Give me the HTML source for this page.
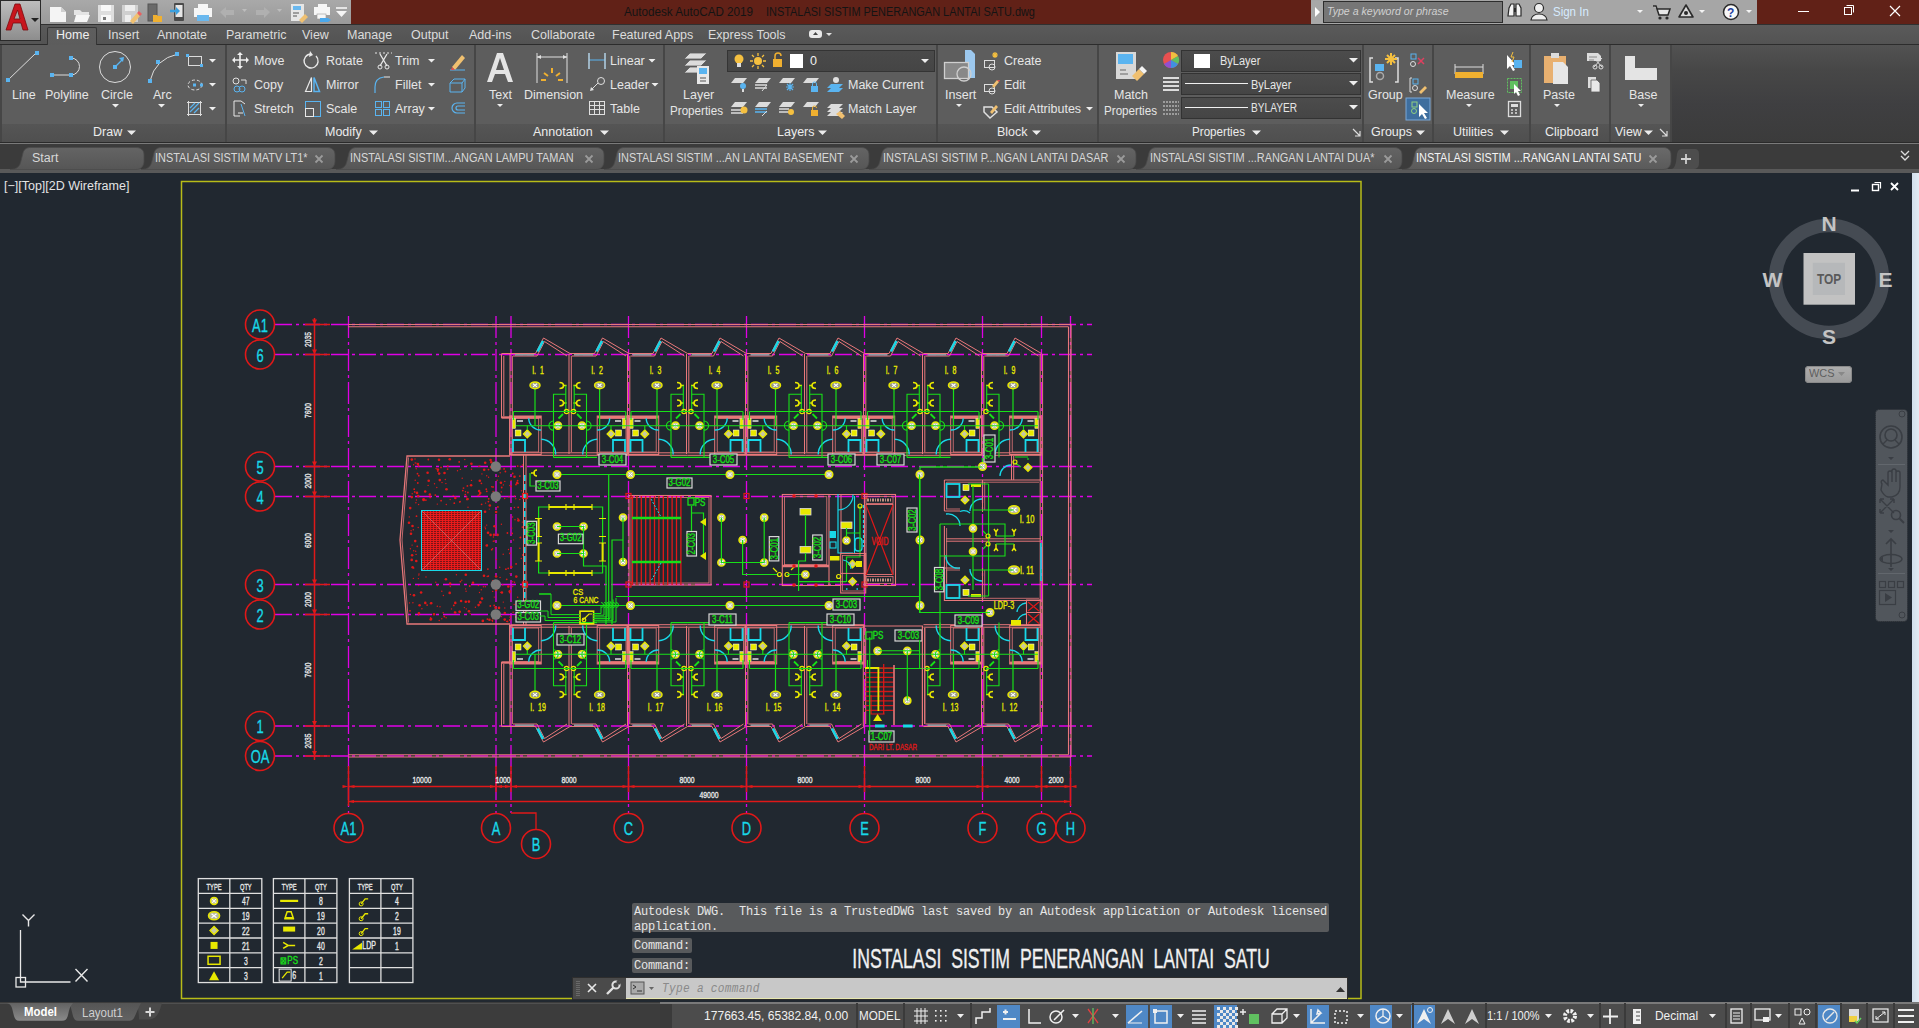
<!DOCTYPE html>
<html><head><meta charset="utf-8"><title>AutoCAD</title><style>
*{margin:0;padding:0;box-sizing:content-box}
html,body{width:1919px;height:1028px;overflow:hidden;background:#212830;font-family:"Liberation Sans",sans-serif}
.t{position:absolute;white-space:nowrap;line-height:1.15;font-family:"Liberation Sans",sans-serif}
svg{position:absolute;overflow:visible}
</style></head>
<body>
<div style="position:absolute;left:0px;top:173px;width:1919px;height:829px;background:#212830"></div><div style="position:absolute;left:1912px;top:173px;width:7px;height:829px;background:linear-gradient(90deg,#d2dfec,#e2ebf4)"></div><div class="t" style="left:4px;top:179px;font-size:12.5px;color:#e4e4e4;">[−][Top][2D Wireframe]</div><svg style="position:absolute;left:1848px;top:180px;" width="60" height="14" viewBox="0 0 60 14"><path d="M3 10.5 h8" stroke="#fff" stroke-width="2"/><rect x="24.5" y="4.5" width="6" height="6" fill="none" stroke="#fff" stroke-width="1.4"/><path d="M26.5 2.5 h6 v6" fill="none" stroke="#fff" stroke-width="1.2"/><path d="M43 3 l7 7 M50 3 l-7 7" stroke="#fff" stroke-width="1.8"/></svg><svg style="position:absolute;left:1769px;top:219px;overflow:visible" width="130" height="130" viewBox="0 0 130 130"><circle cx="60" cy="60" r="53.5" fill="none" stroke="#454b53" stroke-width="13.5"/><rect x="34.5" y="34" width="51.5" height="51.7" fill="#c2c2c2"/><rect x="43.8" y="43.8" width="32.2" height="32.2" fill="#b6b8ba"/><text transform="translate(60 65) scale(0.85 1)" text-anchor="middle" font-family="Liberation Sans" font-weight="bold" font-size="14" fill="#5a5a5a">TOP</text><text x="60" y="12" text-anchor="middle" font-family="Liberation Sans" font-weight="bold" font-size="21" fill="#c4c4c4">N</text><text x="60" y="125" text-anchor="middle" font-family="Liberation Sans" font-weight="bold" font-size="21" fill="#c4c4c4">S</text><text x="3.5" y="67.5" text-anchor="middle" font-family="Liberation Sans" font-weight="bold" font-size="21" fill="#c4c4c4">W</text><text x="116.5" y="67.5" text-anchor="middle" font-family="Liberation Sans" font-weight="bold" font-size="21" fill="#c4c4c4">E</text></svg><div style="position:absolute;left:1805px;top:366px;width:47px;height:17px;background:linear-gradient(#adadad,#9a9a9a);border-radius:4px;box-shadow:inset 0 0 0 1px #8a8a8a"></div><div class="t" style="left:1809px;top:367px;font-size:11.5px;color:#5e5e5e;;transform:scaleX(0.95);transform-origin:0 0">WCS</div><svg style="position:absolute;left:1838px;top:372px;" width="8" height="6" viewBox="0 0 8 6"><path d="M0 0 h7 l-3.5 4z" fill="#888"/></svg><svg style="position:absolute;left:1875px;top:409px;" width="34" height="214" viewBox="0 0 34 214"><rect x="0.5" y="0.5" width="32" height="212" rx="4" fill="#51565c" stroke="#2a2e34" stroke-dasharray="1 1"/><circle cx="27" cy="5" r="3" fill="none" stroke="#3a3e44"/><circle cx="27" cy="206" r="3" fill="none" stroke="#3a3e44"/><circle cx="16" cy="28" r="11" fill="none" stroke="#3a3e44" stroke-width="1.6"/><circle cx="16" cy="26" r="6" fill="none" stroke="#3a3e44" stroke-width="1.6"/><path d="M8 35 l4-4 M24 35 l-4-4" stroke="#3a3e44" stroke-width="1.4"/><path d="M13 48 h6 l-3 3z M13 121 h6 l-3 3z M13 159 h6 l-3 3z" fill="#3a3e44"/><path d="M3 55.5 h27 M3 164.5 h27" stroke="#62676d"/><path d="M7 75 q-2-3 1-4 l5 5 v-12 q0-2 2-2 q2 0 2 2 v9 v-11 q0-2 2-2 q2 0 2 2 v11 v-9 q0-2 2-2 q2 0 2 2 v14 q0 8 -8 10 h-4 q-4 -1 -7 -7z" fill="none" stroke="#3a3e44" stroke-width="1.4"/><path d="M5 90 l14 14 M19 90 l-14 14 M5 90 v4 M5 90 h4 M19 90 h-4 M19 90 v4 M5 104 v-4 M5 104 h4" stroke="#3a3e44" stroke-width="1.4" fill="none"/><circle cx="21" cy="106" r="4.5" fill="none" stroke="#3a3e44" stroke-width="1.6"/><path d="M24 109 l5 5" stroke="#3a3e44" stroke-width="2"/><path d="M16 130 v28 M11 135 l5-5 5 5" stroke="#3a3e44" stroke-width="1.6" fill="none"/><ellipse cx="16" cy="150" rx="11" ry="4.5" fill="none" stroke="#3a3e44" stroke-width="1.4"/><path d="M5 150 l3 -3 v6z" fill="#3a3e44"/><rect x="4.5" y="172.5" width="6" height="6" fill="none" stroke="#3a3e44" stroke-width="1.2"/><rect x="13.5" y="172.5" width="6" height="6" fill="none" stroke="#3a3e44" stroke-width="1.2"/><rect x="22.5" y="172.5" width="6" height="6" fill="none" stroke="#3a3e44" stroke-width="1.2"/><rect x="4.5" y="181.5" width="16" height="14" fill="none" stroke="#3a3e44" stroke-width="1.2"/><path d="M10 184 v9 l7 -4.5z" fill="#3a3e44"/></svg>
<svg style="left:0;top:0" width="1919" height="1028" viewBox="0 0 1919 1028"><line x1="275" y1="324.5" x2="1092" y2="324.5" stroke="#e000e6" stroke-width="1.3" stroke-dasharray="17 4 3 4"/><line x1="275" y1="354.5" x2="1092" y2="354.5" stroke="#e000e6" stroke-width="1.3" stroke-dasharray="17 4 3 4"/><line x1="275" y1="466.5" x2="1092" y2="466.5" stroke="#e000e6" stroke-width="1.3" stroke-dasharray="17 4 3 4"/><line x1="275" y1="496.5" x2="1092" y2="496.5" stroke="#e000e6" stroke-width="1.3" stroke-dasharray="17 4 3 4"/><line x1="275" y1="584.5" x2="1092" y2="584.5" stroke="#e000e6" stroke-width="1.3" stroke-dasharray="17 4 3 4"/><line x1="275" y1="614.5" x2="516" y2="614.5" stroke="#e000e6" stroke-width="1.3" stroke-dasharray="17 4 3 4"/><line x1="275" y1="726" x2="1092" y2="726" stroke="#e000e6" stroke-width="1.3" stroke-dasharray="17 4 3 4"/><line x1="275" y1="756" x2="1092" y2="756" stroke="#e000e6" stroke-width="1.3" stroke-dasharray="17 4 3 4"/><line x1="348.5" y1="316" x2="348.5" y2="813" stroke="#e000e6" stroke-width="1.3" stroke-dasharray="22 4 3 4"/><line x1="496" y1="316" x2="496" y2="813" stroke="#e000e6" stroke-width="1.3" stroke-dasharray="22 4 3 4"/><line x1="511" y1="316" x2="511" y2="813" stroke="#e000e6" stroke-width="1.3" stroke-dasharray="22 4 3 4"/><line x1="628.5" y1="316" x2="628.5" y2="813" stroke="#e000e6" stroke-width="1.3" stroke-dasharray="22 4 3 4"/><line x1="746.5" y1="316" x2="746.5" y2="813" stroke="#e000e6" stroke-width="1.3" stroke-dasharray="22 4 3 4"/><line x1="864.5" y1="316" x2="864.5" y2="813" stroke="#e000e6" stroke-width="1.3" stroke-dasharray="22 4 3 4"/><line x1="982.5" y1="316" x2="982.5" y2="813" stroke="#e000e6" stroke-width="1.3" stroke-dasharray="22 4 3 4"/><line x1="1041.5" y1="316" x2="1041.5" y2="813" stroke="#e000e6" stroke-width="1.3" stroke-dasharray="22 4 3 4"/><line x1="1070.5" y1="316" x2="1070.5" y2="813" stroke="#e000e6" stroke-width="1.3" stroke-dasharray="22 4 3 4"/><circle cx="260" cy="324.5" r="14.5" fill="#212830" stroke="#e01818" stroke-width="1.6"/><text transform="translate(260 331.5) scale(0.68 1)" text-anchor="middle" font-family="Liberation Sans" font-size="19" fill="#18d8e8" stroke="#18d8e8" stroke-width="0.35" >A1</text><circle cx="260" cy="354.5" r="14.5" fill="#212830" stroke="#e01818" stroke-width="1.6"/><text transform="translate(260 361.5) scale(0.68 1)" text-anchor="middle" font-family="Liberation Sans" font-size="19" fill="#18d8e8" stroke="#18d8e8" stroke-width="0.35" >6</text><circle cx="260" cy="466.5" r="14.5" fill="#212830" stroke="#e01818" stroke-width="1.6"/><text transform="translate(260 473.5) scale(0.68 1)" text-anchor="middle" font-family="Liberation Sans" font-size="19" fill="#18d8e8" stroke="#18d8e8" stroke-width="0.35" >5</text><circle cx="260" cy="496.5" r="14.5" fill="#212830" stroke="#e01818" stroke-width="1.6"/><text transform="translate(260 503.5) scale(0.68 1)" text-anchor="middle" font-family="Liberation Sans" font-size="19" fill="#18d8e8" stroke="#18d8e8" stroke-width="0.35" >4</text><circle cx="260" cy="584.5" r="14.5" fill="#212830" stroke="#e01818" stroke-width="1.6"/><text transform="translate(260 591.5) scale(0.68 1)" text-anchor="middle" font-family="Liberation Sans" font-size="19" fill="#18d8e8" stroke="#18d8e8" stroke-width="0.35" >3</text><circle cx="260" cy="614.5" r="14.5" fill="#212830" stroke="#e01818" stroke-width="1.6"/><text transform="translate(260 621.5) scale(0.68 1)" text-anchor="middle" font-family="Liberation Sans" font-size="19" fill="#18d8e8" stroke="#18d8e8" stroke-width="0.35" >2</text><circle cx="260" cy="726" r="14.5" fill="#212830" stroke="#e01818" stroke-width="1.6"/><text transform="translate(260 733) scale(0.68 1)" text-anchor="middle" font-family="Liberation Sans" font-size="19" fill="#18d8e8" stroke="#18d8e8" stroke-width="0.35" >1</text><circle cx="260" cy="756" r="14.5" fill="#212830" stroke="#e01818" stroke-width="1.6"/><text transform="translate(260 763) scale(0.68 1)" text-anchor="middle" font-family="Liberation Sans" font-size="19" fill="#18d8e8" stroke="#18d8e8" stroke-width="0.35" >OA</text><circle cx="348.5" cy="828" r="14.5" fill="#212830" stroke="#e01818" stroke-width="1.6"/><text transform="translate(348.5 835) scale(0.68 1)" text-anchor="middle" font-family="Liberation Sans" font-size="19" fill="#18d8e8" stroke="#18d8e8" stroke-width="0.35" >A1</text><circle cx="496" cy="828" r="14.5" fill="#212830" stroke="#e01818" stroke-width="1.6"/><text transform="translate(496 835) scale(0.68 1)" text-anchor="middle" font-family="Liberation Sans" font-size="19" fill="#18d8e8" stroke="#18d8e8" stroke-width="0.35" >A</text><path d="M511 813 H536 V829" stroke="#e01818" stroke-width="1.3" fill="none" /><circle cx="536" cy="844" r="14.5" fill="#212830" stroke="#e01818" stroke-width="1.6"/><text transform="translate(536 851) scale(0.68 1)" text-anchor="middle" font-family="Liberation Sans" font-size="19" fill="#18d8e8" stroke="#18d8e8" stroke-width="0.35" >B</text><circle cx="628.5" cy="828" r="14.5" fill="#212830" stroke="#e01818" stroke-width="1.6"/><text transform="translate(628.5 835) scale(0.68 1)" text-anchor="middle" font-family="Liberation Sans" font-size="19" fill="#18d8e8" stroke="#18d8e8" stroke-width="0.35" >C</text><circle cx="746.5" cy="828" r="14.5" fill="#212830" stroke="#e01818" stroke-width="1.6"/><text transform="translate(746.5 835) scale(0.68 1)" text-anchor="middle" font-family="Liberation Sans" font-size="19" fill="#18d8e8" stroke="#18d8e8" stroke-width="0.35" >D</text><circle cx="864.5" cy="828" r="14.5" fill="#212830" stroke="#e01818" stroke-width="1.6"/><text transform="translate(864.5 835) scale(0.68 1)" text-anchor="middle" font-family="Liberation Sans" font-size="19" fill="#18d8e8" stroke="#18d8e8" stroke-width="0.35" >E</text><circle cx="982.5" cy="828" r="14.5" fill="#212830" stroke="#e01818" stroke-width="1.6"/><text transform="translate(982.5 835) scale(0.68 1)" text-anchor="middle" font-family="Liberation Sans" font-size="19" fill="#18d8e8" stroke="#18d8e8" stroke-width="0.35" >F</text><circle cx="1041.5" cy="828" r="14.5" fill="#212830" stroke="#e01818" stroke-width="1.6"/><text transform="translate(1041.5 835) scale(0.68 1)" text-anchor="middle" font-family="Liberation Sans" font-size="19" fill="#18d8e8" stroke="#18d8e8" stroke-width="0.35" >G</text><circle cx="1070.5" cy="828" r="14.5" fill="#212830" stroke="#e01818" stroke-width="1.6"/><text transform="translate(1070.5 835) scale(0.68 1)" text-anchor="middle" font-family="Liberation Sans" font-size="19" fill="#18d8e8" stroke="#18d8e8" stroke-width="0.35" >H</text><line x1="348" y1="324.5" x2="1071" y2="324.5" stroke="#e8787a" stroke-width="1.2" /><line x1="348" y1="326.8" x2="1068.5" y2="326.8" stroke="#e8787a" stroke-width="1.1" /><line x1="348" y1="754.8" x2="1068.5" y2="754.8" stroke="#e8787a" stroke-width="1.1" /><line x1="348" y1="757" x2="1071" y2="757" stroke="#e8787a" stroke-width="1.2" /><line x1="1068.5" y1="326.8" x2="1068.5" y2="754.8" stroke="#e8787a" stroke-width="1.1" /><line x1="1071" y1="324.5" x2="1071" y2="757" stroke="#e8787a" stroke-width="1.2" /><path d="M510 456 H407 L400 540 L407 624 H510" stroke="#e8787a" stroke-width="1.3" fill="none" /><path d="M408.5 457.5 L402 540 L408.5 622.5" stroke="#e8787a" stroke-width="0.8" fill="none" /><path d="M510 456 V453 H513 M510 624 V627 H513" stroke="#e8787a" stroke-width="1" fill="none" /><rect x="421.5" y="510.5" width="60" height="60" fill="#7a1418" stroke="#18d8e8" stroke-width="1"/><path d="M421.5 510.5 h60 M421.5 512.5 h60 M421.5 514.5 h60 M421.5 516.5 h60 M421.5 518.5 h60 M421.5 520.5 h60 M421.5 522.5 h60 M421.5 524.5 h60 M421.5 526.5 h60 M421.5 528.5 h60 M421.5 530.5 h60 M421.5 532.5 h60 M421.5 534.5 h60 M421.5 536.5 h60 M421.5 538.5 h60 M421.5 540.5 h60 M421.5 542.5 h60 M421.5 544.5 h60 M421.5 546.5 h60 M421.5 548.5 h60 M421.5 550.5 h60 M421.5 552.5 h60 M421.5 554.5 h60 M421.5 556.5 h60 M421.5 558.5 h60 M421.5 560.5 h60 M421.5 562.5 h60 M421.5 564.5 h60 M421.5 566.5 h60 M421.5 568.5 h60 M421.5 570.5 h60 M421.5 510.5 v60 M424.5 510.5 v60 M427.5 510.5 v60 M430.5 510.5 v60 M433.5 510.5 v60 M436.5 510.5 v60 M439.5 510.5 v60 M442.5 510.5 v60 M445.5 510.5 v60 M448.5 510.5 v60 M451.5 510.5 v60 M454.5 510.5 v60 M457.5 510.5 v60 M460.5 510.5 v60 M463.5 510.5 v60 M466.5 510.5 v60 M469.5 510.5 v60 M472.5 510.5 v60 M475.5 510.5 v60 M478.5 510.5 v60 M481.5 510.5 v60 " stroke="#f01c1c" stroke-width="0.9" fill="none" /><path d="M421.5 510.5 L481.5 570.5 M481.5 510.5 L421.5 570.5" stroke="#d08080" stroke-width="0.6" fill="none" /><rect x="421.5" y="510.5" width="60" height="60" fill="none" stroke="#18d8e8" stroke-width="1"/><circle cx="445.9" cy="483.6" r="0.7" fill="#e01818"/><circle cx="417.3" cy="546.3" r="0.9" fill="#e01818"/><circle cx="475.4" cy="607.3" r="0.7" fill="#e01818"/><circle cx="413.3" cy="529.7" r="0.7" fill="#e01818"/><circle cx="415.7" cy="551.2" r="0.7" fill="#e01818"/><circle cx="416.1" cy="554.4" r="0.7" fill="#e01818"/><circle cx="520.3" cy="466.6" r="0.7" fill="#e01818"/><circle cx="442.0" cy="482.5" r="0.7" fill="#e01818"/><circle cx="486.7" cy="475.8" r="0.7" fill="#e01818"/><circle cx="416.2" cy="468.7" r="0.7" fill="#e01818"/><circle cx="497.6" cy="534.9" r="1.3" fill="#e01818"/><circle cx="450.2" cy="499.5" r="0.7" fill="#e01818"/><circle cx="488.7" cy="498.8" r="0.9" fill="#e01818"/><circle cx="468.9" cy="601.6" r="1.3" fill="#e01818"/><circle cx="441.8" cy="618.8" r="0.7" fill="#e01818"/><circle cx="467.4" cy="485.9" r="0.9" fill="#e01818"/><circle cx="413.5" cy="567.9" r="0.9" fill="#e01818"/><circle cx="465.6" cy="588.9" r="0.7" fill="#e01818"/><circle cx="504.8" cy="613.0" r="1.3" fill="#e01818"/><circle cx="488.5" cy="469.6" r="0.9" fill="#e01818"/><circle cx="482.8" cy="620.9" r="1.3" fill="#e01818"/><circle cx="485.2" cy="462.7" r="1.3" fill="#e01818"/><circle cx="465.3" cy="494.6" r="0.9" fill="#e01818"/><circle cx="423.7" cy="499.4" r="1.3" fill="#e01818"/><circle cx="513.5" cy="539.9" r="0.7" fill="#e01818"/><circle cx="509.7" cy="592.5" r="0.9" fill="#e01818"/><circle cx="489.5" cy="619.8" r="1.3" fill="#e01818"/><circle cx="518.2" cy="483.6" r="0.7" fill="#e01818"/><circle cx="410.4" cy="594.5" r="0.7" fill="#e01818"/><circle cx="439.0" cy="459.7" r="1.3" fill="#e01818"/><circle cx="445.3" cy="479.5" r="0.7" fill="#e01818"/><circle cx="461.1" cy="601.0" r="1.3" fill="#e01818"/><circle cx="430.7" cy="619.5" r="1.3" fill="#e01818"/><circle cx="415.0" cy="459.0" r="0.7" fill="#e01818"/><circle cx="470.2" cy="613.7" r="0.7" fill="#e01818"/><circle cx="417.0" cy="492.9" r="1.3" fill="#e01818"/><circle cx="425.9" cy="500.1" r="0.9" fill="#e01818"/><circle cx="520.5" cy="537.3" r="0.9" fill="#e01818"/><circle cx="418.8" cy="475.7" r="0.9" fill="#e01818"/><circle cx="493.4" cy="537.0" r="0.7" fill="#e01818"/><circle cx="467.9" cy="492.5" r="0.9" fill="#e01818"/><circle cx="412.1" cy="545.1" r="0.7" fill="#e01818"/><circle cx="488.4" cy="501.6" r="0.9" fill="#e01818"/><circle cx="512.5" cy="517.0" r="0.7" fill="#e01818"/><circle cx="469.7" cy="586.0" r="0.9" fill="#e01818"/><circle cx="498.9" cy="582.6" r="0.7" fill="#e01818"/><circle cx="500.9" cy="592.4" r="0.7" fill="#e01818"/><circle cx="492.3" cy="620.3" r="0.9" fill="#e01818"/><circle cx="462.8" cy="490.6" r="0.9" fill="#e01818"/><circle cx="460.0" cy="611.7" r="0.9" fill="#e01818"/><circle cx="517.9" cy="518.4" r="0.7" fill="#e01818"/><circle cx="521.3" cy="558.5" r="0.7" fill="#e01818"/><circle cx="500.2" cy="472.8" r="0.7" fill="#e01818"/><circle cx="512.7" cy="586.5" r="0.7" fill="#e01818"/><circle cx="463.5" cy="488.1" r="0.9" fill="#e01818"/><circle cx="418.9" cy="613.2" r="1.3" fill="#e01818"/><circle cx="461.8" cy="580.2" r="0.7" fill="#e01818"/><circle cx="491.6" cy="486.7" r="0.7" fill="#e01818"/><circle cx="412.1" cy="555.3" r="1.3" fill="#e01818"/><circle cx="500.9" cy="482.8" r="1.3" fill="#e01818"/><circle cx="471.5" cy="480.4" r="0.7" fill="#e01818"/><circle cx="500.1" cy="577.4" r="0.7" fill="#e01818"/><circle cx="469.0" cy="611.2" r="1.3" fill="#e01818"/><circle cx="521.5" cy="490.8" r="0.7" fill="#e01818"/><circle cx="412.2" cy="493.7" r="0.7" fill="#e01818"/><circle cx="496.1" cy="512.1" r="1.3" fill="#e01818"/><circle cx="504.1" cy="468.9" r="0.9" fill="#e01818"/><circle cx="511.3" cy="567.0" r="1.3" fill="#e01818"/><circle cx="503.3" cy="602.1" r="0.7" fill="#e01818"/><circle cx="411.1" cy="530.7" r="0.7" fill="#e01818"/><circle cx="478.4" cy="585.5" r="0.7" fill="#e01818"/><circle cx="491.7" cy="549.7" r="0.9" fill="#e01818"/><circle cx="486.8" cy="545.5" r="1.3" fill="#e01818"/><circle cx="498.4" cy="476.3" r="0.7" fill="#e01818"/><circle cx="437.3" cy="504.1" r="0.7" fill="#e01818"/><circle cx="495.6" cy="607.7" r="1.3" fill="#e01818"/><circle cx="446.1" cy="617.7" r="0.7" fill="#e01818"/><circle cx="488.0" cy="532.7" r="1.3" fill="#e01818"/><circle cx="466.9" cy="499.4" r="0.9" fill="#e01818"/><circle cx="514.2" cy="604.5" r="0.7" fill="#e01818"/><circle cx="504.8" cy="481.4" r="0.7" fill="#e01818"/><circle cx="485.5" cy="528.8" r="0.7" fill="#e01818"/><circle cx="485.3" cy="586.8" r="0.7" fill="#e01818"/><circle cx="516.1" cy="563.9" r="0.9" fill="#e01818"/><circle cx="425.3" cy="602.9" r="1.3" fill="#e01818"/><circle cx="434.0" cy="614.3" r="1.3" fill="#e01818"/><circle cx="509.9" cy="485.5" r="0.7" fill="#e01818"/><circle cx="491.3" cy="462.2" r="1.3" fill="#e01818"/><circle cx="459.2" cy="461.9" r="0.9" fill="#e01818"/><circle cx="468.0" cy="507.2" r="0.7" fill="#e01818"/><circle cx="421.9" cy="608.7" r="0.7" fill="#e01818"/><circle cx="519.8" cy="476.1" r="0.9" fill="#e01818"/><circle cx="440.0" cy="606.7" r="0.7" fill="#e01818"/><circle cx="439.8" cy="480.1" r="1.3" fill="#e01818"/><circle cx="505.9" cy="569.2" r="0.9" fill="#e01818"/><circle cx="446.3" cy="504.5" r="0.7" fill="#e01818"/><circle cx="457.5" cy="470.8" r="0.7" fill="#e01818"/><circle cx="481.3" cy="589.7" r="0.7" fill="#e01818"/><circle cx="478.3" cy="495.3" r="0.9" fill="#e01818"/><circle cx="507.4" cy="533.0" r="0.9" fill="#e01818"/><circle cx="522.4" cy="527.1" r="0.9" fill="#e01818"/><circle cx="479.9" cy="466.0" r="0.7" fill="#e01818"/><circle cx="515.9" cy="617.0" r="0.9" fill="#e01818"/><circle cx="414.7" cy="491.9" r="0.9" fill="#e01818"/><circle cx="485.6" cy="503.1" r="0.7" fill="#e01818"/><circle cx="522.4" cy="465.0" r="0.7" fill="#e01818"/><circle cx="492.6" cy="548.8" r="0.7" fill="#e01818"/><circle cx="467.6" cy="499.0" r="1.3" fill="#e01818"/><circle cx="421.1" cy="592.5" r="1.3" fill="#e01818"/><circle cx="510.3" cy="617.2" r="0.9" fill="#e01818"/><circle cx="487.4" cy="619.1" r="0.9" fill="#e01818"/><circle cx="431.6" cy="602.8" r="0.7" fill="#e01818"/><circle cx="415.2" cy="480.2" r="0.7" fill="#e01818"/><circle cx="480.3" cy="602.4" r="1.3" fill="#e01818"/><circle cx="427.6" cy="472.8" r="1.3" fill="#e01818"/><circle cx="508.2" cy="568.3" r="0.9" fill="#e01818"/><circle cx="414.2" cy="489.2" r="0.9" fill="#e01818"/><circle cx="459.8" cy="501.9" r="0.9" fill="#e01818"/><circle cx="519.9" cy="548.2" r="0.7" fill="#e01818"/><circle cx="412.9" cy="602.8" r="0.7" fill="#e01818"/><circle cx="449.7" cy="459.2" r="1.3" fill="#e01818"/><circle cx="418.6" cy="504.5" r="0.7" fill="#e01818"/><circle cx="437.3" cy="585.5" r="0.7" fill="#e01818"/><circle cx="439.1" cy="473.6" r="1.3" fill="#e01818"/><circle cx="418.6" cy="615.1" r="0.7" fill="#e01818"/><circle cx="484.0" cy="575.7" r="1.3" fill="#e01818"/><circle cx="496.1" cy="576.5" r="1.3" fill="#e01818"/><circle cx="426.0" cy="577.0" r="0.7" fill="#e01818"/><circle cx="414.0" cy="595.2" r="1.3" fill="#e01818"/><circle cx="492.7" cy="591.4" r="0.7" fill="#e01818"/><circle cx="512.7" cy="581.7" r="0.7" fill="#e01818"/><circle cx="503.2" cy="554.2" r="0.7" fill="#e01818"/><circle cx="418.7" cy="465.8" r="0.9" fill="#e01818"/><circle cx="518.4" cy="520.4" r="1.3" fill="#e01818"/><circle cx="464.8" cy="459.5" r="0.7" fill="#e01818"/><circle cx="494.3" cy="541.0" r="0.7" fill="#e01818"/><circle cx="484.2" cy="469.8" r="1.3" fill="#e01818"/><circle cx="437.8" cy="471.1" r="0.9" fill="#e01818"/><circle cx="435.8" cy="582.3" r="0.7" fill="#e01818"/><circle cx="493.3" cy="618.0" r="1.3" fill="#e01818"/><circle cx="505.4" cy="471.5" r="0.9" fill="#e01818"/><circle cx="496.4" cy="559.6" r="0.7" fill="#e01818"/><circle cx="417.8" cy="483.0" r="0.9" fill="#e01818"/><circle cx="479.8" cy="480.8" r="1.3" fill="#e01818"/><circle cx="415.9" cy="502.8" r="0.7" fill="#e01818"/><circle cx="487.9" cy="569.1" r="0.9" fill="#e01818"/><circle cx="489.8" cy="505.5" r="1.3" fill="#e01818"/><circle cx="462.2" cy="478.3" r="0.7" fill="#e01818"/><circle cx="444.5" cy="473.0" r="1.3" fill="#e01818"/><circle cx="411.0" cy="533.8" r="1.3" fill="#e01818"/><circle cx="522.3" cy="522.1" r="0.7" fill="#e01818"/><circle cx="417.5" cy="473.7" r="0.9" fill="#e01818"/><circle cx="517.6" cy="480.6" r="0.9" fill="#e01818"/><circle cx="510.1" cy="573.6" r="0.7" fill="#e01818"/><circle cx="465.8" cy="601.8" r="1.3" fill="#e01818"/><circle cx="411.8" cy="459.6" r="1.3" fill="#e01818"/><circle cx="486.7" cy="525.1" r="0.7" fill="#e01818"/><circle cx="454.4" cy="612.2" r="0.7" fill="#e01818"/><circle cx="490.3" cy="606.0" r="0.9" fill="#e01818"/><circle cx="437.9" cy="469.6" r="1.3" fill="#e01818"/><circle cx="522.9" cy="555.0" r="0.9" fill="#e01818"/><circle cx="514.5" cy="582.2" r="0.7" fill="#e01818"/><circle cx="441.0" cy="467.4" r="0.9" fill="#e01818"/><circle cx="481.4" cy="483.3" r="0.9" fill="#e01818"/><circle cx="497.1" cy="587.0" r="1.3" fill="#e01818"/><circle cx="509.8" cy="591.3" r="1.3" fill="#e01818"/><circle cx="513.1" cy="612.3" r="0.7" fill="#e01818"/><circle cx="491.0" cy="467.1" r="1.3" fill="#e01818"/><circle cx="460.4" cy="581.7" r="0.9" fill="#e01818"/><circle cx="464.4" cy="607.6" r="0.7" fill="#e01818"/><circle cx="441.1" cy="500.7" r="0.9" fill="#e01818"/><circle cx="455.3" cy="497.9" r="1.3" fill="#e01818"/><circle cx="428.1" cy="485.4" r="0.7" fill="#e01818"/><circle cx="466.1" cy="591.3" r="0.7" fill="#e01818"/><circle cx="495.6" cy="528.7" r="0.7" fill="#e01818"/><circle cx="436.8" cy="487.5" r="0.7" fill="#e01818"/><circle cx="501.3" cy="491.9" r="0.7" fill="#e01818"/><circle cx="494.5" cy="526.3" r="1.3" fill="#e01818"/><circle cx="494.0" cy="493.2" r="0.9" fill="#e01818"/><circle cx="447.6" cy="469.1" r="0.9" fill="#e01818"/><circle cx="487.3" cy="545.3" r="0.7" fill="#e01818"/><circle cx="419.6" cy="605.2" r="1.3" fill="#e01818"/><circle cx="517.7" cy="597.3" r="0.7" fill="#e01818"/><circle cx="496.1" cy="590.1" r="1.3" fill="#e01818"/><circle cx="409.0" cy="522.8" r="1.3" fill="#e01818"/><circle cx="519.8" cy="499.5" r="0.7" fill="#e01818"/><circle cx="434.5" cy="483.8" r="0.7" fill="#e01818"/><circle cx="516.3" cy="576.6" r="1.3" fill="#e01818"/><circle cx="418.7" cy="585.6" r="0.7" fill="#e01818"/><circle cx="498.2" cy="496.9" r="0.7" fill="#e01818"/><circle cx="423.6" cy="500.0" r="1.3" fill="#e01818"/><circle cx="488.6" cy="477.3" r="0.7" fill="#e01818"/><circle cx="443.2" cy="612.8" r="0.7" fill="#e01818"/><circle cx="453.2" cy="495.4" r="0.7" fill="#e01818"/><circle cx="410.2" cy="508.1" r="1.3" fill="#e01818"/><circle cx="504.7" cy="498.5" r="0.7" fill="#e01818"/><circle cx="471.4" cy="463.8" r="1.3" fill="#e01818"/><circle cx="489.3" cy="509.1" r="0.7" fill="#e01818"/><circle cx="431.1" cy="603.2" r="1.3" fill="#e01818"/><circle cx="418.2" cy="496.1" r="1.3" fill="#e01818"/><circle cx="514.5" cy="496.0" r="0.7" fill="#e01818"/><circle cx="488.3" cy="576.1" r="0.9" fill="#e01818"/><circle cx="486.8" cy="491.3" r="0.9" fill="#e01818"/><circle cx="493.3" cy="541.3" r="0.7" fill="#e01818"/><circle cx="465.5" cy="491.7" r="0.7" fill="#e01818"/><circle cx="435.3" cy="495.1" r="0.9" fill="#e01818"/><circle cx="478.6" cy="605.1" r="1.3" fill="#e01818"/><circle cx="517.2" cy="482.9" r="1.3" fill="#e01818"/><circle cx="415.2" cy="462.9" r="0.7" fill="#e01818"/><circle cx="456.4" cy="574.7" r="0.7" fill="#e01818"/><circle cx="453.8" cy="605.4" r="0.9" fill="#e01818"/><circle cx="492.5" cy="621.6" r="0.7" fill="#e01818"/><circle cx="446.5" cy="489.2" r="1.3" fill="#e01818"/><circle cx="412.6" cy="567.3" r="1.3" fill="#e01818"/><circle cx="504.7" cy="619.6" r="1.3" fill="#e01818"/><circle cx="428.3" cy="459.5" r="0.9" fill="#e01818"/><circle cx="418.2" cy="527.5" r="0.7" fill="#e01818"/><circle cx="473.0" cy="582.7" r="1.3" fill="#e01818"/><circle cx="449.7" cy="592.9" r="1.3" fill="#e01818"/><circle cx="419.0" cy="574.0" r="0.7" fill="#e01818"/><circle cx="451.5" cy="608.9" r="0.7" fill="#e01818"/><circle cx="445.9" cy="579.2" r="1.3" fill="#e01818"/><circle cx="412.5" cy="526.0" r="1.3" fill="#e01818"/><circle cx="413.6" cy="464.7" r="0.7" fill="#e01818"/><circle cx="500.6" cy="469.1" r="0.7" fill="#e01818"/><circle cx="494.2" cy="605.5" r="0.9" fill="#e01818"/><circle cx="517.7" cy="466.1" r="0.9" fill="#e01818"/><circle cx="514.4" cy="507.5" r="0.7" fill="#e01818"/><circle cx="411.8" cy="497.1" r="1.3" fill="#e01818"/><circle cx="490.6" cy="534.9" r="1.3" fill="#e01818"/><circle cx="499.0" cy="607.9" r="1.3" fill="#e01818"/><circle cx="410.0" cy="610.8" r="0.9" fill="#e01818"/><circle cx="502.8" cy="585.0" r="0.7" fill="#e01818"/><circle cx="450.3" cy="586.5" r="0.7" fill="#e01818"/><circle cx="471.1" cy="485.2" r="1.3" fill="#e01818"/><circle cx="509.7" cy="620.0" r="0.9" fill="#e01818"/><circle cx="480.2" cy="493.0" r="1.3" fill="#e01818"/><circle cx="465.8" cy="574.7" r="1.3" fill="#e01818"/><circle cx="428.7" cy="480.7" r="1.3" fill="#e01818"/><circle cx="494.3" cy="597.1" r="0.7" fill="#e01818"/><circle cx="497.9" cy="506.9" r="0.9" fill="#e01818"/><circle cx="493.1" cy="491.5" r="0.7" fill="#e01818"/><circle cx="430.2" cy="497.4" r="0.9" fill="#e01818"/><circle cx="509.8" cy="553.3" r="0.9" fill="#e01818"/><circle cx="416.4" cy="500.0" r="0.7" fill="#e01818"/><circle cx="466.8" cy="496.7" r="0.7" fill="#e01818"/><circle cx="483.5" cy="620.5" r="0.7" fill="#e01818"/><circle cx="409.5" cy="602.9" r="0.7" fill="#e01818"/><circle cx="504.8" cy="608.0" r="0.7" fill="#e01818"/><circle cx="509.0" cy="497.0" r="0.7" fill="#e01818"/><circle cx="430.6" cy="617.6" r="0.7" fill="#e01818"/><circle cx="515.0" cy="519.7" r="0.7" fill="#e01818"/><circle cx="460.2" cy="501.4" r="0.7" fill="#e01818"/><circle cx="479.7" cy="494.5" r="0.9" fill="#e01818"/><circle cx="447.8" cy="466.2" r="0.9" fill="#e01818"/><circle cx="413.4" cy="578.4" r="0.7" fill="#e01818"/><circle cx="501.9" cy="592.5" r="1.3" fill="#e01818"/><circle cx="486.3" cy="489.2" r="0.9" fill="#e01818"/><circle cx="417.9" cy="464.1" r="1.3" fill="#e01818"/><circle cx="471.5" cy="469.3" r="0.7" fill="#e01818"/><circle cx="499.7" cy="567.2" r="0.7" fill="#e01818"/><circle cx="481.9" cy="473.9" r="0.7" fill="#e01818"/><circle cx="454.3" cy="503.2" r="0.9" fill="#e01818"/><circle cx="485.1" cy="527.1" r="0.7" fill="#e01818"/><circle cx="507.5" cy="621.4" r="0.9" fill="#e01818"/><circle cx="455.2" cy="612.5" r="1.3" fill="#e01818"/><circle cx="511.8" cy="528.1" r="0.7" fill="#e01818"/><circle cx="455.3" cy="602.9" r="1.3" fill="#e01818"/><circle cx="497.1" cy="480.2" r="0.7" fill="#e01818"/><circle cx="512.7" cy="473.5" r="0.9" fill="#e01818"/><circle cx="493.0" cy="487.0" r="0.9" fill="#e01818"/><circle cx="514.5" cy="476.7" r="1.3" fill="#e01818"/><circle cx="494.9" cy="588.1" r="0.7" fill="#e01818"/><circle cx="443.4" cy="595.5" r="0.7" fill="#e01818"/><circle cx="520.2" cy="537.7" r="0.7" fill="#e01818"/><circle cx="418.8" cy="575.1" r="0.7" fill="#e01818"/><circle cx="482.0" cy="598.6" r="1.3" fill="#e01818"/><circle cx="479.1" cy="491.0" r="1.3" fill="#e01818"/><circle cx="429.9" cy="494.6" r="1.3" fill="#e01818"/><circle cx="516.0" cy="484.5" r="0.9" fill="#e01818"/><circle cx="423.0" cy="499.3" r="0.7" fill="#e01818"/><circle cx="413.7" cy="550.7" r="0.7" fill="#e01818"/><circle cx="485.1" cy="511.8" r="1.3" fill="#e01818"/><circle cx="411.7" cy="559.9" r="1.3" fill="#e01818"/><circle cx="479.5" cy="592.5" r="0.7" fill="#e01818"/><circle cx="501.4" cy="524.3" r="0.7" fill="#e01818"/><circle cx="467.2" cy="465.6" r="0.7" fill="#e01818"/><circle cx="418.4" cy="578.6" r="0.7" fill="#e01818"/><circle cx="415.2" cy="541.1" r="1.3" fill="#e01818"/><circle cx="483.4" cy="586.8" r="0.7" fill="#e01818"/><circle cx="506.7" cy="621.4" r="0.7" fill="#e01818"/><circle cx="431.1" cy="619.0" r="1.3" fill="#e01818"/><circle cx="441.8" cy="591.2" r="0.7" fill="#e01818"/><circle cx="487.2" cy="576.5" r="0.7" fill="#e01818"/><circle cx="416.5" cy="516.2" r="0.9" fill="#e01818"/><circle cx="427.1" cy="605.1" r="0.9" fill="#e01818"/><circle cx="512.2" cy="533.4" r="0.9" fill="#e01818"/><circle cx="466.3" cy="608.9" r="0.7" fill="#e01818"/><circle cx="481.6" cy="504.3" r="0.9" fill="#e01818"/><circle cx="511.1" cy="486.5" r="0.9" fill="#e01818"/><circle cx="508.5" cy="549.5" r="0.7" fill="#e01818"/><circle cx="506.7" cy="579.3" r="0.9" fill="#e01818"/><circle cx="439.2" cy="620.5" r="0.7" fill="#e01818"/><circle cx="450.1" cy="583.6" r="1.3" fill="#e01818"/><circle cx="518.2" cy="507.3" r="0.9" fill="#e01818"/><circle cx="444.3" cy="616.5" r="0.9" fill="#e01818"/><circle cx="492.6" cy="580.8" r="0.7" fill="#e01818"/><circle cx="511.1" cy="480.5" r="0.7" fill="#e01818"/><circle cx="478.8" cy="466.4" r="0.7" fill="#e01818"/><circle cx="409.3" cy="516.9" r="0.7" fill="#e01818"/><circle cx="503.4" cy="484.9" r="0.7" fill="#e01818"/><circle cx="515.8" cy="498.7" r="0.7" fill="#e01818"/><circle cx="460.4" cy="469.4" r="0.7" fill="#e01818"/><circle cx="508.3" cy="586.5" r="1.3" fill="#e01818"/><circle cx="501.5" cy="616.6" r="0.7" fill="#e01818"/><circle cx="459.6" cy="611.8" r="1.3" fill="#e01818"/><circle cx="437.3" cy="606.3" r="0.7" fill="#e01818"/><circle cx="416.0" cy="463.1" r="0.7" fill="#e01818"/><circle cx="436.1" cy="468.5" r="0.7" fill="#e01818"/><circle cx="410.4" cy="548.8" r="0.7" fill="#e01818"/><circle cx="425.2" cy="491.5" r="1.3" fill="#e01818"/><circle cx="501.7" cy="487.5" r="0.9" fill="#e01818"/><circle cx="416.3" cy="561.0" r="1.3" fill="#e01818"/><circle cx="490.6" cy="460.0" r="1.3" fill="#e01818"/><circle cx="494.0" cy="534.8" r="1.3" fill="#e01818"/><circle cx="495.8" cy="466.5" r="5.2" fill="#7a7a7a"/><circle cx="495.8" cy="496.5" r="5.2" fill="#7a7a7a"/><circle cx="495.8" cy="584.5" r="5.2" fill="#7a7a7a"/><circle cx="495.8" cy="614.5" r="5.2" fill="#7a7a7a"/><line x1="523.5" y1="454" x2="523.5" y2="626" stroke="#e8787a" stroke-width="1" /><line x1="526" y1="454" x2="526" y2="626" stroke="#e8787a" stroke-width="1" /><line x1="524.8" y1="475" x2="524.8" y2="610" stroke="#18d8e8" stroke-width="1.6" stroke-dasharray="6 3"/><path d="M511 353.5 L535.5 353.5 L543.5 338 L570 353.5" stroke="#e8787a" stroke-width="1" fill="none" /><path d="M513 356 L537 356 L544.5 341.5 L567 356" stroke="#e8787a" stroke-width="1" fill="none" /><line x1="537.5" y1="351.5" x2="543" y2="341" stroke="#18d8e8" stroke-width="2.6" /><line x1="515" y1="354.8" x2="534" y2="354.8" stroke="#8f9aa4" stroke-width="1.6" /><line x1="510" y1="354" x2="510" y2="454" stroke="#e8787a" stroke-width="1" /><line x1="512.3" y1="356" x2="512.3" y2="452" stroke="#e8787a" stroke-width="1" /><rect x="509.5" y="416" width="31.700000000000045" height="38.5" fill="none" stroke="#e8787a" stroke-width="1"/><rect x="512.0" y="418.5" width="26.700000000000045" height="33.5" fill="none" stroke="#e8787a" stroke-width="0.8"/><line x1="509.5" y1="417.2" x2="541.2" y2="417.2" stroke="#e8787a" stroke-width="2.4" /><line x1="511" y1="452.8" x2="570" y2="452.8" stroke="#e8787a" stroke-width="1" /><line x1="511" y1="455.3" x2="570" y2="455.3" stroke="#e8787a" stroke-width="1" /><path d="M513.0 452 V440 H525.0 V452" stroke="#18d8e8" stroke-width="1.8" fill="none" /><path d="M528.7 418.3 A12 12 0 0 0 541.2 430" stroke="#18d8e8" stroke-width="1.4" fill="none" /><path d="M541.2 439.3 A15 15 0 0 1 555.7 454.5" stroke="#18d8e8" stroke-width="1.4" fill="none" /><rect x="512.4" y="418.3" width="3.2" height="10.2" fill="#e8e800" stroke="#ddd" stroke-width="0.5"/><path d="M517.0 421 h6" stroke="#f0f0f0" stroke-width="1.4" fill="none" /><rect x="515.2" y="430" width="5.8" height="6" fill="#e8e800" stroke="#fff" stroke-width="0.5"/><path d="M527.3 430.09999999999997 L531.0999999999999 433.9 L527.3 437.7 L523.5 433.9z" fill="#c8c8a0" stroke="#e8e800" stroke-width="1.4"/><line x1="527.3" y1="425.7" x2="527.3" y2="430" stroke="#18e018" stroke-width="1.1" /><text transform="translate(538 374) scale(0.7 1)" text-anchor="middle" font-family="Liberation Sans" font-size="10" fill="#e8e800" stroke="#e8e800" stroke-width="0.35" >I.&#160;&#160;1</text><line x1="535" y1="389" x2="535" y2="425.7" stroke="#18e018" stroke-width="1.2" /><ellipse cx="535" cy="385.3" rx="5" ry="3.4" fill="#9a9a88" stroke="#e8e800" stroke-width="1.5"/><path d="M533 383.7 l4 3.2 M537 383.7 l-4 3.2" stroke="#fff" stroke-width="1.1"/><path d="M570 353.5 L594.5 353.5 L602.5 338 L629 353.5" stroke="#e8787a" stroke-width="1" fill="none" /><path d="M572 356 L596 356 L603.5 341.5 L626 356" stroke="#e8787a" stroke-width="1" fill="none" /><line x1="596.5" y1="351.5" x2="602" y2="341" stroke="#18d8e8" stroke-width="2.6" /><line x1="574" y1="354.8" x2="593" y2="354.8" stroke="#8f9aa4" stroke-width="1.6" /><line x1="569" y1="354" x2="569" y2="454" stroke="#e8787a" stroke-width="1" /><line x1="571.3" y1="356" x2="571.3" y2="452" stroke="#e8787a" stroke-width="1" /><rect x="597.2" y="416" width="31.299999999999955" height="38.5" fill="none" stroke="#e8787a" stroke-width="1"/><rect x="599.7" y="418.5" width="26.299999999999955" height="33.5" fill="none" stroke="#e8787a" stroke-width="0.8"/><line x1="597.2" y1="417.2" x2="628.5" y2="417.2" stroke="#e8787a" stroke-width="2.4" /><line x1="570" y1="452.8" x2="629" y2="452.8" stroke="#e8787a" stroke-width="1" /><line x1="570" y1="455.3" x2="629" y2="455.3" stroke="#e8787a" stroke-width="1" /><path d="M613.0 452 V440 H625.0 V452" stroke="#18d8e8" stroke-width="1.8" fill="none" /><path d="M609.7 418.3 A12 12 0 0 1 597.2 430" stroke="#18d8e8" stroke-width="1.4" fill="none" /><path d="M597.2 439.3 A15 15 0 0 0 582.7 454.5" stroke="#18d8e8" stroke-width="1.4" fill="none" /><rect x="622.4" y="418.3" width="3.2" height="10.2" fill="#e8e800" stroke="#ddd" stroke-width="0.5"/><path d="M621.0 421 h-6" stroke="#f0f0f0" stroke-width="1.4" fill="none" /><rect x="615.7" y="430" width="5.8" height="6" fill="#e8e800" stroke="#fff" stroke-width="0.5"/><path d="M611.0 430.09999999999997 L614.8 433.9 L611.0 437.7 L607.2 433.9z" fill="#c8c8a0" stroke="#e8e800" stroke-width="1.4"/><line x1="611.0" y1="425.7" x2="611.0" y2="430" stroke="#18e018" stroke-width="1.1" /><text transform="translate(597 374) scale(0.7 1)" text-anchor="middle" font-family="Liberation Sans" font-size="10" fill="#e8e800" stroke="#e8e800" stroke-width="0.35" >I.&#160;&#160;2</text><line x1="599.6" y1="389" x2="599.6" y2="425.7" stroke="#18e018" stroke-width="1.2" /><ellipse cx="599.6" cy="385.3" rx="5" ry="3.4" fill="#9a9a88" stroke="#e8e800" stroke-width="1.5"/><path d="M597.6 383.7 l4 3.2 M601.6 383.7 l-4 3.2" stroke="#fff" stroke-width="1.1"/><path d="M628.5 353.5 L653.0 353.5 L661.0 338 L687.5 353.5" stroke="#e8787a" stroke-width="1" fill="none" /><path d="M630.5 356 L654.5 356 L662.0 341.5 L684.5 356" stroke="#e8787a" stroke-width="1" fill="none" /><line x1="655.0" y1="351.5" x2="660.5" y2="341" stroke="#18d8e8" stroke-width="2.6" /><line x1="632.5" y1="354.8" x2="651.5" y2="354.8" stroke="#8f9aa4" stroke-width="1.6" /><line x1="627.5" y1="354" x2="627.5" y2="454" stroke="#e8787a" stroke-width="1" /><line x1="629.8" y1="356" x2="629.8" y2="452" stroke="#e8787a" stroke-width="1" /><rect x="627.0" y="416" width="31.700000000000045" height="38.5" fill="none" stroke="#e8787a" stroke-width="1"/><rect x="629.5" y="418.5" width="26.700000000000045" height="33.5" fill="none" stroke="#e8787a" stroke-width="0.8"/><line x1="627.0" y1="417.2" x2="658.7" y2="417.2" stroke="#e8787a" stroke-width="2.4" /><line x1="628.5" y1="452.8" x2="687.5" y2="452.8" stroke="#e8787a" stroke-width="1" /><line x1="628.5" y1="455.3" x2="687.5" y2="455.3" stroke="#e8787a" stroke-width="1" /><path d="M630.5 452 V440 H642.5 V452" stroke="#18d8e8" stroke-width="1.8" fill="none" /><path d="M646.2 418.3 A12 12 0 0 0 658.7 430" stroke="#18d8e8" stroke-width="1.4" fill="none" /><path d="M658.7 439.3 A15 15 0 0 1 673.2 454.5" stroke="#18d8e8" stroke-width="1.4" fill="none" /><rect x="629.9" y="418.3" width="3.2" height="10.2" fill="#e8e800" stroke="#ddd" stroke-width="0.5"/><path d="M634.5 421 h6" stroke="#f0f0f0" stroke-width="1.4" fill="none" /><rect x="632.7" y="430" width="5.8" height="6" fill="#e8e800" stroke="#fff" stroke-width="0.5"/><path d="M644.8 430.09999999999997 L648.5999999999999 433.9 L644.8 437.7 L641.0 433.9z" fill="#c8c8a0" stroke="#e8e800" stroke-width="1.4"/><line x1="644.8" y1="425.7" x2="644.8" y2="430" stroke="#18e018" stroke-width="1.1" /><text transform="translate(655.5 374) scale(0.7 1)" text-anchor="middle" font-family="Liberation Sans" font-size="10" fill="#e8e800" stroke="#e8e800" stroke-width="0.35" >I.&#160;&#160;3</text><line x1="657.0" y1="389" x2="657.0" y2="425.7" stroke="#18e018" stroke-width="1.2" /><ellipse cx="657.0" cy="385.3" rx="5" ry="3.4" fill="#9a9a88" stroke="#e8e800" stroke-width="1.5"/><path d="M655.0 383.7 l4 3.2 M659.0 383.7 l-4 3.2" stroke="#fff" stroke-width="1.1"/><path d="M687.5 353.5 L712.0 353.5 L720.0 338 L746.5 353.5" stroke="#e8787a" stroke-width="1" fill="none" /><path d="M689.5 356 L713.5 356 L721.0 341.5 L743.5 356" stroke="#e8787a" stroke-width="1" fill="none" /><line x1="714.0" y1="351.5" x2="719.5" y2="341" stroke="#18d8e8" stroke-width="2.6" /><line x1="691.5" y1="354.8" x2="710.5" y2="354.8" stroke="#8f9aa4" stroke-width="1.6" /><line x1="686.5" y1="354" x2="686.5" y2="454" stroke="#e8787a" stroke-width="1" /><line x1="688.8" y1="356" x2="688.8" y2="452" stroke="#e8787a" stroke-width="1" /><rect x="714.7" y="416" width="31.299999999999955" height="38.5" fill="none" stroke="#e8787a" stroke-width="1"/><rect x="717.2" y="418.5" width="26.299999999999955" height="33.5" fill="none" stroke="#e8787a" stroke-width="0.8"/><line x1="714.7" y1="417.2" x2="746.0" y2="417.2" stroke="#e8787a" stroke-width="2.4" /><line x1="687.5" y1="452.8" x2="746.5" y2="452.8" stroke="#e8787a" stroke-width="1" /><line x1="687.5" y1="455.3" x2="746.5" y2="455.3" stroke="#e8787a" stroke-width="1" /><path d="M730.5 452 V440 H742.5 V452" stroke="#18d8e8" stroke-width="1.8" fill="none" /><path d="M727.2 418.3 A12 12 0 0 1 714.7 430" stroke="#18d8e8" stroke-width="1.4" fill="none" /><path d="M714.7 439.3 A15 15 0 0 0 700.2 454.5" stroke="#18d8e8" stroke-width="1.4" fill="none" /><rect x="739.9" y="418.3" width="3.2" height="10.2" fill="#e8e800" stroke="#ddd" stroke-width="0.5"/><path d="M738.5 421 h-6" stroke="#f0f0f0" stroke-width="1.4" fill="none" /><rect x="733.2" y="430" width="5.8" height="6" fill="#e8e800" stroke="#fff" stroke-width="0.5"/><path d="M728.5 430.09999999999997 L732.3 433.9 L728.5 437.7 L724.7 433.9z" fill="#c8c8a0" stroke="#e8e800" stroke-width="1.4"/><line x1="728.5" y1="425.7" x2="728.5" y2="430" stroke="#18e018" stroke-width="1.1" /><text transform="translate(714.5 374) scale(0.7 1)" text-anchor="middle" font-family="Liberation Sans" font-size="10" fill="#e8e800" stroke="#e8e800" stroke-width="0.35" >I.&#160;&#160;4</text><line x1="717.0" y1="389" x2="717.0" y2="425.7" stroke="#18e018" stroke-width="1.2" /><ellipse cx="717.0" cy="385.3" rx="5" ry="3.4" fill="#9a9a88" stroke="#e8e800" stroke-width="1.5"/><path d="M715.0 383.7 l4 3.2 M719.0 383.7 l-4 3.2" stroke="#fff" stroke-width="1.1"/><path d="M746.5 353.5 L771.0 353.5 L779.0 338 L805.5 353.5" stroke="#e8787a" stroke-width="1" fill="none" /><path d="M748.5 356 L772.5 356 L780.0 341.5 L802.5 356" stroke="#e8787a" stroke-width="1" fill="none" /><line x1="773.0" y1="351.5" x2="778.5" y2="341" stroke="#18d8e8" stroke-width="2.6" /><line x1="750.5" y1="354.8" x2="769.5" y2="354.8" stroke="#8f9aa4" stroke-width="1.6" /><line x1="745.5" y1="354" x2="745.5" y2="454" stroke="#e8787a" stroke-width="1" /><line x1="747.8" y1="356" x2="747.8" y2="452" stroke="#e8787a" stroke-width="1" /><rect x="745.0" y="416" width="31.700000000000045" height="38.5" fill="none" stroke="#e8787a" stroke-width="1"/><rect x="747.5" y="418.5" width="26.700000000000045" height="33.5" fill="none" stroke="#e8787a" stroke-width="0.8"/><line x1="745.0" y1="417.2" x2="776.7" y2="417.2" stroke="#e8787a" stroke-width="2.4" /><line x1="746.5" y1="452.8" x2="805.5" y2="452.8" stroke="#e8787a" stroke-width="1" /><line x1="746.5" y1="455.3" x2="805.5" y2="455.3" stroke="#e8787a" stroke-width="1" /><path d="M748.5 452 V440 H760.5 V452" stroke="#18d8e8" stroke-width="1.8" fill="none" /><path d="M764.2 418.3 A12 12 0 0 0 776.7 430" stroke="#18d8e8" stroke-width="1.4" fill="none" /><path d="M776.7 439.3 A15 15 0 0 1 791.2 454.5" stroke="#18d8e8" stroke-width="1.4" fill="none" /><rect x="747.9" y="418.3" width="3.2" height="10.2" fill="#e8e800" stroke="#ddd" stroke-width="0.5"/><path d="M752.5 421 h6" stroke="#f0f0f0" stroke-width="1.4" fill="none" /><rect x="750.7" y="430" width="5.8" height="6" fill="#e8e800" stroke="#fff" stroke-width="0.5"/><path d="M762.8 430.09999999999997 L766.5999999999999 433.9 L762.8 437.7 L759.0 433.9z" fill="#c8c8a0" stroke="#e8e800" stroke-width="1.4"/><line x1="762.8" y1="425.7" x2="762.8" y2="430" stroke="#18e018" stroke-width="1.1" /><text transform="translate(773.5 374) scale(0.7 1)" text-anchor="middle" font-family="Liberation Sans" font-size="10" fill="#e8e800" stroke="#e8e800" stroke-width="0.35" >I.&#160;&#160;5</text><line x1="775.5" y1="389" x2="775.5" y2="425.7" stroke="#18e018" stroke-width="1.2" /><ellipse cx="775.5" cy="385.3" rx="5" ry="3.4" fill="#9a9a88" stroke="#e8e800" stroke-width="1.5"/><path d="M773.5 383.7 l4 3.2 M777.5 383.7 l-4 3.2" stroke="#fff" stroke-width="1.1"/><path d="M805.5 353.5 L830.0 353.5 L838.0 338 L864.5 353.5" stroke="#e8787a" stroke-width="1" fill="none" /><path d="M807.5 356 L831.5 356 L839.0 341.5 L861.5 356" stroke="#e8787a" stroke-width="1" fill="none" /><line x1="832.0" y1="351.5" x2="837.5" y2="341" stroke="#18d8e8" stroke-width="2.6" /><line x1="809.5" y1="354.8" x2="828.5" y2="354.8" stroke="#8f9aa4" stroke-width="1.6" /><line x1="804.5" y1="354" x2="804.5" y2="454" stroke="#e8787a" stroke-width="1" /><line x1="806.8" y1="356" x2="806.8" y2="452" stroke="#e8787a" stroke-width="1" /><rect x="832.7" y="416" width="31.299999999999955" height="38.5" fill="none" stroke="#e8787a" stroke-width="1"/><rect x="835.2" y="418.5" width="26.299999999999955" height="33.5" fill="none" stroke="#e8787a" stroke-width="0.8"/><line x1="832.7" y1="417.2" x2="864.0" y2="417.2" stroke="#e8787a" stroke-width="2.4" /><line x1="805.5" y1="452.8" x2="864.5" y2="452.8" stroke="#e8787a" stroke-width="1" /><line x1="805.5" y1="455.3" x2="864.5" y2="455.3" stroke="#e8787a" stroke-width="1" /><path d="M848.5 452 V440 H860.5 V452" stroke="#18d8e8" stroke-width="1.8" fill="none" /><path d="M845.2 418.3 A12 12 0 0 1 832.7 430" stroke="#18d8e8" stroke-width="1.4" fill="none" /><path d="M832.7 439.3 A15 15 0 0 0 818.2 454.5" stroke="#18d8e8" stroke-width="1.4" fill="none" /><rect x="857.9" y="418.3" width="3.2" height="10.2" fill="#e8e800" stroke="#ddd" stroke-width="0.5"/><path d="M856.5 421 h-6" stroke="#f0f0f0" stroke-width="1.4" fill="none" /><rect x="851.2" y="430" width="5.8" height="6" fill="#e8e800" stroke="#fff" stroke-width="0.5"/><path d="M846.5 430.09999999999997 L850.3 433.9 L846.5 437.7 L842.7 433.9z" fill="#c8c8a0" stroke="#e8e800" stroke-width="1.4"/><line x1="846.5" y1="425.7" x2="846.5" y2="430" stroke="#18e018" stroke-width="1.1" /><text transform="translate(832.5 374) scale(0.7 1)" text-anchor="middle" font-family="Liberation Sans" font-size="10" fill="#e8e800" stroke="#e8e800" stroke-width="0.35" >I.&#160;&#160;6</text><line x1="836.0" y1="389" x2="836.0" y2="425.7" stroke="#18e018" stroke-width="1.2" /><ellipse cx="836.0" cy="385.3" rx="5" ry="3.4" fill="#9a9a88" stroke="#e8e800" stroke-width="1.5"/><path d="M834.0 383.7 l4 3.2 M838.0 383.7 l-4 3.2" stroke="#fff" stroke-width="1.1"/><path d="M864.5 353.5 L889.0 353.5 L897.0 338 L923.5 353.5" stroke="#e8787a" stroke-width="1" fill="none" /><path d="M866.5 356 L890.5 356 L898.0 341.5 L920.5 356" stroke="#e8787a" stroke-width="1" fill="none" /><line x1="891.0" y1="351.5" x2="896.5" y2="341" stroke="#18d8e8" stroke-width="2.6" /><line x1="868.5" y1="354.8" x2="887.5" y2="354.8" stroke="#8f9aa4" stroke-width="1.6" /><line x1="863.5" y1="354" x2="863.5" y2="454" stroke="#e8787a" stroke-width="1" /><line x1="865.8" y1="356" x2="865.8" y2="452" stroke="#e8787a" stroke-width="1" /><rect x="863.0" y="416" width="31.700000000000045" height="38.5" fill="none" stroke="#e8787a" stroke-width="1"/><rect x="865.5" y="418.5" width="26.700000000000045" height="33.5" fill="none" stroke="#e8787a" stroke-width="0.8"/><line x1="863.0" y1="417.2" x2="894.7" y2="417.2" stroke="#e8787a" stroke-width="2.4" /><line x1="864.5" y1="452.8" x2="923.5" y2="452.8" stroke="#e8787a" stroke-width="1" /><line x1="864.5" y1="455.3" x2="923.5" y2="455.3" stroke="#e8787a" stroke-width="1" /><path d="M866.5 452 V440 H878.5 V452" stroke="#18d8e8" stroke-width="1.8" fill="none" /><path d="M882.2 418.3 A12 12 0 0 0 894.7 430" stroke="#18d8e8" stroke-width="1.4" fill="none" /><path d="M894.7 439.3 A15 15 0 0 1 909.2 454.5" stroke="#18d8e8" stroke-width="1.4" fill="none" /><rect x="865.9" y="418.3" width="3.2" height="10.2" fill="#e8e800" stroke="#ddd" stroke-width="0.5"/><path d="M870.5 421 h6" stroke="#f0f0f0" stroke-width="1.4" fill="none" /><rect x="868.7" y="430" width="5.8" height="6" fill="#e8e800" stroke="#fff" stroke-width="0.5"/><path d="M880.8 430.09999999999997 L884.5999999999999 433.9 L880.8 437.7 L877.0 433.9z" fill="#c8c8a0" stroke="#e8e800" stroke-width="1.4"/><line x1="880.8" y1="425.7" x2="880.8" y2="430" stroke="#18e018" stroke-width="1.1" /><text transform="translate(891.5 374) scale(0.7 1)" text-anchor="middle" font-family="Liberation Sans" font-size="10" fill="#e8e800" stroke="#e8e800" stroke-width="0.35" >I.&#160;&#160;7</text><line x1="894.0" y1="389" x2="894.0" y2="425.7" stroke="#18e018" stroke-width="1.2" /><ellipse cx="894.0" cy="385.3" rx="5" ry="3.4" fill="#9a9a88" stroke="#e8e800" stroke-width="1.5"/><path d="M892.0 383.7 l4 3.2 M896.0 383.7 l-4 3.2" stroke="#fff" stroke-width="1.1"/><path d="M923.5 353.5 L948.0 353.5 L956.0 338 L982.5 353.5" stroke="#e8787a" stroke-width="1" fill="none" /><path d="M925.5 356 L949.5 356 L957.0 341.5 L979.5 356" stroke="#e8787a" stroke-width="1" fill="none" /><line x1="950.0" y1="351.5" x2="955.5" y2="341" stroke="#18d8e8" stroke-width="2.6" /><line x1="927.5" y1="354.8" x2="946.5" y2="354.8" stroke="#8f9aa4" stroke-width="1.6" /><line x1="922.5" y1="354" x2="922.5" y2="454" stroke="#e8787a" stroke-width="1" /><line x1="924.8" y1="356" x2="924.8" y2="452" stroke="#e8787a" stroke-width="1" /><rect x="950.7" y="416" width="31.299999999999955" height="38.5" fill="none" stroke="#e8787a" stroke-width="1"/><rect x="953.2" y="418.5" width="26.299999999999955" height="33.5" fill="none" stroke="#e8787a" stroke-width="0.8"/><line x1="950.7" y1="417.2" x2="982.0" y2="417.2" stroke="#e8787a" stroke-width="2.4" /><line x1="923.5" y1="452.8" x2="982.5" y2="452.8" stroke="#e8787a" stroke-width="1" /><line x1="923.5" y1="455.3" x2="982.5" y2="455.3" stroke="#e8787a" stroke-width="1" /><path d="M966.5 452 V440 H978.5 V452" stroke="#18d8e8" stroke-width="1.8" fill="none" /><path d="M963.2 418.3 A12 12 0 0 1 950.7 430" stroke="#18d8e8" stroke-width="1.4" fill="none" /><path d="M950.7 439.3 A15 15 0 0 0 936.2 454.5" stroke="#18d8e8" stroke-width="1.4" fill="none" /><rect x="975.9" y="418.3" width="3.2" height="10.2" fill="#e8e800" stroke="#ddd" stroke-width="0.5"/><path d="M974.5 421 h-6" stroke="#f0f0f0" stroke-width="1.4" fill="none" /><rect x="969.2" y="430" width="5.8" height="6" fill="#e8e800" stroke="#fff" stroke-width="0.5"/><path d="M964.5 430.09999999999997 L968.3 433.9 L964.5 437.7 L960.7 433.9z" fill="#c8c8a0" stroke="#e8e800" stroke-width="1.4"/><line x1="964.5" y1="425.7" x2="964.5" y2="430" stroke="#18e018" stroke-width="1.1" /><text transform="translate(950.5 374) scale(0.7 1)" text-anchor="middle" font-family="Liberation Sans" font-size="10" fill="#e8e800" stroke="#e8e800" stroke-width="0.35" >I.&#160;&#160;8</text><line x1="953.5" y1="389" x2="953.5" y2="425.7" stroke="#18e018" stroke-width="1.2" /><ellipse cx="953.5" cy="385.3" rx="5" ry="3.4" fill="#9a9a88" stroke="#e8e800" stroke-width="1.5"/><path d="M951.5 383.7 l4 3.2 M955.5 383.7 l-4 3.2" stroke="#fff" stroke-width="1.1"/><path d="M982.5 353.5 L1007.0 353.5 L1015.0 338 L1041.5 353.5" stroke="#e8787a" stroke-width="1" fill="none" /><path d="M984.5 356 L1008.5 356 L1016.0 341.5 L1038.5 356" stroke="#e8787a" stroke-width="1" fill="none" /><line x1="1009.0" y1="351.5" x2="1014.5" y2="341" stroke="#18d8e8" stroke-width="2.6" /><line x1="986.5" y1="354.8" x2="1005.5" y2="354.8" stroke="#8f9aa4" stroke-width="1.6" /><line x1="981.5" y1="354" x2="981.5" y2="454" stroke="#e8787a" stroke-width="1" /><line x1="983.8" y1="356" x2="983.8" y2="452" stroke="#e8787a" stroke-width="1" /><rect x="1009.7" y="416" width="31.299999999999955" height="38.5" fill="none" stroke="#e8787a" stroke-width="1"/><rect x="1012.2" y="418.5" width="26.299999999999955" height="33.5" fill="none" stroke="#e8787a" stroke-width="0.8"/><line x1="1009.7" y1="417.2" x2="1041.0" y2="417.2" stroke="#e8787a" stroke-width="2.4" /><line x1="982.5" y1="452.8" x2="1041.5" y2="452.8" stroke="#e8787a" stroke-width="1" /><line x1="982.5" y1="455.3" x2="1041.5" y2="455.3" stroke="#e8787a" stroke-width="1" /><path d="M1025.5 452 V440 H1037.5 V452" stroke="#18d8e8" stroke-width="1.8" fill="none" /><path d="M1022.2 418.3 A12 12 0 0 1 1009.7 430" stroke="#18d8e8" stroke-width="1.4" fill="none" /><path d="M1009.7 439.3 A15 15 0 0 0 995.2 454.5" stroke="#18d8e8" stroke-width="1.4" fill="none" /><rect x="1034.9" y="418.3" width="3.2" height="10.2" fill="#e8e800" stroke="#ddd" stroke-width="0.5"/><path d="M1033.5 421 h-6" stroke="#f0f0f0" stroke-width="1.4" fill="none" /><rect x="1028.2" y="430" width="5.8" height="6" fill="#e8e800" stroke="#fff" stroke-width="0.5"/><path d="M1023.5 430.09999999999997 L1027.3 433.9 L1023.5 437.7 L1019.7 433.9z" fill="#c8c8a0" stroke="#e8e800" stroke-width="1.4"/><line x1="1023.5" y1="425.7" x2="1023.5" y2="430" stroke="#18e018" stroke-width="1.1" /><text transform="translate(1009.5 374) scale(0.7 1)" text-anchor="middle" font-family="Liberation Sans" font-size="10" fill="#e8e800" stroke="#e8e800" stroke-width="0.35" >I.&#160;&#160;9</text><line x1="1013.0" y1="389" x2="1013.0" y2="425.7" stroke="#18e018" stroke-width="1.2" /><ellipse cx="1013.0" cy="385.3" rx="5" ry="3.4" fill="#9a9a88" stroke="#e8e800" stroke-width="1.5"/><path d="M1011.0 383.7 l4 3.2 M1015.0 383.7 l-4 3.2" stroke="#fff" stroke-width="1.1"/><path d="M511 726.5 L535.5 726.5 L543.5 742 L570 726.5" stroke="#e8787a" stroke-width="1" fill="none" /><path d="M513 724 L537 724 L544.5 738.5 L567 724" stroke="#e8787a" stroke-width="1" fill="none" /><line x1="537.5" y1="728.5" x2="543" y2="739" stroke="#18d8e8" stroke-width="2.6" /><line x1="515" y1="725.2" x2="534" y2="725.2" stroke="#8f9aa4" stroke-width="1.6" /><line x1="510" y1="726" x2="510" y2="626" stroke="#e8787a" stroke-width="1" /><line x1="512.3" y1="724" x2="512.3" y2="628" stroke="#e8787a" stroke-width="1" /><rect x="509.5" y="625.5" width="31.700000000000045" height="38.5" fill="none" stroke="#e8787a" stroke-width="1"/><rect x="512.0" y="628" width="26.700000000000045" height="33.5" fill="none" stroke="#e8787a" stroke-width="0.8"/><line x1="509.5" y1="662.8" x2="541.2" y2="662.8" stroke="#e8787a" stroke-width="2.4" /><line x1="511" y1="627.2" x2="570" y2="627.2" stroke="#e8787a" stroke-width="1" /><line x1="511" y1="624.7" x2="570" y2="624.7" stroke="#e8787a" stroke-width="1" /><path d="M513.0 628 V640 H525.0 V628" stroke="#18d8e8" stroke-width="1.8" fill="none" /><path d="M528.7 661.7 A12 12 0 0 1 541.2 650" stroke="#18d8e8" stroke-width="1.4" fill="none" /><path d="M541.2 640.7 A15 15 0 0 0 555.7 625.5" stroke="#18d8e8" stroke-width="1.4" fill="none" /><rect x="512.4" y="651.5" width="3.2" height="10.2" fill="#e8e800" stroke="#ddd" stroke-width="0.5"/><path d="M517.0 659 h6" stroke="#f0f0f0" stroke-width="1.4" fill="none" /><rect x="515.2" y="644" width="5.8" height="6" fill="#e8e800" stroke="#fff" stroke-width="0.5"/><path d="M527.3 642.3000000000001 L531.0999999999999 646.1 L527.3 649.9 L523.5 646.1z" fill="#c8c8a0" stroke="#e8e800" stroke-width="1.4"/><line x1="527.3" y1="654.3" x2="527.3" y2="650" stroke="#18e018" stroke-width="1.1" /><text transform="translate(538 711) scale(0.7 1)" text-anchor="middle" font-family="Liberation Sans" font-size="10" fill="#e8e800" stroke="#e8e800" stroke-width="0.35" >I.&#160;&#160;19</text><line x1="535" y1="691" x2="535" y2="654.3" stroke="#18e018" stroke-width="1.2" /><ellipse cx="535" cy="694.7" rx="5" ry="3.4" fill="#9a9a88" stroke="#e8e800" stroke-width="1.5"/><path d="M533 693.1 l4 3.2 M537 693.1 l-4 3.2" stroke="#fff" stroke-width="1.1"/><path d="M570 726.5 L594.5 726.5 L602.5 742 L629 726.5" stroke="#e8787a" stroke-width="1" fill="none" /><path d="M572 724 L596 724 L603.5 738.5 L626 724" stroke="#e8787a" stroke-width="1" fill="none" /><line x1="596.5" y1="728.5" x2="602" y2="739" stroke="#18d8e8" stroke-width="2.6" /><line x1="574" y1="725.2" x2="593" y2="725.2" stroke="#8f9aa4" stroke-width="1.6" /><line x1="569" y1="726" x2="569" y2="626" stroke="#e8787a" stroke-width="1" /><line x1="571.3" y1="724" x2="571.3" y2="628" stroke="#e8787a" stroke-width="1" /><rect x="597.2" y="625.5" width="31.299999999999955" height="38.5" fill="none" stroke="#e8787a" stroke-width="1"/><rect x="599.7" y="628" width="26.299999999999955" height="33.5" fill="none" stroke="#e8787a" stroke-width="0.8"/><line x1="597.2" y1="662.8" x2="628.5" y2="662.8" stroke="#e8787a" stroke-width="2.4" /><line x1="570" y1="627.2" x2="629" y2="627.2" stroke="#e8787a" stroke-width="1" /><line x1="570" y1="624.7" x2="629" y2="624.7" stroke="#e8787a" stroke-width="1" /><path d="M613.0 628 V640 H625.0 V628" stroke="#18d8e8" stroke-width="1.8" fill="none" /><path d="M609.7 661.7 A12 12 0 0 0 597.2 650" stroke="#18d8e8" stroke-width="1.4" fill="none" /><path d="M597.2 640.7 A15 15 0 0 1 582.7 625.5" stroke="#18d8e8" stroke-width="1.4" fill="none" /><rect x="622.4" y="651.5" width="3.2" height="10.2" fill="#e8e800" stroke="#ddd" stroke-width="0.5"/><path d="M621.0 659 h-6" stroke="#f0f0f0" stroke-width="1.4" fill="none" /><rect x="615.7" y="644" width="5.8" height="6" fill="#e8e800" stroke="#fff" stroke-width="0.5"/><path d="M611.0 642.3000000000001 L614.8 646.1 L611.0 649.9 L607.2 646.1z" fill="#c8c8a0" stroke="#e8e800" stroke-width="1.4"/><line x1="611.0" y1="654.3" x2="611.0" y2="650" stroke="#18e018" stroke-width="1.1" /><text transform="translate(597 711) scale(0.7 1)" text-anchor="middle" font-family="Liberation Sans" font-size="10" fill="#e8e800" stroke="#e8e800" stroke-width="0.35" >I.&#160;&#160;18</text><line x1="599.6" y1="691" x2="599.6" y2="654.3" stroke="#18e018" stroke-width="1.2" /><ellipse cx="599.6" cy="694.7" rx="5" ry="3.4" fill="#9a9a88" stroke="#e8e800" stroke-width="1.5"/><path d="M597.6 693.1 l4 3.2 M601.6 693.1 l-4 3.2" stroke="#fff" stroke-width="1.1"/><path d="M628.5 726.5 L653.0 726.5 L661.0 742 L687.5 726.5" stroke="#e8787a" stroke-width="1" fill="none" /><path d="M630.5 724 L654.5 724 L662.0 738.5 L684.5 724" stroke="#e8787a" stroke-width="1" fill="none" /><line x1="655.0" y1="728.5" x2="660.5" y2="739" stroke="#18d8e8" stroke-width="2.6" /><line x1="632.5" y1="725.2" x2="651.5" y2="725.2" stroke="#8f9aa4" stroke-width="1.6" /><line x1="627.5" y1="726" x2="627.5" y2="626" stroke="#e8787a" stroke-width="1" /><line x1="629.8" y1="724" x2="629.8" y2="628" stroke="#e8787a" stroke-width="1" /><rect x="627.0" y="625.5" width="31.700000000000045" height="38.5" fill="none" stroke="#e8787a" stroke-width="1"/><rect x="629.5" y="628" width="26.700000000000045" height="33.5" fill="none" stroke="#e8787a" stroke-width="0.8"/><line x1="627.0" y1="662.8" x2="658.7" y2="662.8" stroke="#e8787a" stroke-width="2.4" /><line x1="628.5" y1="627.2" x2="687.5" y2="627.2" stroke="#e8787a" stroke-width="1" /><line x1="628.5" y1="624.7" x2="687.5" y2="624.7" stroke="#e8787a" stroke-width="1" /><path d="M630.5 628 V640 H642.5 V628" stroke="#18d8e8" stroke-width="1.8" fill="none" /><path d="M646.2 661.7 A12 12 0 0 1 658.7 650" stroke="#18d8e8" stroke-width="1.4" fill="none" /><path d="M658.7 640.7 A15 15 0 0 0 673.2 625.5" stroke="#18d8e8" stroke-width="1.4" fill="none" /><rect x="629.9" y="651.5" width="3.2" height="10.2" fill="#e8e800" stroke="#ddd" stroke-width="0.5"/><path d="M634.5 659 h6" stroke="#f0f0f0" stroke-width="1.4" fill="none" /><rect x="632.7" y="644" width="5.8" height="6" fill="#e8e800" stroke="#fff" stroke-width="0.5"/><path d="M644.8 642.3000000000001 L648.5999999999999 646.1 L644.8 649.9 L641.0 646.1z" fill="#c8c8a0" stroke="#e8e800" stroke-width="1.4"/><line x1="644.8" y1="654.3" x2="644.8" y2="650" stroke="#18e018" stroke-width="1.1" /><text transform="translate(655.5 711) scale(0.7 1)" text-anchor="middle" font-family="Liberation Sans" font-size="10" fill="#e8e800" stroke="#e8e800" stroke-width="0.35" >I.&#160;&#160;17</text><line x1="657.0" y1="691" x2="657.0" y2="654.3" stroke="#18e018" stroke-width="1.2" /><ellipse cx="657.0" cy="694.7" rx="5" ry="3.4" fill="#9a9a88" stroke="#e8e800" stroke-width="1.5"/><path d="M655.0 693.1 l4 3.2 M659.0 693.1 l-4 3.2" stroke="#fff" stroke-width="1.1"/><path d="M687.5 726.5 L712.0 726.5 L720.0 742 L746.5 726.5" stroke="#e8787a" stroke-width="1" fill="none" /><path d="M689.5 724 L713.5 724 L721.0 738.5 L743.5 724" stroke="#e8787a" stroke-width="1" fill="none" /><line x1="714.0" y1="728.5" x2="719.5" y2="739" stroke="#18d8e8" stroke-width="2.6" /><line x1="691.5" y1="725.2" x2="710.5" y2="725.2" stroke="#8f9aa4" stroke-width="1.6" /><line x1="686.5" y1="726" x2="686.5" y2="626" stroke="#e8787a" stroke-width="1" /><line x1="688.8" y1="724" x2="688.8" y2="628" stroke="#e8787a" stroke-width="1" /><rect x="714.7" y="625.5" width="31.299999999999955" height="38.5" fill="none" stroke="#e8787a" stroke-width="1"/><rect x="717.2" y="628" width="26.299999999999955" height="33.5" fill="none" stroke="#e8787a" stroke-width="0.8"/><line x1="714.7" y1="662.8" x2="746.0" y2="662.8" stroke="#e8787a" stroke-width="2.4" /><line x1="687.5" y1="627.2" x2="746.5" y2="627.2" stroke="#e8787a" stroke-width="1" /><line x1="687.5" y1="624.7" x2="746.5" y2="624.7" stroke="#e8787a" stroke-width="1" /><path d="M730.5 628 V640 H742.5 V628" stroke="#18d8e8" stroke-width="1.8" fill="none" /><path d="M727.2 661.7 A12 12 0 0 0 714.7 650" stroke="#18d8e8" stroke-width="1.4" fill="none" /><path d="M714.7 640.7 A15 15 0 0 1 700.2 625.5" stroke="#18d8e8" stroke-width="1.4" fill="none" /><rect x="739.9" y="651.5" width="3.2" height="10.2" fill="#e8e800" stroke="#ddd" stroke-width="0.5"/><path d="M738.5 659 h-6" stroke="#f0f0f0" stroke-width="1.4" fill="none" /><rect x="733.2" y="644" width="5.8" height="6" fill="#e8e800" stroke="#fff" stroke-width="0.5"/><path d="M728.5 642.3000000000001 L732.3 646.1 L728.5 649.9 L724.7 646.1z" fill="#c8c8a0" stroke="#e8e800" stroke-width="1.4"/><line x1="728.5" y1="654.3" x2="728.5" y2="650" stroke="#18e018" stroke-width="1.1" /><text transform="translate(714.5 711) scale(0.7 1)" text-anchor="middle" font-family="Liberation Sans" font-size="10" fill="#e8e800" stroke="#e8e800" stroke-width="0.35" >I.&#160;&#160;16</text><line x1="717.0" y1="691" x2="717.0" y2="654.3" stroke="#18e018" stroke-width="1.2" /><ellipse cx="717.0" cy="694.7" rx="5" ry="3.4" fill="#9a9a88" stroke="#e8e800" stroke-width="1.5"/><path d="M715.0 693.1 l4 3.2 M719.0 693.1 l-4 3.2" stroke="#fff" stroke-width="1.1"/><path d="M746.5 726.5 L771.0 726.5 L779.0 742 L805.5 726.5" stroke="#e8787a" stroke-width="1" fill="none" /><path d="M748.5 724 L772.5 724 L780.0 738.5 L802.5 724" stroke="#e8787a" stroke-width="1" fill="none" /><line x1="773.0" y1="728.5" x2="778.5" y2="739" stroke="#18d8e8" stroke-width="2.6" /><line x1="750.5" y1="725.2" x2="769.5" y2="725.2" stroke="#8f9aa4" stroke-width="1.6" /><line x1="745.5" y1="726" x2="745.5" y2="626" stroke="#e8787a" stroke-width="1" /><line x1="747.8" y1="724" x2="747.8" y2="628" stroke="#e8787a" stroke-width="1" /><rect x="745.0" y="625.5" width="31.700000000000045" height="38.5" fill="none" stroke="#e8787a" stroke-width="1"/><rect x="747.5" y="628" width="26.700000000000045" height="33.5" fill="none" stroke="#e8787a" stroke-width="0.8"/><line x1="745.0" y1="662.8" x2="776.7" y2="662.8" stroke="#e8787a" stroke-width="2.4" /><line x1="746.5" y1="627.2" x2="805.5" y2="627.2" stroke="#e8787a" stroke-width="1" /><line x1="746.5" y1="624.7" x2="805.5" y2="624.7" stroke="#e8787a" stroke-width="1" /><path d="M748.5 628 V640 H760.5 V628" stroke="#18d8e8" stroke-width="1.8" fill="none" /><path d="M764.2 661.7 A12 12 0 0 1 776.7 650" stroke="#18d8e8" stroke-width="1.4" fill="none" /><path d="M776.7 640.7 A15 15 0 0 0 791.2 625.5" stroke="#18d8e8" stroke-width="1.4" fill="none" /><rect x="747.9" y="651.5" width="3.2" height="10.2" fill="#e8e800" stroke="#ddd" stroke-width="0.5"/><path d="M752.5 659 h6" stroke="#f0f0f0" stroke-width="1.4" fill="none" /><rect x="750.7" y="644" width="5.8" height="6" fill="#e8e800" stroke="#fff" stroke-width="0.5"/><path d="M762.8 642.3000000000001 L766.5999999999999 646.1 L762.8 649.9 L759.0 646.1z" fill="#c8c8a0" stroke="#e8e800" stroke-width="1.4"/><line x1="762.8" y1="654.3" x2="762.8" y2="650" stroke="#18e018" stroke-width="1.1" /><text transform="translate(773.5 711) scale(0.7 1)" text-anchor="middle" font-family="Liberation Sans" font-size="10" fill="#e8e800" stroke="#e8e800" stroke-width="0.35" >I.&#160;&#160;15</text><line x1="775.5" y1="691" x2="775.5" y2="654.3" stroke="#18e018" stroke-width="1.2" /><ellipse cx="775.5" cy="694.7" rx="5" ry="3.4" fill="#9a9a88" stroke="#e8e800" stroke-width="1.5"/><path d="M773.5 693.1 l4 3.2 M777.5 693.1 l-4 3.2" stroke="#fff" stroke-width="1.1"/><path d="M805.5 726.5 L830.0 726.5 L838.0 742 L864.5 726.5" stroke="#e8787a" stroke-width="1" fill="none" /><path d="M807.5 724 L831.5 724 L839.0 738.5 L861.5 724" stroke="#e8787a" stroke-width="1" fill="none" /><line x1="832.0" y1="728.5" x2="837.5" y2="739" stroke="#18d8e8" stroke-width="2.6" /><line x1="809.5" y1="725.2" x2="828.5" y2="725.2" stroke="#8f9aa4" stroke-width="1.6" /><line x1="804.5" y1="726" x2="804.5" y2="626" stroke="#e8787a" stroke-width="1" /><line x1="806.8" y1="724" x2="806.8" y2="628" stroke="#e8787a" stroke-width="1" /><rect x="832.7" y="625.5" width="31.299999999999955" height="38.5" fill="none" stroke="#e8787a" stroke-width="1"/><rect x="835.2" y="628" width="26.299999999999955" height="33.5" fill="none" stroke="#e8787a" stroke-width="0.8"/><line x1="832.7" y1="662.8" x2="864.0" y2="662.8" stroke="#e8787a" stroke-width="2.4" /><line x1="805.5" y1="627.2" x2="864.5" y2="627.2" stroke="#e8787a" stroke-width="1" /><line x1="805.5" y1="624.7" x2="864.5" y2="624.7" stroke="#e8787a" stroke-width="1" /><path d="M848.5 628 V640 H860.5 V628" stroke="#18d8e8" stroke-width="1.8" fill="none" /><path d="M845.2 661.7 A12 12 0 0 0 832.7 650" stroke="#18d8e8" stroke-width="1.4" fill="none" /><path d="M832.7 640.7 A15 15 0 0 1 818.2 625.5" stroke="#18d8e8" stroke-width="1.4" fill="none" /><rect x="857.9" y="651.5" width="3.2" height="10.2" fill="#e8e800" stroke="#ddd" stroke-width="0.5"/><path d="M856.5 659 h-6" stroke="#f0f0f0" stroke-width="1.4" fill="none" /><rect x="851.2" y="644" width="5.8" height="6" fill="#e8e800" stroke="#fff" stroke-width="0.5"/><path d="M846.5 642.3000000000001 L850.3 646.1 L846.5 649.9 L842.7 646.1z" fill="#c8c8a0" stroke="#e8e800" stroke-width="1.4"/><line x1="846.5" y1="654.3" x2="846.5" y2="650" stroke="#18e018" stroke-width="1.1" /><text transform="translate(832.5 711) scale(0.7 1)" text-anchor="middle" font-family="Liberation Sans" font-size="10" fill="#e8e800" stroke="#e8e800" stroke-width="0.35" >I.&#160;&#160;14</text><line x1="836.0" y1="691" x2="836.0" y2="654.3" stroke="#18e018" stroke-width="1.2" /><ellipse cx="836.0" cy="694.7" rx="5" ry="3.4" fill="#9a9a88" stroke="#e8e800" stroke-width="1.5"/><path d="M834.0 693.1 l4 3.2 M838.0 693.1 l-4 3.2" stroke="#fff" stroke-width="1.1"/><path d="M923.5 726.5 L948.0 726.5 L956.0 742 L982.5 726.5" stroke="#e8787a" stroke-width="1" fill="none" /><path d="M925.5 724 L949.5 724 L957.0 738.5 L979.5 724" stroke="#e8787a" stroke-width="1" fill="none" /><line x1="950.0" y1="728.5" x2="955.5" y2="739" stroke="#18d8e8" stroke-width="2.6" /><line x1="927.5" y1="725.2" x2="946.5" y2="725.2" stroke="#8f9aa4" stroke-width="1.6" /><line x1="922.5" y1="726" x2="922.5" y2="626" stroke="#e8787a" stroke-width="1" /><line x1="924.8" y1="724" x2="924.8" y2="628" stroke="#e8787a" stroke-width="1" /><rect x="950.7" y="625.5" width="31.299999999999955" height="38.5" fill="none" stroke="#e8787a" stroke-width="1"/><rect x="953.2" y="628" width="26.299999999999955" height="33.5" fill="none" stroke="#e8787a" stroke-width="0.8"/><line x1="950.7" y1="662.8" x2="982.0" y2="662.8" stroke="#e8787a" stroke-width="2.4" /><line x1="923.5" y1="627.2" x2="982.5" y2="627.2" stroke="#e8787a" stroke-width="1" /><line x1="923.5" y1="624.7" x2="982.5" y2="624.7" stroke="#e8787a" stroke-width="1" /><path d="M966.5 628 V640 H978.5 V628" stroke="#18d8e8" stroke-width="1.8" fill="none" /><path d="M963.2 661.7 A12 12 0 0 0 950.7 650" stroke="#18d8e8" stroke-width="1.4" fill="none" /><path d="M950.7 640.7 A15 15 0 0 1 936.2 625.5" stroke="#18d8e8" stroke-width="1.4" fill="none" /><rect x="975.9" y="651.5" width="3.2" height="10.2" fill="#e8e800" stroke="#ddd" stroke-width="0.5"/><path d="M974.5 659 h-6" stroke="#f0f0f0" stroke-width="1.4" fill="none" /><rect x="969.2" y="644" width="5.8" height="6" fill="#e8e800" stroke="#fff" stroke-width="0.5"/><path d="M964.5 642.3000000000001 L968.3 646.1 L964.5 649.9 L960.7 646.1z" fill="#c8c8a0" stroke="#e8e800" stroke-width="1.4"/><line x1="964.5" y1="654.3" x2="964.5" y2="650" stroke="#18e018" stroke-width="1.1" /><text transform="translate(950.5 711) scale(0.7 1)" text-anchor="middle" font-family="Liberation Sans" font-size="10" fill="#e8e800" stroke="#e8e800" stroke-width="0.35" >I.&#160;&#160;13</text><line x1="953.5" y1="691" x2="953.5" y2="654.3" stroke="#18e018" stroke-width="1.2" /><ellipse cx="953.5" cy="694.7" rx="5" ry="3.4" fill="#9a9a88" stroke="#e8e800" stroke-width="1.5"/><path d="M951.5 693.1 l4 3.2 M955.5 693.1 l-4 3.2" stroke="#fff" stroke-width="1.1"/><path d="M982.5 726.5 L1007.0 726.5 L1015.0 742 L1041.5 726.5" stroke="#e8787a" stroke-width="1" fill="none" /><path d="M984.5 724 L1008.5 724 L1016.0 738.5 L1038.5 724" stroke="#e8787a" stroke-width="1" fill="none" /><line x1="1009.0" y1="728.5" x2="1014.5" y2="739" stroke="#18d8e8" stroke-width="2.6" /><line x1="986.5" y1="725.2" x2="1005.5" y2="725.2" stroke="#8f9aa4" stroke-width="1.6" /><line x1="981.5" y1="726" x2="981.5" y2="626" stroke="#e8787a" stroke-width="1" /><line x1="983.8" y1="724" x2="983.8" y2="628" stroke="#e8787a" stroke-width="1" /><rect x="1009.7" y="625.5" width="31.299999999999955" height="38.5" fill="none" stroke="#e8787a" stroke-width="1"/><rect x="1012.2" y="628" width="26.299999999999955" height="33.5" fill="none" stroke="#e8787a" stroke-width="0.8"/><line x1="1009.7" y1="662.8" x2="1041.0" y2="662.8" stroke="#e8787a" stroke-width="2.4" /><line x1="982.5" y1="627.2" x2="1041.5" y2="627.2" stroke="#e8787a" stroke-width="1" /><line x1="982.5" y1="624.7" x2="1041.5" y2="624.7" stroke="#e8787a" stroke-width="1" /><path d="M1025.5 628 V640 H1037.5 V628" stroke="#18d8e8" stroke-width="1.8" fill="none" /><path d="M1022.2 661.7 A12 12 0 0 0 1009.7 650" stroke="#18d8e8" stroke-width="1.4" fill="none" /><path d="M1009.7 640.7 A15 15 0 0 1 995.2 625.5" stroke="#18d8e8" stroke-width="1.4" fill="none" /><rect x="1034.9" y="651.5" width="3.2" height="10.2" fill="#e8e800" stroke="#ddd" stroke-width="0.5"/><path d="M1033.5 659 h-6" stroke="#f0f0f0" stroke-width="1.4" fill="none" /><rect x="1028.2" y="644" width="5.8" height="6" fill="#e8e800" stroke="#fff" stroke-width="0.5"/><path d="M1023.5 642.3000000000001 L1027.3 646.1 L1023.5 649.9 L1019.7 646.1z" fill="#c8c8a0" stroke="#e8e800" stroke-width="1.4"/><line x1="1023.5" y1="654.3" x2="1023.5" y2="650" stroke="#18e018" stroke-width="1.1" /><text transform="translate(1009.5 711) scale(0.7 1)" text-anchor="middle" font-family="Liberation Sans" font-size="10" fill="#e8e800" stroke="#e8e800" stroke-width="0.35" >I.&#160;&#160;12</text><line x1="1013.0" y1="691" x2="1013.0" y2="654.3" stroke="#18e018" stroke-width="1.2" /><ellipse cx="1013.0" cy="694.7" rx="5" ry="3.4" fill="#9a9a88" stroke="#e8e800" stroke-width="1.5"/><path d="M1011.0 693.1 l4 3.2 M1015.0 693.1 l-4 3.2" stroke="#fff" stroke-width="1.1"/><path d="M559.5 382.5 q4 0 4 3 q0 3 -4 3 M563.5 385.5 h3" stroke="#e8e800" stroke-width="1.7" fill="none" /><path d="M559.5 400 q4 0 4 3 q0 3 -4 3 M563.5 403 h3" stroke="#e8e800" stroke-width="1.7" fill="none" /><line x1="565.8" y1="385.5" x2="565.8" y2="411.5" stroke="#18e018" stroke-width="1.1" /><path d="M565.8 394.3 H553.5 V457.4" stroke="#18e018" stroke-width="1.1" fill="none" /><circle cx="566.5" cy="411.5" r="2.2" fill="none" stroke="#e8e800" stroke-width="1.2"/><path d="M563 414 l-4.5 4.5" stroke="#18e018" stroke-width="1.8" fill="none" /><circle cx="558" cy="425.7" r="3.6" fill="#c8c8b0" stroke="#e8e800" stroke-width="1.5"/><path d="M556 423.7 l4 4 M560 423.7 l-4 4" stroke="#fff" stroke-width="1"/><path d="M553.5 421 a4.6 4.6 0 0 0 0 9.2" stroke="#18e018" stroke-width="1.1" fill="none" /><path d="M580.5 382.5 q-4 0 -4 3 q0 3 4 3 M576.5 385.5 h-3" stroke="#e8e800" stroke-width="1.7" fill="none" /><path d="M580.5 400 q-4 0 -4 3 q0 3 4 3 M576.5 403 h-3" stroke="#e8e800" stroke-width="1.7" fill="none" /><line x1="574.2" y1="385.5" x2="574.2" y2="411.5" stroke="#18e018" stroke-width="1.1" /><path d="M574.2 394.3 H586.5 V457.4" stroke="#18e018" stroke-width="1.1" fill="none" /><circle cx="573.5" cy="411.5" r="2.2" fill="none" stroke="#e8e800" stroke-width="1.2"/><path d="M577 414 l4.5 4.5" stroke="#18e018" stroke-width="1.8" fill="none" /><circle cx="582" cy="425.7" r="3.6" fill="#c8c8b0" stroke="#e8e800" stroke-width="1.5"/><path d="M580 423.7 l4 4 M584 423.7 l-4 4" stroke="#fff" stroke-width="1"/><path d="M586.5 421 a4.6 4.6 0 0 1 0 9.2" stroke="#18e018" stroke-width="1.1" fill="none" /><line x1="553.5" y1="457.4" x2="597" y2="457.4" stroke="#18e018" stroke-width="1.1" /><path d="M559.5 691.5 q4 0 4 3 q0 3 -4 3 M563.5 694.5 h3" stroke="#e8e800" stroke-width="1.7" fill="none" /><path d="M559.5 674 q4 0 4 3 q0 3 -4 3 M563.5 677 h3" stroke="#e8e800" stroke-width="1.7" fill="none" /><line x1="565.8" y1="694.5" x2="565.8" y2="668.5" stroke="#18e018" stroke-width="1.1" /><path d="M565.8 685.7 H553.5 V622.6" stroke="#18e018" stroke-width="1.1" fill="none" /><circle cx="566.5" cy="668.5" r="2.2" fill="none" stroke="#e8e800" stroke-width="1.2"/><path d="M563 666 l-4.5 -4.5" stroke="#18e018" stroke-width="1.8" fill="none" /><circle cx="558" cy="654.3" r="3.6" fill="#c8c8b0" stroke="#e8e800" stroke-width="1.5"/><path d="M556 652.3 l4 4 M560 652.3 l-4 4" stroke="#fff" stroke-width="1"/><path d="M553.5 659 a4.6 4.6 0 0 0 0 -9.2" stroke="#18e018" stroke-width="1.1" fill="none" /><path d="M580.5 691.5 q-4 0 -4 3 q0 3 4 3 M576.5 694.5 h-3" stroke="#e8e800" stroke-width="1.7" fill="none" /><path d="M580.5 674 q-4 0 -4 3 q0 3 4 3 M576.5 677 h-3" stroke="#e8e800" stroke-width="1.7" fill="none" /><line x1="574.2" y1="694.5" x2="574.2" y2="668.5" stroke="#18e018" stroke-width="1.1" /><path d="M574.2 685.7 H586.5 V622.6" stroke="#18e018" stroke-width="1.1" fill="none" /><circle cx="573.5" cy="668.5" r="2.2" fill="none" stroke="#e8e800" stroke-width="1.2"/><path d="M577 666 l4.5 -4.5" stroke="#18e018" stroke-width="1.8" fill="none" /><circle cx="582" cy="654.3" r="3.6" fill="#c8c8b0" stroke="#e8e800" stroke-width="1.5"/><path d="M580 652.3 l4 4 M584 652.3 l-4 4" stroke="#fff" stroke-width="1"/><path d="M586.5 659 a4.6 4.6 0 0 1 0 -9.2" stroke="#18e018" stroke-width="1.1" fill="none" /><line x1="553.5" y1="622.6" x2="597" y2="622.6" stroke="#18e018" stroke-width="1.1" /><path d="M677.0 382.5 q4 0 4 3 q0 3 -4 3 M681.0 385.5 h3" stroke="#e8e800" stroke-width="1.7" fill="none" /><path d="M677.0 400 q4 0 4 3 q0 3 -4 3 M681.0 403 h3" stroke="#e8e800" stroke-width="1.7" fill="none" /><line x1="683.3" y1="385.5" x2="683.3" y2="411.5" stroke="#18e018" stroke-width="1.1" /><path d="M683.3 394.3 H671.0 V457.4" stroke="#18e018" stroke-width="1.1" fill="none" /><circle cx="684.0" cy="411.5" r="2.2" fill="none" stroke="#e8e800" stroke-width="1.2"/><path d="M680.5 414 l-4.5 4.5" stroke="#18e018" stroke-width="1.8" fill="none" /><circle cx="675.5" cy="425.7" r="3.6" fill="#c8c8b0" stroke="#e8e800" stroke-width="1.5"/><path d="M673.5 423.7 l4 4 M677.5 423.7 l-4 4" stroke="#fff" stroke-width="1"/><path d="M671.0 421 a4.6 4.6 0 0 0 0 9.2" stroke="#18e018" stroke-width="1.1" fill="none" /><path d="M698.0 382.5 q-4 0 -4 3 q0 3 4 3 M694.0 385.5 h-3" stroke="#e8e800" stroke-width="1.7" fill="none" /><path d="M698.0 400 q-4 0 -4 3 q0 3 4 3 M694.0 403 h-3" stroke="#e8e800" stroke-width="1.7" fill="none" /><line x1="691.7" y1="385.5" x2="691.7" y2="411.5" stroke="#18e018" stroke-width="1.1" /><path d="M691.7 394.3 H704.0 V457.4" stroke="#18e018" stroke-width="1.1" fill="none" /><circle cx="691.0" cy="411.5" r="2.2" fill="none" stroke="#e8e800" stroke-width="1.2"/><path d="M694.5 414 l4.5 4.5" stroke="#18e018" stroke-width="1.8" fill="none" /><circle cx="699.5" cy="425.7" r="3.6" fill="#c8c8b0" stroke="#e8e800" stroke-width="1.5"/><path d="M697.5 423.7 l4 4 M701.5 423.7 l-4 4" stroke="#fff" stroke-width="1"/><path d="M704.0 421 a4.6 4.6 0 0 1 0 9.2" stroke="#18e018" stroke-width="1.1" fill="none" /><line x1="671.0" y1="457.4" x2="714.5" y2="457.4" stroke="#18e018" stroke-width="1.1" /><path d="M677.0 691.5 q4 0 4 3 q0 3 -4 3 M681.0 694.5 h3" stroke="#e8e800" stroke-width="1.7" fill="none" /><path d="M677.0 674 q4 0 4 3 q0 3 -4 3 M681.0 677 h3" stroke="#e8e800" stroke-width="1.7" fill="none" /><line x1="683.3" y1="694.5" x2="683.3" y2="668.5" stroke="#18e018" stroke-width="1.1" /><path d="M683.3 685.7 H671.0 V622.6" stroke="#18e018" stroke-width="1.1" fill="none" /><circle cx="684.0" cy="668.5" r="2.2" fill="none" stroke="#e8e800" stroke-width="1.2"/><path d="M680.5 666 l-4.5 -4.5" stroke="#18e018" stroke-width="1.8" fill="none" /><circle cx="675.5" cy="654.3" r="3.6" fill="#c8c8b0" stroke="#e8e800" stroke-width="1.5"/><path d="M673.5 652.3 l4 4 M677.5 652.3 l-4 4" stroke="#fff" stroke-width="1"/><path d="M671.0 659 a4.6 4.6 0 0 0 0 -9.2" stroke="#18e018" stroke-width="1.1" fill="none" /><path d="M698.0 691.5 q-4 0 -4 3 q0 3 4 3 M694.0 694.5 h-3" stroke="#e8e800" stroke-width="1.7" fill="none" /><path d="M698.0 674 q-4 0 -4 3 q0 3 4 3 M694.0 677 h-3" stroke="#e8e800" stroke-width="1.7" fill="none" /><line x1="691.7" y1="694.5" x2="691.7" y2="668.5" stroke="#18e018" stroke-width="1.1" /><path d="M691.7 685.7 H704.0 V622.6" stroke="#18e018" stroke-width="1.1" fill="none" /><circle cx="691.0" cy="668.5" r="2.2" fill="none" stroke="#e8e800" stroke-width="1.2"/><path d="M694.5 666 l4.5 -4.5" stroke="#18e018" stroke-width="1.8" fill="none" /><circle cx="699.5" cy="654.3" r="3.6" fill="#c8c8b0" stroke="#e8e800" stroke-width="1.5"/><path d="M697.5 652.3 l4 4 M701.5 652.3 l-4 4" stroke="#fff" stroke-width="1"/><path d="M704.0 659 a4.6 4.6 0 0 1 0 -9.2" stroke="#18e018" stroke-width="1.1" fill="none" /><line x1="671.0" y1="622.6" x2="714.5" y2="622.6" stroke="#18e018" stroke-width="1.1" /><path d="M795.0 382.5 q4 0 4 3 q0 3 -4 3 M799.0 385.5 h3" stroke="#e8e800" stroke-width="1.7" fill="none" /><path d="M795.0 400 q4 0 4 3 q0 3 -4 3 M799.0 403 h3" stroke="#e8e800" stroke-width="1.7" fill="none" /><line x1="801.3" y1="385.5" x2="801.3" y2="411.5" stroke="#18e018" stroke-width="1.1" /><path d="M801.3 394.3 H789.0 V457.4" stroke="#18e018" stroke-width="1.1" fill="none" /><circle cx="802.0" cy="411.5" r="2.2" fill="none" stroke="#e8e800" stroke-width="1.2"/><path d="M798.5 414 l-4.5 4.5" stroke="#18e018" stroke-width="1.8" fill="none" /><circle cx="793.5" cy="425.7" r="3.6" fill="#c8c8b0" stroke="#e8e800" stroke-width="1.5"/><path d="M791.5 423.7 l4 4 M795.5 423.7 l-4 4" stroke="#fff" stroke-width="1"/><path d="M789.0 421 a4.6 4.6 0 0 0 0 9.2" stroke="#18e018" stroke-width="1.1" fill="none" /><path d="M816.0 382.5 q-4 0 -4 3 q0 3 4 3 M812.0 385.5 h-3" stroke="#e8e800" stroke-width="1.7" fill="none" /><path d="M816.0 400 q-4 0 -4 3 q0 3 4 3 M812.0 403 h-3" stroke="#e8e800" stroke-width="1.7" fill="none" /><line x1="809.7" y1="385.5" x2="809.7" y2="411.5" stroke="#18e018" stroke-width="1.1" /><path d="M809.7 394.3 H822.0 V457.4" stroke="#18e018" stroke-width="1.1" fill="none" /><circle cx="809.0" cy="411.5" r="2.2" fill="none" stroke="#e8e800" stroke-width="1.2"/><path d="M812.5 414 l4.5 4.5" stroke="#18e018" stroke-width="1.8" fill="none" /><circle cx="817.5" cy="425.7" r="3.6" fill="#c8c8b0" stroke="#e8e800" stroke-width="1.5"/><path d="M815.5 423.7 l4 4 M819.5 423.7 l-4 4" stroke="#fff" stroke-width="1"/><path d="M822.0 421 a4.6 4.6 0 0 1 0 9.2" stroke="#18e018" stroke-width="1.1" fill="none" /><line x1="789.0" y1="457.4" x2="832.5" y2="457.4" stroke="#18e018" stroke-width="1.1" /><path d="M795.0 691.5 q4 0 4 3 q0 3 -4 3 M799.0 694.5 h3" stroke="#e8e800" stroke-width="1.7" fill="none" /><path d="M795.0 674 q4 0 4 3 q0 3 -4 3 M799.0 677 h3" stroke="#e8e800" stroke-width="1.7" fill="none" /><line x1="801.3" y1="694.5" x2="801.3" y2="668.5" stroke="#18e018" stroke-width="1.1" /><path d="M801.3 685.7 H789.0 V622.6" stroke="#18e018" stroke-width="1.1" fill="none" /><circle cx="802.0" cy="668.5" r="2.2" fill="none" stroke="#e8e800" stroke-width="1.2"/><path d="M798.5 666 l-4.5 -4.5" stroke="#18e018" stroke-width="1.8" fill="none" /><circle cx="793.5" cy="654.3" r="3.6" fill="#c8c8b0" stroke="#e8e800" stroke-width="1.5"/><path d="M791.5 652.3 l4 4 M795.5 652.3 l-4 4" stroke="#fff" stroke-width="1"/><path d="M789.0 659 a4.6 4.6 0 0 0 0 -9.2" stroke="#18e018" stroke-width="1.1" fill="none" /><path d="M816.0 691.5 q-4 0 -4 3 q0 3 4 3 M812.0 694.5 h-3" stroke="#e8e800" stroke-width="1.7" fill="none" /><path d="M816.0 674 q-4 0 -4 3 q0 3 4 3 M812.0 677 h-3" stroke="#e8e800" stroke-width="1.7" fill="none" /><line x1="809.7" y1="694.5" x2="809.7" y2="668.5" stroke="#18e018" stroke-width="1.1" /><path d="M809.7 685.7 H822.0 V622.6" stroke="#18e018" stroke-width="1.1" fill="none" /><circle cx="809.0" cy="668.5" r="2.2" fill="none" stroke="#e8e800" stroke-width="1.2"/><path d="M812.5 666 l4.5 -4.5" stroke="#18e018" stroke-width="1.8" fill="none" /><circle cx="817.5" cy="654.3" r="3.6" fill="#c8c8b0" stroke="#e8e800" stroke-width="1.5"/><path d="M815.5 652.3 l4 4 M819.5 652.3 l-4 4" stroke="#fff" stroke-width="1"/><path d="M822.0 659 a4.6 4.6 0 0 1 0 -9.2" stroke="#18e018" stroke-width="1.1" fill="none" /><line x1="789.0" y1="622.6" x2="832.5" y2="622.6" stroke="#18e018" stroke-width="1.1" /><path d="M913.0 382.5 q4 0 4 3 q0 3 -4 3 M917.0 385.5 h3" stroke="#e8e800" stroke-width="1.7" fill="none" /><path d="M913.0 400 q4 0 4 3 q0 3 -4 3 M917.0 403 h3" stroke="#e8e800" stroke-width="1.7" fill="none" /><line x1="919.3" y1="385.5" x2="919.3" y2="411.5" stroke="#18e018" stroke-width="1.1" /><path d="M919.3 394.3 H907.0 V457.4" stroke="#18e018" stroke-width="1.1" fill="none" /><circle cx="920.0" cy="411.5" r="2.2" fill="none" stroke="#e8e800" stroke-width="1.2"/><path d="M916.5 414 l-4.5 4.5" stroke="#18e018" stroke-width="1.8" fill="none" /><circle cx="911.5" cy="425.7" r="3.6" fill="#c8c8b0" stroke="#e8e800" stroke-width="1.5"/><path d="M909.5 423.7 l4 4 M913.5 423.7 l-4 4" stroke="#fff" stroke-width="1"/><path d="M907.0 421 a4.6 4.6 0 0 0 0 9.2" stroke="#18e018" stroke-width="1.1" fill="none" /><path d="M934.0 382.5 q-4 0 -4 3 q0 3 4 3 M930.0 385.5 h-3" stroke="#e8e800" stroke-width="1.7" fill="none" /><path d="M934.0 400 q-4 0 -4 3 q0 3 4 3 M930.0 403 h-3" stroke="#e8e800" stroke-width="1.7" fill="none" /><line x1="927.7" y1="385.5" x2="927.7" y2="411.5" stroke="#18e018" stroke-width="1.1" /><path d="M927.7 394.3 H940.0 V457.4" stroke="#18e018" stroke-width="1.1" fill="none" /><circle cx="927.0" cy="411.5" r="2.2" fill="none" stroke="#e8e800" stroke-width="1.2"/><path d="M930.5 414 l4.5 4.5" stroke="#18e018" stroke-width="1.8" fill="none" /><circle cx="935.5" cy="425.7" r="3.6" fill="#c8c8b0" stroke="#e8e800" stroke-width="1.5"/><path d="M933.5 423.7 l4 4 M937.5 423.7 l-4 4" stroke="#fff" stroke-width="1"/><path d="M940.0 421 a4.6 4.6 0 0 1 0 9.2" stroke="#18e018" stroke-width="1.1" fill="none" /><line x1="907.0" y1="457.4" x2="950.5" y2="457.4" stroke="#18e018" stroke-width="1.1" /><path d="M934.0 691.5 q-4 0 -4 3 q0 3 4 3 M930.0 694.5 h-3" stroke="#e8e800" stroke-width="1.7" fill="none" /><path d="M934.0 674 q-4 0 -4 3 q0 3 4 3 M930.0 677 h-3" stroke="#e8e800" stroke-width="1.7" fill="none" /><line x1="927.7" y1="694.5" x2="927.7" y2="668.5" stroke="#18e018" stroke-width="1.1" /><path d="M927.7 685.7 H940.0 V622.6" stroke="#18e018" stroke-width="1.1" fill="none" /><circle cx="927.0" cy="668.5" r="2.2" fill="none" stroke="#e8e800" stroke-width="1.2"/><path d="M930.5 666 l4.5 -4.5" stroke="#18e018" stroke-width="1.8" fill="none" /><circle cx="935.5" cy="654.3" r="3.6" fill="#c8c8b0" stroke="#e8e800" stroke-width="1.5"/><path d="M933.5 652.3 l4 4 M937.5 652.3 l-4 4" stroke="#fff" stroke-width="1"/><path d="M940.0 659 a4.6 4.6 0 0 1 0 -9.2" stroke="#18e018" stroke-width="1.1" fill="none" /><path d="M993.0 382.5 q-4 0 -4 3 q0 3 4 3 M989.0 385.5 h-3" stroke="#e8e800" stroke-width="1.7" fill="none" /><path d="M993.0 400 q-4 0 -4 3 q0 3 4 3 M989.0 403 h-3" stroke="#e8e800" stroke-width="1.7" fill="none" /><line x1="986.7" y1="385.5" x2="986.7" y2="411.5" stroke="#18e018" stroke-width="1.1" /><path d="M986.7 394.3 H999.0 V457.4" stroke="#18e018" stroke-width="1.1" fill="none" /><circle cx="986.0" cy="411.5" r="2.2" fill="none" stroke="#e8e800" stroke-width="1.2"/><path d="M989.5 414 l4.5 4.5" stroke="#18e018" stroke-width="1.8" fill="none" /><circle cx="994.5" cy="425.7" r="3.6" fill="#c8c8b0" stroke="#e8e800" stroke-width="1.5"/><path d="M992.5 423.7 l4 4 M996.5 423.7 l-4 4" stroke="#fff" stroke-width="1"/><path d="M999.0 421 a4.6 4.6 0 0 1 0 9.2" stroke="#18e018" stroke-width="1.1" fill="none" /><path d="M993.0 691.5 q-4 0 -4 3 q0 3 4 3 M989.0 694.5 h-3" stroke="#e8e800" stroke-width="1.7" fill="none" /><path d="M993.0 674 q-4 0 -4 3 q0 3 4 3 M989.0 677 h-3" stroke="#e8e800" stroke-width="1.7" fill="none" /><line x1="986.7" y1="694.5" x2="986.7" y2="668.5" stroke="#18e018" stroke-width="1.1" /><path d="M986.7 685.7 H999.0 V622.6" stroke="#18e018" stroke-width="1.1" fill="none" /><circle cx="986.0" cy="668.5" r="2.2" fill="none" stroke="#e8e800" stroke-width="1.2"/><path d="M989.5 666 l4.5 -4.5" stroke="#18e018" stroke-width="1.8" fill="none" /><circle cx="994.5" cy="654.3" r="3.6" fill="#c8c8b0" stroke="#e8e800" stroke-width="1.5"/><path d="M992.5 652.3 l4 4 M996.5 652.3 l-4 4" stroke="#fff" stroke-width="1"/><path d="M999.0 659 a4.6 4.6 0 0 1 0 -9.2" stroke="#18e018" stroke-width="1.1" fill="none" /><line x1="1040.2" y1="354" x2="1040.2" y2="726" stroke="#e8787a" stroke-width="1" /><line x1="1042.6" y1="354" x2="1042.6" y2="726" stroke="#e8787a" stroke-width="1" /><line x1="501.5" y1="354" x2="501.5" y2="418" stroke="#e8787a" stroke-width="1" /><line x1="503.8" y1="356" x2="503.8" y2="416" stroke="#e8787a" stroke-width="1" /><line x1="501.5" y1="353.5" x2="511" y2="353.5" stroke="#e8787a" stroke-width="1" /><line x1="501.5" y1="417.5" x2="511" y2="417.5" stroke="#e8787a" stroke-width="2.4" /><line x1="501.5" y1="662" x2="501.5" y2="726" stroke="#e8787a" stroke-width="1" /><line x1="503.8" y1="664" x2="503.8" y2="724" stroke="#e8787a" stroke-width="1" /><line x1="501.5" y1="726.5" x2="511" y2="726.5" stroke="#e8787a" stroke-width="1" /><line x1="501.5" y1="662.5" x2="511" y2="662.5" stroke="#e8787a" stroke-width="2.4" /><line x1="513.4" y1="411.5" x2="625.8" y2="411.5" stroke="#18e018" stroke-width="1.1" /><line x1="631" y1="411.5" x2="743" y2="411.5" stroke="#18e018" stroke-width="1.1" /><line x1="749.5" y1="411.5" x2="861" y2="411.5" stroke="#18e018" stroke-width="1.1" /><line x1="867.5" y1="411.5" x2="979" y2="411.5" stroke="#18e018" stroke-width="1.1" /><line x1="986" y1="411.5" x2="1038" y2="411.5" stroke="#18e018" stroke-width="1.1" /><line x1="513.4" y1="668.5" x2="625.8" y2="668.5" stroke="#18e018" stroke-width="1.1" /><line x1="631" y1="668.5" x2="743" y2="668.5" stroke="#18e018" stroke-width="1.1" /><line x1="749.5" y1="668.5" x2="861" y2="668.5" stroke="#18e018" stroke-width="1.1" /><line x1="867.5" y1="668.5" x2="979" y2="668.5" stroke="#18e018" stroke-width="1.1" /><line x1="986" y1="668.5" x2="1038" y2="668.5" stroke="#18e018" stroke-width="1.1" /><line x1="516" y1="425.7" x2="1038" y2="425.7" stroke="#18e018" stroke-width="1.1" /><line x1="516" y1="654.3" x2="1038" y2="654.3" stroke="#18e018" stroke-width="1.1" /><line x1="513.4" y1="411.5" x2="513.4" y2="420" stroke="#18e018" stroke-width="1.1" /><line x1="513.4" y1="668.5" x2="513.4" y2="660" stroke="#18e018" stroke-width="1.1" /><line x1="625.8" y1="411.5" x2="625.8" y2="420" stroke="#18e018" stroke-width="1.1" /><line x1="625.8" y1="668.5" x2="625.8" y2="660" stroke="#18e018" stroke-width="1.1" /><line x1="631" y1="411.5" x2="631" y2="420" stroke="#18e018" stroke-width="1.1" /><line x1="631" y1="668.5" x2="631" y2="660" stroke="#18e018" stroke-width="1.1" /><line x1="743" y1="411.5" x2="743" y2="420" stroke="#18e018" stroke-width="1.1" /><line x1="743" y1="668.5" x2="743" y2="660" stroke="#18e018" stroke-width="1.1" /><line x1="749.5" y1="411.5" x2="749.5" y2="420" stroke="#18e018" stroke-width="1.1" /><line x1="749.5" y1="668.5" x2="749.5" y2="660" stroke="#18e018" stroke-width="1.1" /><line x1="861" y1="411.5" x2="861" y2="420" stroke="#18e018" stroke-width="1.1" /><line x1="861" y1="668.5" x2="861" y2="660" stroke="#18e018" stroke-width="1.1" /><line x1="867.5" y1="411.5" x2="867.5" y2="420" stroke="#18e018" stroke-width="1.1" /><line x1="867.5" y1="668.5" x2="867.5" y2="660" stroke="#18e018" stroke-width="1.1" /><line x1="979" y1="411.5" x2="979" y2="420" stroke="#18e018" stroke-width="1.1" /><line x1="979" y1="668.5" x2="979" y2="660" stroke="#18e018" stroke-width="1.1" /><line x1="1038" y1="411.5" x2="1038" y2="420" stroke="#18e018" stroke-width="1.1" /><line x1="1038" y1="668.5" x2="1038" y2="660" stroke="#18e018" stroke-width="1.1" /><line x1="557" y1="474.5" x2="829" y2="474.5" stroke="#18e018" stroke-width="1.2" /><line x1="557" y1="605.5" x2="829" y2="605.5" stroke="#18e018" stroke-width="1.2" /><line x1="616" y1="596.5" x2="920" y2="596.5" stroke="#18e018" stroke-width="1.2" /><line x1="920" y1="467" x2="920" y2="612.5" stroke="#18e018" stroke-width="1.2" /><path d="M920 467 H982.5 V458" stroke="#18e018" stroke-width="1.2" fill="none" /><path d="M920 612.5 H990" stroke="#18e018" stroke-width="1.2" fill="none" /><line x1="608.7" y1="474.5" x2="608.7" y2="620" stroke="#18e018" stroke-width="1.2" /><circle cx="557" cy="474.5" r="3.8" fill="#c8c8b0" stroke="#e8e800" stroke-width="1.5"/><path d="M555 472.5 l4 4 M559 472.5 l-4 4" stroke="#fff" stroke-width="1"/><circle cx="557" cy="605.5" r="3.8" fill="#c8c8b0" stroke="#e8e800" stroke-width="1.5"/><path d="M555 603.5 l4 4 M559 603.5 l-4 4" stroke="#fff" stroke-width="1"/><circle cx="630.5" cy="474.5" r="3.8" fill="#c8c8b0" stroke="#e8e800" stroke-width="1.5"/><path d="M628.5 472.5 l4 4 M632.5 472.5 l-4 4" stroke="#fff" stroke-width="1"/><circle cx="630.5" cy="605.5" r="3.8" fill="#c8c8b0" stroke="#e8e800" stroke-width="1.5"/><path d="M628.5 603.5 l4 4 M632.5 603.5 l-4 4" stroke="#fff" stroke-width="1"/><circle cx="730" cy="474.5" r="3.8" fill="#c8c8b0" stroke="#e8e800" stroke-width="1.5"/><path d="M728 472.5 l4 4 M732 472.5 l-4 4" stroke="#fff" stroke-width="1"/><circle cx="730" cy="605.5" r="3.8" fill="#c8c8b0" stroke="#e8e800" stroke-width="1.5"/><path d="M728 603.5 l4 4 M732 603.5 l-4 4" stroke="#fff" stroke-width="1"/><circle cx="829" cy="474.5" r="3.8" fill="#c8c8b0" stroke="#e8e800" stroke-width="1.5"/><path d="M827 472.5 l4 4 M831 472.5 l-4 4" stroke="#fff" stroke-width="1"/><circle cx="829" cy="605.5" r="3.8" fill="#c8c8b0" stroke="#e8e800" stroke-width="1.5"/><path d="M827 603.5 l4 4 M831 603.5 l-4 4" stroke="#fff" stroke-width="1"/><circle cx="920" cy="474.5" r="3.8" fill="#c8c8b0" stroke="#e8e800" stroke-width="1.5"/><path d="M918 472.5 l4 4 M922 472.5 l-4 4" stroke="#fff" stroke-width="1"/><circle cx="920" cy="540" r="3.8" fill="#c8c8b0" stroke="#e8e800" stroke-width="1.5"/><path d="M918 538 l4 4 M922 538 l-4 4" stroke="#fff" stroke-width="1"/><circle cx="920" cy="605.5" r="3.8" fill="#c8c8b0" stroke="#e8e800" stroke-width="1.5"/><path d="M918 603.5 l4 4 M922 603.5 l-4 4" stroke="#fff" stroke-width="1"/><circle cx="982.5" cy="466.5" r="3.8" fill="#c8c8b0" stroke="#e8e800" stroke-width="1.5"/><path d="M980.5 464.5 l4 4 M984.5 464.5 l-4 4" stroke="#fff" stroke-width="1"/><circle cx="990" cy="612.5" r="3.8" fill="#c8c8b0" stroke="#e8e800" stroke-width="1.5"/><path d="M988 610.5 l4 4 M992 610.5 l-4 4" stroke="#fff" stroke-width="1"/><rect x="599" y="454" width="27" height="11" fill="#262a30" stroke="#d8d8d8" stroke-width="1.2"/><text transform="translate(612.5 462.5) scale(0.75 1)" text-anchor="middle" font-family="Liberation Sans" font-size="10.5" fill="#18e018" stroke="#18e018" stroke-width="0.35" >3-C04</text><rect x="710" y="454" width="27" height="11" fill="#262a30" stroke="#d8d8d8" stroke-width="1.2"/><text transform="translate(723.5 462.5) scale(0.75 1)" text-anchor="middle" font-family="Liberation Sans" font-size="10.5" fill="#18e018" stroke="#18e018" stroke-width="0.35" >3-C05</text><rect x="828" y="454" width="27" height="11" fill="#262a30" stroke="#d8d8d8" stroke-width="1.2"/><text transform="translate(841.5 462.5) scale(0.75 1)" text-anchor="middle" font-family="Liberation Sans" font-size="10.5" fill="#18e018" stroke="#18e018" stroke-width="0.35" >3-C06</text><rect x="877" y="454" width="27" height="11" fill="#262a30" stroke="#d8d8d8" stroke-width="1.2"/><text transform="translate(890.5 462.5) scale(0.75 1)" text-anchor="middle" font-family="Liberation Sans" font-size="10.5" fill="#18e018" stroke="#18e018" stroke-width="0.35" >3-C07</text><rect x="536" y="481" width="24" height="10" fill="#262a30" stroke="#d8d8d8" stroke-width="1.2"/><text transform="translate(548.0 488.5) scale(0.75 1)" text-anchor="middle" font-family="Liberation Sans" font-size="10.5" fill="#18e018" stroke="#18e018" stroke-width="0.35" >3-C03</text><rect x="667" y="478" width="25" height="10" fill="#262a30" stroke="#d8d8d8" stroke-width="1.2"/><text transform="translate(679.5 485.5) scale(0.75 1)" text-anchor="middle" font-family="Liberation Sans" font-size="10.5" fill="#18e018" stroke="#18e018" stroke-width="0.35" >3-G02</text><path d="M531 473 h4 M537 470 q-3 0 -3 3 q0 3 3 3" stroke="#e8e800" stroke-width="1.5" fill="none" /><path d="M530 473 V486 H536" stroke="#18e018" stroke-width="1.2" fill="none" /><rect x="516" y="601" width="24.5" height="9.5" fill="#262a30" stroke="#d8d8d8" stroke-width="1.2"/><text transform="translate(528.25 608.0) scale(0.75 1)" text-anchor="middle" font-family="Liberation Sans" font-size="10.5" fill="#18e018" stroke="#18e018" stroke-width="0.35" >3-G02</text><rect x="516" y="612.5" width="24.5" height="9.5" fill="#262a30" stroke="#d8d8d8" stroke-width="1.2"/><text transform="translate(528.25 619.5) scale(0.75 1)" text-anchor="middle" font-family="Liberation Sans" font-size="10.5" fill="#18e018" stroke="#18e018" stroke-width="0.35" >3-C03</text><rect x="557" y="634" width="27" height="11" fill="#262a30" stroke="#d8d8d8" stroke-width="1.2"/><text transform="translate(570.5 642.5) scale(0.75 1)" text-anchor="middle" font-family="Liberation Sans" font-size="10.5" fill="#18e018" stroke="#18e018" stroke-width="0.35" >3-C12</text><rect x="709" y="614" width="27" height="11" fill="#262a30" stroke="#d8d8d8" stroke-width="1.2"/><text transform="translate(722.5 622.5) scale(0.75 1)" text-anchor="middle" font-family="Liberation Sans" font-size="10.5" fill="#18e018" stroke="#18e018" stroke-width="0.35" >3-C11</text><rect x="827" y="614" width="27" height="11" fill="#262a30" stroke="#d8d8d8" stroke-width="1.2"/><text transform="translate(840.5 622.5) scale(0.75 1)" text-anchor="middle" font-family="Liberation Sans" font-size="10.5" fill="#18e018" stroke="#18e018" stroke-width="0.35" >3-C10</text><rect x="833" y="599" width="27" height="11" fill="#262a30" stroke="#d8d8d8" stroke-width="1.2"/><text transform="translate(846.5 607.5) scale(0.75 1)" text-anchor="middle" font-family="Liberation Sans" font-size="10.5" fill="#18e018" stroke="#18e018" stroke-width="0.35" >3-C03</text><rect x="895" y="630" width="27" height="11" fill="#262a30" stroke="#d8d8d8" stroke-width="1.2"/><text transform="translate(908.5 638.5) scale(0.75 1)" text-anchor="middle" font-family="Liberation Sans" font-size="10.5" fill="#18e018" stroke="#18e018" stroke-width="0.35" >3-C03</text><rect x="955" y="615" width="27" height="11" fill="#262a30" stroke="#d8d8d8" stroke-width="1.2"/><text transform="translate(968.5 623.5) scale(0.75 1)" text-anchor="middle" font-family="Liberation Sans" font-size="10.5" fill="#18e018" stroke="#18e018" stroke-width="0.35" >3-C09</text><rect x="869" y="731" width="25" height="11" fill="#262a30" stroke="#d8d8d8" stroke-width="1.2"/><text transform="translate(881.5 739.5) scale(0.75 1)" text-anchor="middle" font-family="Liberation Sans" font-size="10.5" fill="#18e018" stroke="#18e018" stroke-width="0.35" >1-C07</text><rect x="984" y="435" width="11" height="27" fill="#262a30" stroke="#d8d8d8" stroke-width="1.2"/><text transform="translate(993.0 448.5) rotate(-90) scale(0.75 1)" text-anchor="middle" font-family="Liberation Sans" font-size="10.5" fill="#18e018" stroke="#18e018" stroke-width="0.35" >3-C01</text><path d="M538.6 507 H602.6 V573 H538.6 Z" stroke="#18e018" stroke-width="1.2" fill="none" /><path d="M549 507 H592 M549 573 H592" stroke="#e8e800" stroke-width="2" fill="none" /><path d="M549 504 v6 M566 504 v6 M574 504 v6 M592 504 v6 M549 570 v6 M566 570 v6 M574 570 v6 M592 570 v6" stroke="#e8e800" stroke-width="1.2" fill="none" /><path d="M538.6 518.5 V536.5 M538.6 543 V561 M602.6 543 V561" stroke="#e8e800" stroke-width="2" fill="none" /><path d="M535 518.5 h7 M535 536.5 h7 M535 543 h7 M535 561 h7 M599 518.5 h7 M599 536.5 h7 M599 543 h7 M599 561 h7" stroke="#e8e800" stroke-width="1.2" fill="none" /><circle cx="557" cy="526.5" r="3.6" fill="#c8c8b0" stroke="#e8e800" stroke-width="1.5"/><path d="M555 524.5 l4 4 M559 524.5 l-4 4" stroke="#fff" stroke-width="1"/><circle cx="583.5" cy="526.5" r="3.6" fill="#c8c8b0" stroke="#e8e800" stroke-width="1.5"/><path d="M581.5 524.5 l4 4 M585.5 524.5 l-4 4" stroke="#fff" stroke-width="1"/><circle cx="557" cy="553.5" r="3.6" fill="#c8c8b0" stroke="#e8e800" stroke-width="1.5"/><path d="M555 551.5 l4 4 M559 551.5 l-4 4" stroke="#fff" stroke-width="1"/><circle cx="583.5" cy="553.5" r="3.6" fill="#c8c8b0" stroke="#e8e800" stroke-width="1.5"/><path d="M581.5 551.5 l4 4 M585.5 551.5 l-4 4" stroke="#fff" stroke-width="1"/><path d="M557 526.5 H583.5 V566 H606 V625 M557 553.5 H583.5" stroke="#18e018" stroke-width="1.2" fill="none" /><rect x="558.4" y="534.2" width="24.5" height="9.5" fill="#262a30" stroke="#d8d8d8" stroke-width="1.2"/><text transform="translate(570.65 541.2) scale(0.75 1)" text-anchor="middle" font-family="Liberation Sans" font-size="10.5" fill="#18e018" stroke="#18e018" stroke-width="0.35" >3-G02</text><rect x="527" y="521.3" width="9.6" height="23.8" fill="#262a30" stroke="#d8d8d8" stroke-width="1.2"/><text transform="translate(535.3 533.1999999999999) rotate(-90) scale(0.75 1)" text-anchor="middle" font-family="Liberation Sans" font-size="10.5" fill="#18e018" stroke="#18e018" stroke-width="0.35" >3-C03</text><path d="M612 625 V540 H623" stroke="#18e018" stroke-width="1.2" fill="none" /><rect x="580" y="611.2" width="13.6" height="12.6" fill="none" stroke="#e8e800" stroke-width="1.6"/><path d="M583 620 l6 -6 h3" stroke="#e8e800" stroke-width="1.2" fill="none" /><circle cx="584" cy="620" r="1.8" fill="none" stroke="#e8e800" stroke-width="1.2"/><text transform="translate(578 595) scale(0.78 1)" text-anchor="middle" font-family="Liberation Sans" font-size="9.5" fill="#e8e800" stroke="#e8e800" stroke-width="0.35" >CS</text><text transform="translate(586 603) scale(0.72 1)" text-anchor="middle" font-family="Liberation Sans" font-size="9.5" fill="#e8e800" stroke="#e8e800" stroke-width="0.35" >6 CANC</text><path d="M593 613.5 H601 V605.5" stroke="#18e018" stroke-width="1" fill="none" /><path d="M601 602.5 a2.5 2.5 0 0 1 0 5" stroke="#18e018" stroke-width="1" fill="none" /><path d="M593 615.2 H604 V604.0" stroke="#18e018" stroke-width="1" fill="none" /><path d="M604 602.5 a2.5 2.5 0 0 1 0 5" stroke="#18e018" stroke-width="1" fill="none" /><path d="M593 616.9 H607 V602.5" stroke="#18e018" stroke-width="1" fill="none" /><path d="M607 602.5 a2.5 2.5 0 0 1 0 5" stroke="#18e018" stroke-width="1" fill="none" /><path d="M593 618.6 H610 V601.0" stroke="#18e018" stroke-width="1" fill="none" /><path d="M610 602.5 a2.5 2.5 0 0 1 0 5" stroke="#18e018" stroke-width="1" fill="none" /><path d="M593 620.3 H613 V599.5" stroke="#18e018" stroke-width="1" fill="none" /><path d="M613 602.5 a2.5 2.5 0 0 1 0 5" stroke="#18e018" stroke-width="1" fill="none" /><path d="M593 622.0 H616 V598.0" stroke="#18e018" stroke-width="1" fill="none" /><path d="M616 602.5 a2.5 2.5 0 0 1 0 5" stroke="#18e018" stroke-width="1" fill="none" /><path d="M580 614.6 H551 V594 H539" stroke="#18e018" stroke-width="1" fill="none" /><path d="M580 617.5 H548 V611 H540" stroke="#18e018" stroke-width="1" fill="none" /><path d="M580 620.5 H545 V616 H540" stroke="#18e018" stroke-width="1" fill="none" /><path d="M539 594 H551" stroke="#18e018" stroke-width="1" fill="none" /><rect x="629" y="495.5" width="82" height="89.5" fill="none" stroke="#e8787a" stroke-width="1.1"/><rect x="631" y="497.5" width="78" height="85.5" fill="none" stroke="#e8787a" stroke-width="0.8"/><path d="M632.5 496 V585 M636.9 496 V585 M641.3 496 V585 M645.7 496 V585 M650.1 496 V585 M654.5 496 V585 M658.9 496 V585 M663.3 496 V585 M667.7 496 V585 M672.1 496 V585 M676.5 496 V585 M680.9 496 V585 " stroke="#e01818" stroke-width="1.3" fill="none" /><line x1="632" y1="518" x2="681" y2="518" stroke="#18e018" stroke-width="2.6" /><line x1="632" y1="562" x2="681" y2="562" stroke="#18e018" stroke-width="2.6" /><line x1="651" y1="499" x2="661" y2="517" stroke="#18d8e8" stroke-width="1" stroke-dasharray="2 1.5"/><line x1="661" y1="563" x2="651" y2="581" stroke="#18d8e8" stroke-width="1" stroke-dasharray="2 1.5"/><circle cx="623" cy="517.5" r="3.6" fill="#c8c8b0" stroke="#e8e800" stroke-width="1.5"/><path d="M621 515.5 l4 4 M625 515.5 l-4 4" stroke="#fff" stroke-width="1"/><circle cx="623" cy="562" r="3.6" fill="#c8c8b0" stroke="#e8e800" stroke-width="1.5"/><path d="M621 560 l4 4 M625 560 l-4 4" stroke="#fff" stroke-width="1"/><line x1="623" y1="517.5" x2="623" y2="562" stroke="#18e018" stroke-width="1.2" /><rect x="687" y="531.5" width="9.5" height="24.5" fill="#262a30" stroke="#d8d8d8" stroke-width="1.2"/><text transform="translate(695.25 543.75) rotate(-90) scale(0.75 1)" text-anchor="middle" font-family="Liberation Sans" font-size="10.5" fill="#18e018" stroke="#18e018" stroke-width="0.35" >2-C03</text><path d="M691.5 506 V531 M691.5 513 H703.5 V556" stroke="#18e018" stroke-width="1.2" fill="none" /><rect x="688" y="498" width="6" height="7" fill="none" stroke="#18e018" stroke-width="1.3"/><text transform="translate(700 505.5) scale(0.8 1)" text-anchor="middle" font-family="Liberation Sans" font-size="10" fill="#18e018" stroke="#18e018" stroke-width="0.35" >PS</text><path d="M700 522 l6-4 v8z M700 556 l6-4 v8z" fill="#e8e800"/><circle cx="721.4" cy="517.6" r="3.6" fill="#c8c8b0" stroke="#e8e800" stroke-width="1.5"/><path d="M719.4 515.6 l4 4 M723.4 515.6 l-4 4" stroke="#fff" stroke-width="1"/><circle cx="742.6" cy="540" r="3.6" fill="#c8c8b0" stroke="#e8e800" stroke-width="1.5"/><path d="M740.6 538 l4 4 M744.6 538 l-4 4" stroke="#fff" stroke-width="1"/><circle cx="764.2" cy="517.6" r="3.6" fill="#c8c8b0" stroke="#e8e800" stroke-width="1.5"/><path d="M762.2 515.6 l4 4 M766.2 515.6 l-4 4" stroke="#fff" stroke-width="1"/><circle cx="721.4" cy="562.5" r="3.6" fill="#c8c8b0" stroke="#e8e800" stroke-width="1.5"/><path d="M719.4 560.5 l4 4 M723.4 560.5 l-4 4" stroke="#fff" stroke-width="1"/><circle cx="764.2" cy="562.5" r="3.6" fill="#c8c8b0" stroke="#e8e800" stroke-width="1.5"/><path d="M762.2 560.5 l4 4 M766.2 560.5 l-4 4" stroke="#fff" stroke-width="1"/><path d="M721.4 517.6 V562.5 H764.2 V517.6 M742.6 540 V574.5 H778" stroke="#18e018" stroke-width="1.2" fill="none" /><circle cx="779.5" cy="574.5" r="2" fill="none" stroke="#e8e800" stroke-width="1.2"/><circle cx="787" cy="574.5" r="2" fill="none" stroke="#e8e800" stroke-width="1.2"/><path d="M773 568 l4 4 M791 570 l4 -4" stroke="#e8e800" stroke-width="1.2" fill="none" /><rect x="769.3" y="536.6" width="9.5" height="24.3" fill="#262a30" stroke="#d8d8d8" stroke-width="1.2"/><text transform="translate(777.55 548.75) rotate(-90) scale(0.75 1)" text-anchor="middle" font-family="Liberation Sans" font-size="10.5" fill="#18e018" stroke="#18e018" stroke-width="0.35" >3-C01</text><rect x="782.3" y="494.5" width="46.7" height="91" fill="none" stroke="#e8787a" stroke-width="1.1"/><rect x="784.5" y="496.7" width="42.3" height="68" fill="none" stroke="#e8787a" stroke-width="0.8"/><line x1="782.3" y1="566" x2="829" y2="566" stroke="#e8787a" stroke-width="2.6" /><rect x="800" y="508.5" width="11" height="6.5" fill="#e8e800" stroke="#ddd" stroke-width="0.8"/><rect x="800" y="546.5" width="11" height="6.5" fill="#e8e800" stroke="#ddd" stroke-width="0.8"/><path d="M805.5 515 V546 M805.5 553 V561 H798.6 V591 M787 574.5 H805 M798.6 581.6 H846" stroke="#18e018" stroke-width="1.2" fill="none" /><circle cx="805.4" cy="574.5" r="3.6" fill="#c8c8b0" stroke="#e8e800" stroke-width="1.5"/><path d="M803.4 572.5 l4 4 M807.4 572.5 l-4 4" stroke="#fff" stroke-width="1"/><rect x="812.7" y="535" width="9.4" height="25" fill="#262a30" stroke="#d8d8d8" stroke-width="1.2"/><text transform="translate(820.9000000000001 547.5) rotate(-90) scale(0.75 1)" text-anchor="middle" font-family="Liberation Sans" font-size="10.5" fill="#18e018" stroke="#18e018" stroke-width="0.35" >3-C02</text><circle cx="794" cy="496" r="1.8" fill="#e01818"/><circle cx="816" cy="496" r="1.8" fill="#e01818"/><circle cx="794" cy="566" r="1.8" fill="#e01818"/><circle cx="816" cy="566" r="1.8" fill="#e01818"/><circle cx="794" cy="585" r="1.8" fill="#e01818"/><circle cx="816" cy="585" r="1.8" fill="#e01818"/><path d="M829 494.5 H864 M829 585.5 H841" stroke="#e8787a" stroke-width="1.1" fill="none" /><path d="M841 494.5 V553" stroke="#e8787a" stroke-width="1" fill="none" /><path d="M838 494 V553 H853 M854.5 496 V553" stroke="#18d8e8" stroke-width="1.2" fill="none" /><path d="M838 510 A15 15 0 0 0 853 494.5" stroke="#18d8e8" stroke-width="1.2" fill="none" /><rect x="829.6" y="531" width="6.4" height="7" fill="#18d8e8"/><rect x="830" y="542" width="6" height="6" fill="none" stroke="#18d8e8" stroke-width="1.1"/><rect x="855" y="538" width="7" height="13" rx="3" fill="none" stroke="#18d8e8" stroke-width="1.3"/><rect x="841" y="522" width="11" height="6.5" fill="#e8e800" stroke="#ddd" stroke-width="0.8"/><circle cx="846.5" cy="540.6" r="3.5" fill="#c8c8b0" stroke="#e8e800" stroke-width="1.5"/><path d="M844.5 538.6 l4 4 M848.5 538.6 l-4 4" stroke="#fff" stroke-width="1"/><path d="M846.5 528 V537 M846.5 533 H860 M860 506 V557 H846.5 V582" stroke="#18e018" stroke-width="1.2" fill="none" /><circle cx="860" cy="506" r="2" fill="none" stroke="#e8e800" stroke-width="1.2"/><line x1="864" y1="505" x2="864" y2="547" stroke="#18d8e8" stroke-width="2.2" stroke-dasharray="3 2"/><rect x="840.7" y="553.5" width="25" height="39.5" fill="none" stroke="#e8787a" stroke-width="1.1"/><rect x="842.5" y="555.5" width="21.5" height="35.5" fill="none" stroke="#e8787a" stroke-width="0.7"/><line x1="841" y1="573.4" x2="866" y2="573.4" stroke="#e8787a" stroke-width="1" /><path d="M852.5 577.8000000000001 L856.3 581.6 L852.5 585.4 L848.7 581.6z" fill="#c8c8a0" stroke="#e8e800" stroke-width="1.4"/><path d="M852.5 560.2 L856.3 564 L852.5 567.8 L848.7 564z" fill="#c8c8a0" stroke="#e8e800" stroke-width="1.4"/><rect x="856" y="561" width="6" height="6" fill="#e8e800"/><rect x="830" y="556" width="9.5" height="4.5" fill="#e8e800"/><path d="M843 560 A9 9 0 0 1 851 569" stroke="#18d8e8" stroke-width="1.2" fill="none" /><circle cx="838.6" cy="576.5" r="2" fill="none" stroke="#e8e800" stroke-width="1.2"/><path d="M846 589 h12" stroke="#18d8e8" stroke-width="1.5" fill="none" stroke-dasharray="1.5 9"/><rect x="744.0" y="493.5" width="5" height="5" fill="none" stroke="#e01818" stroke-width="1.2"/><rect x="744.0" y="582.0" width="5" height="5" fill="none" stroke="#e01818" stroke-width="1.2"/><rect x="862.0" y="493.5" width="5" height="5" fill="none" stroke="#e01818" stroke-width="1.2"/><rect x="862.0" y="582.0" width="5" height="5" fill="none" stroke="#e01818" stroke-width="1.2"/><rect x="626.0" y="493.5" width="5" height="5" fill="none" stroke="#e01818" stroke-width="1.2"/><rect x="626.0" y="582.0" width="5" height="5" fill="none" stroke="#e01818" stroke-width="1.2"/><rect x="522.5" y="493.5" width="5" height="5" fill="none" stroke="#e01818" stroke-width="1.2"/><rect x="522.5" y="582.0" width="5" height="5" fill="none" stroke="#e01818" stroke-width="1.2"/><rect x="864.5" y="494.5" width="31" height="91" fill="none" stroke="#e8787a" stroke-width="1.1"/><rect x="866" y="504.5" width="27" height="70" fill="none" stroke="#e8787a" stroke-width="0.9"/><path d="M866 505 L893 575 M893 505 L866 575" stroke="#e01818" stroke-width="1.2" fill="none" /><text transform="translate(880 545) scale(0.7 1)" text-anchor="middle" font-family="Liberation Sans" font-size="10" fill="#e01818" stroke="#e01818" stroke-width="0.35" >VOID</text><rect x="866" y="496.5" width="27" height="7" fill="none" stroke="#e8787a" stroke-width="0.8"/><rect x="866" y="576.5" width="27" height="7" fill="none" stroke="#e8787a" stroke-width="0.8"/><path d="M867 500 h25 M867 580 h25" stroke="#c09080" stroke-width="3" fill="none" stroke-dasharray="2 1 1 1"/><rect x="907" y="508" width="10" height="24" fill="#262a30" stroke="#d8d8d8" stroke-width="1.2"/><text transform="translate(915.5 520.0) rotate(-90) scale(0.75 1)" text-anchor="middle" font-family="Liberation Sans" font-size="10.5" fill="#18e018" stroke="#18e018" stroke-width="0.35" >3-C02</text><path d="M944.4 480 H1041 M944.4 480 V511 M944.4 526 V585 M944.4 568 V600.5 H1041" stroke="#e8787a" stroke-width="1.1" fill="none" /><path d="M946.6 482.2 H1039 M946.6 482.2 V509 M946.6 528 V583 M946.6 570 V598.3 H1039" stroke="#e8787a" stroke-width="0.8" fill="none" /><line x1="946" y1="538.8" x2="1041" y2="538.8" stroke="#e8787a" stroke-width="1" /><line x1="946" y1="541.2" x2="1041" y2="541.2" stroke="#e8787a" stroke-width="1" /><path d="M944.4 511 H960 M944.4 568 H960 M982.5 480 V512 M982.5 568 V600" stroke="#e8787a" stroke-width="1" fill="none" /><path d="M946 509 H960 M946 570 H960 M984.7 482 V510 M984.7 570 V598" stroke="#e8787a" stroke-width="0.8" fill="none" /><rect x="946.5" y="484" width="13" height="13" fill="none" stroke="#18d8e8" stroke-width="1.8"/><rect x="946.5" y="585" width="13" height="13" fill="none" stroke="#18d8e8" stroke-width="1.8"/><path d="M965 496.2 L968.8 500 L965 503.8 L961.2 500z" fill="#c8c8a0" stroke="#e8e800" stroke-width="1.4"/><path d="M965 576.2 L968.8 580 L965 583.8 L961.2 580z" fill="#c8c8a0" stroke="#e8e800" stroke-width="1.4"/><rect x="963" y="484.5" width="6" height="6" fill="#e8e800" stroke="#fff" stroke-width="0.6"/><rect x="963" y="589.5" width="6" height="6" fill="#e8e800" stroke="#fff" stroke-width="0.6"/><rect x="971" y="484" width="10" height="3" fill="#e8e800"/><rect x="971" y="594" width="10" height="3" fill="#e8e800"/><path d="M960 511.5 A10 10 0 0 1 970 513 M946 514 A12 12 0 0 1 960 526 M946 555 A12 12 0 0 0 960 568 M982 499 A12 12 0 0 0 970 511 M982 581 A12 12 0 0 1 970 569" stroke="#18d8e8" stroke-width="1.3" fill="none" /><line x1="1041" y1="543" x2="1041" y2="581" stroke="#18d8e8" stroke-width="1.6" /><ellipse cx="1014" cy="509.8" rx="5.5" ry="4" fill="#b8b8a0" stroke="#e8e800" stroke-width="1.6"/><path d="M1011.5 507.8 l5 4 M1016.5 507.8 l-5 4" stroke="#fff" stroke-width="1.2"/><ellipse cx="1014" cy="570" rx="5.5" ry="4" fill="#b8b8a0" stroke="#e8e800" stroke-width="1.6"/><path d="M1011.5 568 l5 4 M1016.5 568 l-5 4" stroke="#fff" stroke-width="1.2"/><text transform="translate(1027 523) scale(0.72 1)" text-anchor="middle" font-family="Liberation Sans" font-size="10.5" fill="#e8e800" stroke="#e8e800" stroke-width="0.35" >I.&#160;10</text><text transform="translate(1027 574) scale(0.72 1)" text-anchor="middle" font-family="Liberation Sans" font-size="10.5" fill="#e8e800" stroke="#e8e800" stroke-width="0.35" >I.&#160;11</text><path d="M973 510 H1014 M973 570 H1014 M988.6 484 V596 M973 486 V590 M940 524 H1005 V556 H940 V524 M940 556 V630" stroke="#18e018" stroke-width="1.1" fill="none" /><path d="M968 484 H988.6 M968 596 H988.6" stroke="#18e018" stroke-width="1.1" fill="none" /><circle cx="973" cy="528.3" r="3.6" fill="#c8c8b0" stroke="#e8e800" stroke-width="1.5"/><path d="M971 526.3 l4 4 M975 526.3 l-4 4" stroke="#fff" stroke-width="1"/><circle cx="973" cy="551.5" r="3.6" fill="#c8c8b0" stroke="#e8e800" stroke-width="1.5"/><path d="M971 549.5 l4 4 M975 549.5 l-4 4" stroke="#fff" stroke-width="1"/><circle cx="988" cy="536" r="2" fill="none" stroke="#e8e800" stroke-width="1.2"/><circle cx="988" cy="544" r="2" fill="none" stroke="#e8e800" stroke-width="1.2"/><path d="M996 532 l-2 -3 M996 532 l2 -3 M996 532 V536 M1014 532 l-2 -3 M1014 532 l2 -3 M1014 532 V536 M996 548 l-2 3 M996 548 l2 3 M996 548 V544 M1014 548 l-2 3 M1014 548 l2 3 M1014 548 V544" stroke="#e8e800" stroke-width="1.4" fill="none" /><path d="M996 536 H1014 M996 544 H1014 M983 531 l3 3 M983 549 l3 -3" stroke="#18e018" stroke-width="1.1" fill="none" /><rect x="934.5" y="567.5" width="9.3" height="24.3" fill="#262a30" stroke="#d8d8d8" stroke-width="1.2"/><text transform="translate(942.65 579.65) rotate(-90) scale(0.75 1)" text-anchor="middle" font-family="Liberation Sans" font-size="10.5" fill="#18e018" stroke="#18e018" stroke-width="0.35" >3-C08</text><path d="M919.5 474.5 V612.5 H990 M919.5 467 H982.5" stroke="#18e018" stroke-width="1.1" fill="none" /><text transform="translate(1004 609) scale(0.72 1)" text-anchor="middle" font-family="Liberation Sans" font-size="10" fill="#e8e800" stroke="#e8e800" stroke-width="0.35" >LDP-3</text><path d="M1026.5 600 H1041 V625 H1026.5 Z M1026.5 612.5 H1041" stroke="#e8787a" stroke-width="1.1" fill="none" /><path d="M1028 602 L1039 611 M1039 602 L1028 611 M1028 614 L1039 623.5 M1039 614 L1028 623.5" stroke="#e01818" stroke-width="1.2" fill="none" /><path d="M1026 603 A10 10 0 0 0 1017 612 M1026 614 A10 10 0 0 0 1017 623" stroke="#18d8e8" stroke-width="1.3" fill="none" /><rect x="1011" y="620" width="10" height="5.5" fill="#e8e800"/><path d="M1011.5 454 V480 M1013.7 456 V480" stroke="#e8787a" stroke-width="1" fill="none" /><path d="M1000 476 A11 11 0 0 1 1011 465" stroke="#18d8e8" stroke-width="1.3" fill="none" /><path d="M1015 463 l6 4 M1028 458 V460 M1015 457 H1028" stroke="#18e018" stroke-width="1.1" fill="none" /><circle cx="1015" cy="462" r="2" fill="none" stroke="#e8e800" stroke-width="1.2"/><path d="M1028 463.7 L1031.8 467.5 L1028 471.3 L1024.2 467.5z" fill="#c8c8a0" stroke="#e8e800" stroke-width="1.4"/><path d="M863.3 626 V726 M865.7 628 V724 M922.3 626 V726 M924.7 628 V724" stroke="#e8787a" stroke-width="1" fill="none" /><line x1="864" y1="626" x2="923" y2="626" stroke="#e8787a" stroke-width="1" /><path d="M865.5 668.0 h28 M865.5 672.7 h28 M865.5 677.4 h28 M865.5 682.1 h28 M865.5 686.8 h28 M865.5 691.5 h28 M865.5 696.2 h28 M865.5 700.9 h28 M865.5 705.6 h28 M865.5 710.3 h28 " stroke="#d01818" stroke-width="1.3" fill="none" /><path d="M883.7 664 V714 M871 695 V714 H884.6" stroke="#e01818" stroke-width="1.2" fill="none" /><path d="M865 668 H878.4 V711" stroke="#e8e800" stroke-width="1.8" fill="none" /><line x1="894" y1="665" x2="894" y2="725" stroke="#e8787a" stroke-width="1.6" /><path d="M877.6 714 l-4.5 7 h9z" fill="#e8e800"/><line x1="869.7" y1="637" x2="869.7" y2="735" stroke="#18e018" stroke-width="1.1" /><rect x="866" y="632" width="6" height="7" fill="none" stroke="#18e018" stroke-width="1.2"/><text transform="translate(878 639) scale(0.8 1)" text-anchor="middle" font-family="Liberation Sans" font-size="10" fill="#18e018" stroke="#18e018" stroke-width="0.35" >PS</text><circle cx="877.6" cy="650.8" r="3.6" fill="#c8c8b0" stroke="#e8e800" stroke-width="1.5"/><path d="M875.6 648.8 l4 4 M879.6 648.8 l-4 4" stroke="#fff" stroke-width="1"/><circle cx="907.3" cy="650.8" r="3.6" fill="#c8c8b0" stroke="#e8e800" stroke-width="1.5"/><path d="M905.3 648.8 l4 4 M909.3 648.8 l-4 4" stroke="#fff" stroke-width="1"/><circle cx="907.3" cy="700.7" r="3.6" fill="#c8c8b0" stroke="#e8e800" stroke-width="1.5"/><path d="M905.3 698.7 l4 4 M909.3 698.7 l-4 4" stroke="#fff" stroke-width="1"/><path d="M877.6 650.8 H919.6 M907.3 650.8 V700.7 M919.6 640 V668" stroke="#18e018" stroke-width="1.1" fill="none" /><text transform="translate(893 750) scale(0.66 1)" text-anchor="middle" font-family="Liberation Sans" font-size="9.5" fill="#e01818" stroke="#e01818" stroke-width="0.35" >DARI LT. DASAR</text><line x1="875" y1="726" x2="884.6" y2="726" stroke="#18d8e8" stroke-width="3" /><line x1="903" y1="726" x2="912.6" y2="726" stroke="#18d8e8" stroke-width="3" /><line x1="314.5" y1="318" x2="314.5" y2="760" stroke="#e01818" stroke-width="1.5" /><line x1="305" y1="324.5" x2="330" y2="324.5" stroke="#e01818" stroke-width="1.5" /><path d="M312 319.5 l2.5 5 2.5-5z" fill="#e01818"/><line x1="305" y1="354.5" x2="330" y2="354.5" stroke="#e01818" stroke-width="1.5" /><path d="M312 349.5 l2.5 5 2.5-5z" fill="#e01818"/><line x1="305" y1="466.5" x2="330" y2="466.5" stroke="#e01818" stroke-width="1.5" /><path d="M312 461.5 l2.5 5 2.5-5z" fill="#e01818"/><line x1="305" y1="496.5" x2="330" y2="496.5" stroke="#e01818" stroke-width="1.5" /><path d="M312 491.5 l2.5 5 2.5-5z" fill="#e01818"/><line x1="305" y1="584.5" x2="330" y2="584.5" stroke="#e01818" stroke-width="1.5" /><path d="M312 579.5 l2.5 5 2.5-5z" fill="#e01818"/><line x1="305" y1="614.5" x2="330" y2="614.5" stroke="#e01818" stroke-width="1.5" /><path d="M312 609.5 l2.5 5 2.5-5z" fill="#e01818"/><line x1="305" y1="726" x2="330" y2="726" stroke="#e01818" stroke-width="1.5" /><path d="M312 721 l2.5 5 2.5-5z" fill="#e01818"/><line x1="305" y1="756" x2="330" y2="756" stroke="#e01818" stroke-width="1.5" /><path d="M312 751 l2.5 5 2.5-5z" fill="#e01818"/><text transform="translate(311 339.5) rotate(-90) scale(0.7 1)" text-anchor="middle" font-family="Liberation Sans" font-size="9.5" fill="#e8e8e8" stroke="#e8e8e8" stroke-width="0.35" >2035</text><text transform="translate(311 410.5) rotate(-90) scale(0.7 1)" text-anchor="middle" font-family="Liberation Sans" font-size="9.5" fill="#e8e8e8" stroke="#e8e8e8" stroke-width="0.35" >7600</text><text transform="translate(311 481) rotate(-90) scale(0.7 1)" text-anchor="middle" font-family="Liberation Sans" font-size="9.5" fill="#e8e8e8" stroke="#e8e8e8" stroke-width="0.35" >2000</text><text transform="translate(311 540.5) rotate(-90) scale(0.7 1)" text-anchor="middle" font-family="Liberation Sans" font-size="9.5" fill="#e8e8e8" stroke="#e8e8e8" stroke-width="0.35" >6000</text><text transform="translate(311 599.5) rotate(-90) scale(0.7 1)" text-anchor="middle" font-family="Liberation Sans" font-size="9.5" fill="#e8e8e8" stroke="#e8e8e8" stroke-width="0.35" >2000</text><text transform="translate(311 670) rotate(-90) scale(0.7 1)" text-anchor="middle" font-family="Liberation Sans" font-size="9.5" fill="#e8e8e8" stroke="#e8e8e8" stroke-width="0.35" >7600</text><text transform="translate(311 741) rotate(-90) scale(0.7 1)" text-anchor="middle" font-family="Liberation Sans" font-size="9.5" fill="#e8e8e8" stroke="#e8e8e8" stroke-width="0.35" >2035</text><line x1="348" y1="786.5" x2="1070" y2="786.5" stroke="#e01818" stroke-width="1.5" /><line x1="348" y1="801.5" x2="1070" y2="801.5" stroke="#e01818" stroke-width="1.5" /><line x1="348.5" y1="766" x2="348.5" y2="806" stroke="#e01818" stroke-width="1.5" /><path d="M342.5 785 l6 1.5 -6 1.5z M354.5 785 l-6 1.5 6 1.5z" fill="#e01818"/><line x1="496" y1="766" x2="496" y2="792" stroke="#e01818" stroke-width="1.5" /><path d="M490 785 l6 1.5 -6 1.5z M502 785 l-6 1.5 6 1.5z" fill="#e01818"/><line x1="511" y1="766" x2="511" y2="792" stroke="#e01818" stroke-width="1.5" /><path d="M505 785 l6 1.5 -6 1.5z M517 785 l-6 1.5 6 1.5z" fill="#e01818"/><line x1="628.5" y1="766" x2="628.5" y2="792" stroke="#e01818" stroke-width="1.5" /><path d="M622.5 785 l6 1.5 -6 1.5z M634.5 785 l-6 1.5 6 1.5z" fill="#e01818"/><line x1="746.5" y1="766" x2="746.5" y2="792" stroke="#e01818" stroke-width="1.5" /><path d="M740.5 785 l6 1.5 -6 1.5z M752.5 785 l-6 1.5 6 1.5z" fill="#e01818"/><line x1="864.5" y1="766" x2="864.5" y2="792" stroke="#e01818" stroke-width="1.5" /><path d="M858.5 785 l6 1.5 -6 1.5z M870.5 785 l-6 1.5 6 1.5z" fill="#e01818"/><line x1="982.5" y1="766" x2="982.5" y2="792" stroke="#e01818" stroke-width="1.5" /><path d="M976.5 785 l6 1.5 -6 1.5z M988.5 785 l-6 1.5 6 1.5z" fill="#e01818"/><line x1="1041.5" y1="766" x2="1041.5" y2="792" stroke="#e01818" stroke-width="1.5" /><path d="M1035.5 785 l6 1.5 -6 1.5z M1047.5 785 l-6 1.5 6 1.5z" fill="#e01818"/><line x1="1070.5" y1="766" x2="1070.5" y2="806" stroke="#e01818" stroke-width="1.5" /><path d="M1064.5 785 l6 1.5 -6 1.5z M1076.5 785 l-6 1.5 6 1.5z" fill="#e01818"/><path d="M354 800 l-6 1.5 6 1.5z M1064 800 l6 1.5 -6 1.5z" fill="#e01818"/><text transform="translate(422 783) scale(0.72 1)" text-anchor="middle" font-family="Liberation Sans" font-size="9.5" fill="#e8e8e8" stroke="#e8e8e8" stroke-width="0.35" >10000</text><text transform="translate(503 783) scale(0.72 1)" text-anchor="middle" font-family="Liberation Sans" font-size="9.5" fill="#e8e8e8" stroke="#e8e8e8" stroke-width="0.35" >1000</text><text transform="translate(569 783) scale(0.72 1)" text-anchor="middle" font-family="Liberation Sans" font-size="9.5" fill="#e8e8e8" stroke="#e8e8e8" stroke-width="0.35" >8000</text><text transform="translate(687 783) scale(0.72 1)" text-anchor="middle" font-family="Liberation Sans" font-size="9.5" fill="#e8e8e8" stroke="#e8e8e8" stroke-width="0.35" >8000</text><text transform="translate(805 783) scale(0.72 1)" text-anchor="middle" font-family="Liberation Sans" font-size="9.5" fill="#e8e8e8" stroke="#e8e8e8" stroke-width="0.35" >8000</text><text transform="translate(923 783) scale(0.72 1)" text-anchor="middle" font-family="Liberation Sans" font-size="9.5" fill="#e8e8e8" stroke="#e8e8e8" stroke-width="0.35" >8000</text><text transform="translate(1012 783) scale(0.72 1)" text-anchor="middle" font-family="Liberation Sans" font-size="9.5" fill="#e8e8e8" stroke="#e8e8e8" stroke-width="0.35" >4000</text><text transform="translate(1056 783) scale(0.72 1)" text-anchor="middle" font-family="Liberation Sans" font-size="9.5" fill="#e8e8e8" stroke="#e8e8e8" stroke-width="0.35" >2000</text><text transform="translate(709 798) scale(0.72 1)" text-anchor="middle" font-family="Liberation Sans" font-size="9.5" fill="#e8e8e8" stroke="#e8e8e8" stroke-width="0.35" >49000</text><rect x="198.3" y="878.6" width="63.5" height="103.95" fill="none" stroke="#e0e0e0" stroke-width="1.3"/><line x1="229.8" y1="878.6" x2="229.8" y2="982.5500000000001" stroke="#e0e0e0" stroke-width="1.3" /><line x1="198.3" y1="893.45" x2="261.8" y2="893.45" stroke="#e0e0e0" stroke-width="1.3" /><line x1="198.3" y1="908.3000000000001" x2="261.8" y2="908.3000000000001" stroke="#e0e0e0" stroke-width="1.3" /><line x1="198.3" y1="923.15" x2="261.8" y2="923.15" stroke="#e0e0e0" stroke-width="1.3" /><line x1="198.3" y1="938.0" x2="261.8" y2="938.0" stroke="#e0e0e0" stroke-width="1.3" /><line x1="198.3" y1="952.85" x2="261.8" y2="952.85" stroke="#e0e0e0" stroke-width="1.3" /><line x1="198.3" y1="967.7" x2="261.8" y2="967.7" stroke="#e0e0e0" stroke-width="1.3" /><text transform="translate(214.05 889.6) scale(0.6 1)" text-anchor="middle" font-family="Liberation Sans" font-size="9.5" fill="#e8e8e8" stroke="#e8e8e8" stroke-width="0.35" >TYPE</text><text transform="translate(245.8 889.6) scale(0.6 1)" text-anchor="middle" font-family="Liberation Sans" font-size="9.5" fill="#e8e8e8" stroke="#e8e8e8" stroke-width="0.35" >QTY</text><circle cx="214.05" cy="900.875" r="3.5" fill="#c8c8b0" stroke="#e8e800" stroke-width="1.5"/><path d="M212.05 898.875 l4 4 M216.05 898.875 l-4 4" stroke="#fff" stroke-width="1"/><text transform="translate(245.8 905.375) scale(0.62 1)" text-anchor="middle" font-family="Liberation Sans" font-size="11" fill="#e8e8e8" stroke="#e8e8e8" stroke-width="0.35" >47</text><ellipse cx="214.05" cy="915.725" rx="5.5" ry="4" fill="#b8b8a0" stroke="#e8e800" stroke-width="1.6"/><path d="M211.55 913.725 l5 4 M216.55 913.725 l-5 4" stroke="#fff" stroke-width="1.2"/><text transform="translate(245.8 920.225) scale(0.62 1)" text-anchor="middle" font-family="Liberation Sans" font-size="11" fill="#e8e8e8" stroke="#e8e8e8" stroke-width="0.35" >19</text><path d="M214.05 926.5749999999999 L218.05 930.5749999999999 L214.05 934.5749999999999 L210.05 930.5749999999999z" fill="#c8c8a0" stroke="#e8e800" stroke-width="1.4"/><text transform="translate(245.8 935.0749999999999) scale(0.62 1)" text-anchor="middle" font-family="Liberation Sans" font-size="11" fill="#e8e8e8" stroke="#e8e8e8" stroke-width="0.35" >22</text><rect x="210.55" y="941.925" width="7" height="7" fill="#e8e800"/><text transform="translate(245.8 949.925) scale(0.62 1)" text-anchor="middle" font-family="Liberation Sans" font-size="11" fill="#e8e8e8" stroke="#e8e8e8" stroke-width="0.35" >21</text><rect x="208.05" y="956.275" width="12" height="8" fill="none" stroke="#e8e800" stroke-width="1.5"/><text transform="translate(245.8 964.775) scale(0.62 1)" text-anchor="middle" font-family="Liberation Sans" font-size="11" fill="#e8e8e8" stroke="#e8e8e8" stroke-width="0.35" >3</text><path d="M209.05 980.125 l5-9 5 9z" fill="#e8e800"/><text transform="translate(245.8 979.625) scale(0.62 1)" text-anchor="middle" font-family="Liberation Sans" font-size="11" fill="#e8e8e8" stroke="#e8e8e8" stroke-width="0.35" >3</text><rect x="273.4" y="878.6" width="63.5" height="103.95" fill="none" stroke="#e0e0e0" stroke-width="1.3"/><line x1="304.9" y1="878.6" x2="304.9" y2="982.5500000000001" stroke="#e0e0e0" stroke-width="1.3" /><line x1="273.4" y1="893.45" x2="336.9" y2="893.45" stroke="#e0e0e0" stroke-width="1.3" /><line x1="273.4" y1="908.3000000000001" x2="336.9" y2="908.3000000000001" stroke="#e0e0e0" stroke-width="1.3" /><line x1="273.4" y1="923.15" x2="336.9" y2="923.15" stroke="#e0e0e0" stroke-width="1.3" /><line x1="273.4" y1="938.0" x2="336.9" y2="938.0" stroke="#e0e0e0" stroke-width="1.3" /><line x1="273.4" y1="952.85" x2="336.9" y2="952.85" stroke="#e0e0e0" stroke-width="1.3" /><line x1="273.4" y1="967.7" x2="336.9" y2="967.7" stroke="#e0e0e0" stroke-width="1.3" /><text transform="translate(289.15 889.6) scale(0.6 1)" text-anchor="middle" font-family="Liberation Sans" font-size="9.5" fill="#e8e8e8" stroke="#e8e8e8" stroke-width="0.35" >TYPE</text><text transform="translate(320.9 889.6) scale(0.6 1)" text-anchor="middle" font-family="Liberation Sans" font-size="9.5" fill="#e8e8e8" stroke="#e8e8e8" stroke-width="0.35" >QTY</text><line x1="280.15" y1="900.875" x2="298.15" y2="900.875" stroke="#e8e800" stroke-width="2.2" /><text transform="translate(320.9 905.375) scale(0.62 1)" text-anchor="middle" font-family="Liberation Sans" font-size="11" fill="#e8e8e8" stroke="#e8e8e8" stroke-width="0.35" >8</text><path d="M285.15 917.725 l2-6 h4 l2 6z M284.15 918.725 h10" fill="none" stroke="#e8e800" stroke-width="1.5"/><text transform="translate(320.9 920.225) scale(0.62 1)" text-anchor="middle" font-family="Liberation Sans" font-size="11" fill="#e8e8e8" stroke="#e8e8e8" stroke-width="0.35" >19</text><rect x="283.15" y="926.5749999999999" width="12" height="5" fill="#e8e800"/><text transform="translate(320.9 935.0749999999999) scale(0.62 1)" text-anchor="middle" font-family="Liberation Sans" font-size="11" fill="#e8e8e8" stroke="#e8e8e8" stroke-width="0.35" >20</text><path d="M283.15 942.425 l5 3 -5 3 M288.15 945.425 h7" stroke="#e8e800" stroke-width="1.6" fill="none" /><text transform="translate(320.9 949.925) scale(0.62 1)" text-anchor="middle" font-family="Liberation Sans" font-size="11" fill="#e8e8e8" stroke="#e8e8e8" stroke-width="0.35" >40</text><text transform="translate(289.15 964.275) scale(0.8 1)" text-anchor="middle" font-family="Liberation Sans" font-size="10" fill="#18e018" stroke="#18e018" stroke-width="0.35" >⊠PS</text><text transform="translate(320.9 964.775) scale(0.62 1)" text-anchor="middle" font-family="Liberation Sans" font-size="11" fill="#e8e8e8" stroke="#e8e8e8" stroke-width="0.35" >2</text><rect x="279.15" y="969.125" width="12" height="12" fill="none" stroke="#e8e8e8"/><path d="M282.15 978.125 l5-6 h3" stroke="#e8e800" stroke-width="1.3" fill="none" /><text transform="translate(294.15 979.125) scale(0.7 1)" text-anchor="middle" font-family="Liberation Sans" font-size="10" fill="#e8e8e8" stroke="#e8e8e8" stroke-width="0.35" >6</text><text transform="translate(320.9 979.625) scale(0.62 1)" text-anchor="middle" font-family="Liberation Sans" font-size="11" fill="#e8e8e8" stroke="#e8e8e8" stroke-width="0.35" >1</text><rect x="349.4" y="878.6" width="63.5" height="103.95" fill="none" stroke="#e0e0e0" stroke-width="1.3"/><line x1="380.9" y1="878.6" x2="380.9" y2="982.5500000000001" stroke="#e0e0e0" stroke-width="1.3" /><line x1="349.4" y1="893.45" x2="412.9" y2="893.45" stroke="#e0e0e0" stroke-width="1.3" /><line x1="349.4" y1="908.3000000000001" x2="412.9" y2="908.3000000000001" stroke="#e0e0e0" stroke-width="1.3" /><line x1="349.4" y1="923.15" x2="412.9" y2="923.15" stroke="#e0e0e0" stroke-width="1.3" /><line x1="349.4" y1="938.0" x2="412.9" y2="938.0" stroke="#e0e0e0" stroke-width="1.3" /><line x1="349.4" y1="952.85" x2="412.9" y2="952.85" stroke="#e0e0e0" stroke-width="1.3" /><line x1="349.4" y1="967.7" x2="412.9" y2="967.7" stroke="#e0e0e0" stroke-width="1.3" /><text transform="translate(365.15 889.6) scale(0.6 1)" text-anchor="middle" font-family="Liberation Sans" font-size="9.5" fill="#e8e8e8" stroke="#e8e8e8" stroke-width="0.35" >TYPE</text><text transform="translate(396.9 889.6) scale(0.6 1)" text-anchor="middle" font-family="Liberation Sans" font-size="9.5" fill="#e8e8e8" stroke="#e8e8e8" stroke-width="0.35" >QTY</text><path d="M361.15 903.875 l4-5 h3" stroke="#e8e800" stroke-width="1.3" fill="none" /><circle cx="361.15" cy="903.875" r="2" fill="none" stroke="#e8e800"/><text transform="translate(396.9 905.375) scale(0.62 1)" text-anchor="middle" font-family="Liberation Sans" font-size="11" fill="#e8e8e8" stroke="#e8e8e8" stroke-width="0.35" >4</text><path d="M361.15 918.725 l4-5 h3" stroke="#e8e800" stroke-width="1.3" fill="none" /><circle cx="361.15" cy="918.725" r="2" fill="none" stroke="#e8e800"/><text transform="translate(396.9 920.225) scale(0.62 1)" text-anchor="middle" font-family="Liberation Sans" font-size="11" fill="#e8e8e8" stroke="#e8e8e8" stroke-width="0.35" >2</text><path d="M361.15 933.5749999999999 l4-5 h3" stroke="#e8e800" stroke-width="1.3" fill="none" /><circle cx="361.15" cy="933.5749999999999" r="2" fill="none" stroke="#e8e800"/><text transform="translate(396.9 935.0749999999999) scale(0.62 1)" text-anchor="middle" font-family="Liberation Sans" font-size="11" fill="#e8e8e8" stroke="#e8e8e8" stroke-width="0.35" >19</text><path d="M352.15 949.425 l10-7 v7z" fill="#e8e800"/><text transform="translate(369.15 949.425) scale(0.7 1)" text-anchor="middle" font-family="Liberation Sans" font-size="10" fill="#e8e8e8" stroke="#e8e8e8" stroke-width="0.35" >LDP</text><text transform="translate(396.9 949.925) scale(0.62 1)" text-anchor="middle" font-family="Liberation Sans" font-size="11" fill="#e8e8e8" stroke="#e8e8e8" stroke-width="0.35" >1</text><text transform="translate(396.9 964.775) scale(0.62 1)" text-anchor="middle" font-family="Liberation Sans" font-size="11" fill="#e8e8e8" stroke="#e8e8e8" stroke-width="0.35" ></text><text transform="translate(396.9 979.625) scale(0.62 1)" text-anchor="middle" font-family="Liberation Sans" font-size="11" fill="#e8e8e8" stroke="#e8e8e8" stroke-width="0.35" ></text><rect x="181.5" y="181.5" width="1179.5" height="817" fill="none" stroke="#b8bc18" stroke-width="1.5"/><text transform="translate(1061 968) scale(0.655 1)" text-anchor="middle" font-family="Liberation Sans" font-size="27" fill="#f0f0f0" stroke="#f0f0f0" stroke-width="0.35" >INSTALASI&#160; SISTIM&#160; PENERANGAN&#160; LANTAI&#160; SATU</text><path d="M20.5 930 V982 H70.5" stroke="#e8e8e8" stroke-width="1.3" fill="none" /><rect x="16" y="977.5" width="9.5" height="9.5" fill="none" stroke="#e8e8e8" stroke-width="1.3"/><path d="M75.5 969 l12 12.5 M87.5 969 l-12 12.5" stroke="#e8e8e8" stroke-width="1.4" fill="none" /><path d="M22.5 914.5 l6 6 6-6 M28.5 920.5 v6" stroke="#e8e8e8" stroke-width="1.4" fill="none" /></svg>
<div style="position:absolute;left:632px;top:903px;width:697px;height:29px;background:rgba(110,110,110,0.72);border-radius:2px"></div><div class="t" style="left:634px;top:905px;font-size:12px;color:#e6e6e6;font-family:'Liberation Mono',monospace;line-height:15px;letter-spacing:-0.2px">Autodesk DWG.&nbsp; This file is a TrustedDWG last saved by an Autodesk application or Autodesk licensed<br>application.</div><div style="position:absolute;left:632px;top:938px;width:60px;height:15px;background:rgba(110,110,110,0.72);border-radius:2px"></div><div class="t" style="left:634px;top:939px;font-size:12px;color:#e6e6e6;font-family:'Liberation Mono',monospace;line-height:15px;letter-spacing:-0.2px">Command:</div><div style="position:absolute;left:632px;top:958px;width:60px;height:15px;background:rgba(110,110,110,0.72);border-radius:2px"></div><div class="t" style="left:634px;top:959px;font-size:12px;color:#e6e6e6;font-family:'Liberation Mono',monospace;line-height:15px;letter-spacing:-0.2px">Command:</div><div style="position:absolute;left:572px;top:977px;width:776px;height:23px;background:#4a4a4a;border:1px solid #2e2e2e;box-sizing:border-box"></div><div style="position:absolute;left:626px;top:978px;width:721px;height:21px;background:#c8c8c8"></div><div style="position:absolute;left:626px;top:998px;width:721px;height:1px;background:#e8e8b0"></div><svg style="position:absolute;left:0px;top:0px;top:0" width="1360" height="1002" viewBox="0 0 1360 1002"><path d="M577 981 v15 M579 981 v15" stroke="#888" stroke-dasharray="1 1"/><path d="M588 984 l8 8 M596 984 l-8 8" stroke="#e8e8e8" stroke-width="1.6"/><path d="M607 994 l7-7" stroke="#e0e0e0" stroke-width="2.4"/><circle cx="616" cy="985" r="3.6" fill="none" stroke="#e0e0e0" stroke-width="2"/><path d="M617 981 l3 3" stroke="#4a4a4a" stroke-width="2.5"/><rect x="631" y="982" width="13" height="12" fill="#aaa" stroke="#555"/><path d="M633 985 l3 2 -3 2 M637 991 h5" stroke="#333" fill="none"/><path d="M649 987 h5 l-2.5 3z" fill="#666"/><path d="M1336 992 h9 l-4.5-5z" fill="#333"/></svg><div class="t" style="left:662px;top:983px;font-size:12px;color:#8a8a8a;font-family:'Liberation Mono',monospace;font-style:italic;letter-spacing:0.3px;transform:scaleX(0.93);transform-origin:0 0">Type a command</div>
<div style="position:absolute;left:0px;top:0px;width:1919px;height:24px;background:#612117"></div><div style="position:absolute;left:41px;top:0px;width:310px;height:24px;background:linear-gradient(#a9a9a9,#9a9a9a)"></div><div style="position:absolute;left:0px;top:0px;width:41px;height:41px;background:linear-gradient(#bdbdbd,#8d8d8d);border:1px solid #2a2a2a;box-sizing:border-box"></div><svg style="position:absolute;left:4px;top:2px;" width="26" height="30" viewBox="0 0 26 30"><path d="M2 28 L11 2 L16 2 L24 28 L19 28 L17 21 L9 21 L7 28 Z M10 17 L16 17 L13.5 8 Z" fill="#c8161d" stroke="#7a0a0e" stroke-width="0.8"/></svg><div style="position:absolute;left:31px;top:18px;width:0;height:0;border-left:4px solid transparent;border-right:4px solid transparent;border-top:4px solid #222;"></div><svg style="position:absolute;left:0px;top:0px;" width="360" height="24" viewBox="0 0 360 24"><path d="M50 7 h11 l5 5 v10 h-16z" fill="#f4f4f4"/><path d="M61 7 v5 h5" fill="#cfcfcf"/><path d="M74 10 h6 l2 2 h7 v3 h-15z" fill="#e4e4e4"/><path d="M76 15 h14 l-3 7 h-13z" fill="#f6f6f6"/><rect x="98" y="5" width="16" height="17" fill="#dedede"/><rect x="101" y="5" width="10" height="6" fill="#f8f8f8"/><rect x="101" y="15" width="10" height="7" fill="#f8f8f8"/><rect x="103" y="17" width="3" height="3" fill="#777"/><rect x="122" y="5" width="16" height="17" fill="#cfcfcf"/><rect x="125" y="5" width="10" height="6" fill="#eee"/><rect x="125" y="15" width="6" height="7" fill="#eee"/><path d="M130 21 l7-8 3 3 -7 8z" fill="#f0c070"/><path d="M137 13 l2-2 3 3 -2 2z" fill="#e86060"/><rect x="148" y="4" width="9" height="17" fill="#6a6a6a" stroke="#555"/><path d="M153 15 h4 l1 1 h4 v6 h-9z" fill="#f0b030"/><rect x="174" y="3" width="10" height="18" rx="1" fill="#4a4a4a"/><rect x="175.5" y="5" width="7" height="12" fill="#e6e6e6"/><path d="M170 11 h8" stroke="#3aa0e0" stroke-width="2.5"/><path d="M176 7 l4 4 -4 4z" fill="#3aa0e0"/><rect x="198" y="4" width="10" height="5" fill="#f6f6f6"/><rect x="194" y="8" width="18" height="9" fill="#f6f6f6"/><rect x="197" y="15" width="12" height="6" fill="#6ab8ee"/><path d="M220 12 l6-5 v3 h8 v5 h-8 v3z" fill="#b0b0b0"/><path d="M242 9 h5 l-2.5 3z" fill="#bdbdbd"/><path d="M270 12 l-6-5 v3 h-8 v5 h8 v3z" fill="#b0b0b0"/><path d="M277 9 h5 l-2.5 3z" fill="#bdbdbd"/><rect x="291" y="4" width="13" height="17" fill="#e6e6e6"/><rect x="293" y="6" width="8" height="4" fill="#6ab8ee"/><path d="M293 13 h6 M293 16 h4" stroke="#555"/><path d="M299 20 l6-6 3 3 -6 6z" fill="#f0c070"/><rect x="318" y="4" width="9" height="4" fill="#f6f6f6"/><rect x="314" y="7" width="16" height="8" fill="#f6f6f6"/><rect x="317" y="14" width="9" height="5" fill="#f6f6f6" stroke="#999" stroke-width="0.6"/><path d="M320 18 h8 l3 2 -3 2 h-8z" fill="#4aa8ec"/><path d="M336 8 h11" stroke="#f6f6f6" stroke-width="1.6"/><path d="M336 11 h11 l-5.5 6z" fill="#f6f6f6"/></svg><div class="t" style="left:624px;top:5px;font-size:12.5px;color:#141414;;transform:scaleX(0.933);transform-origin:0 0">Autodesk AutoCAD 2019</div><div class="t" style="left:766px;top:5px;font-size:12.5px;color:#141414;;transform:scaleX(0.874);transform-origin:0 0">INSTALASI SISTIM PENERANGAN LANTAI SATU.dwg</div><div style="position:absolute;left:1311px;top:0px;width:446px;height:24px;background:#a6a6a6"></div><div style="position:absolute;left:1311px;top:1px;width:13px;height:23px;background:#a8a8a8"></div><svg style="position:absolute;left:1314px;top:7px;" width="8" height="10" viewBox="0 0 8 10"><path d="M1 0 L6 5 L1 10z" fill="#fff"/></svg><div style="position:absolute;left:1323px;top:1px;width:180px;height:22px;background:#767676;border:1px solid #2d2d2d;box-sizing:border-box"></div><div class="t" style="left:1327px;top:5px;font-size:11.5px;color:#d0d0d0;;transform:scaleX(0.92);transform-origin:0 0"><i>Type a keyword or phrase</i></div><svg style="position:absolute;left:1505px;top:0px;" width="250" height="24" viewBox="0 0 250 24"><path d="M4 8 l2-4 h3 v12 h-6z M11 4 h3 l2 4 v8 h-5z" fill="#f4f4f4" stroke="#2a2a2a" stroke-width="1.2"/><rect x="9" y="8" width="2" height="4" fill="#2a2a2a"/><circle cx="34" cy="8" r="4.5" fill="#f0f0f0" stroke="#2a2a2a" stroke-width="1.2"/><path d="M26 20 q1-6 8-6 q7 0 8 6z" fill="#f0f0f0" stroke="#2a2a2a" stroke-width="1.2"/><path d="M132 10 h6 l-3 3z" fill="#f4f4f4"/><path d="M148 6 h3 l3 9 h9 l2-6 h-13" stroke="#2a2a2a" stroke-width="1.5" fill="#e8e8e8"/><circle cx="155" cy="18" r="1.6" fill="#2a2a2a"/><circle cx="162" cy="18" r="1.6" fill="#2a2a2a"/><path d="M174 17 l7-12 7 12z" stroke="#2a2a2a" stroke-width="1.6" fill="#d8d8d8" stroke-linejoin="round"/><circle cx="181" cy="13" r="2" fill="#2a2a2a"/><path d="M194 10 h6 l-3 3z" fill="#f4f4f4"/><circle cx="226" cy="12" r="7.5" fill="#f8f8f8" stroke="#2a2a2a" stroke-width="1.5"/><text x="222" y="16.5" font-family="Liberation Sans" font-weight="bold" font-size="12" fill="#1e3fa0">?</text><path d="M241 10 h6 l-3 3z" fill="#f4f4f4"/></svg><div class="t" style="left:1553px;top:5px;font-size:12.5px;color:#d6ecff;;transform:scaleX(0.92);transform-origin:0 0">Sign In</div><svg style="position:absolute;left:1790px;top:0px;" width="129" height="24" viewBox="0 0 129 24"><path d="M8 11.5 h11" stroke="#fff" stroke-width="1"/><rect x="54.5" y="7.5" width="7" height="7" fill="none" stroke="#fff"/><path d="M56.5 5.5 h7 v7" fill="none" stroke="#fff"/><path d="M100 6 l10 10 M110 6 l-10 10" stroke="#fff" stroke-width="1.2"/></svg>
<div style="position:absolute;left:41px;top:24px;width:1878px;height:1px;background:#303030"></div><div style="position:absolute;left:41px;top:25px;width:1878px;height:19px;background:linear-gradient(#5a5a5a,#535353)"></div><div style="position:absolute;left:0px;top:41px;width:41px;height:3px;background:#555"></div><div style="position:absolute;left:0px;top:44px;width:1919px;height:1px;background:#2c2c2c"></div><div style="position:absolute;left:47px;top:27px;width:50px;height:19px;background:linear-gradient(#5e5e5e,#5c5c5c);border:1px solid #353535;border-bottom:none;border-radius:2px 2px 0 0;box-sizing:border-box"></div><div class="t" style="left:56px;top:28px;font-size:12.5px;color:#f0f0f0;">Home</div><div class="t" style="left:108px;top:28px;font-size:12.5px;color:#dcdcdc;">Insert</div><div class="t" style="left:157px;top:28px;font-size:12.5px;color:#dcdcdc;">Annotate</div><div class="t" style="left:226px;top:28px;font-size:12.5px;color:#dcdcdc;">Parametric</div><div class="t" style="left:302px;top:28px;font-size:12.5px;color:#dcdcdc;">View</div><div class="t" style="left:347px;top:28px;font-size:12.5px;color:#dcdcdc;">Manage</div><div class="t" style="left:411px;top:28px;font-size:12.5px;color:#dcdcdc;">Output</div><div class="t" style="left:469px;top:28px;font-size:12.5px;color:#dcdcdc;">Add-ins</div><div class="t" style="left:531px;top:28px;font-size:12.5px;color:#dcdcdc;">Collaborate</div><div class="t" style="left:612px;top:28px;font-size:12.5px;color:#dcdcdc;">Featured Apps</div><div class="t" style="left:708px;top:28px;font-size:12.5px;color:#dcdcdc;">Express Tools</div><svg style="position:absolute;left:808px;top:29px;" width="28" height="12" viewBox="0 0 28 12"><rect x="1" y="1" width="13" height="8" rx="3" fill="#e8e8e8"/><path d="M5 6 l2.5-3 2.5 3z" fill="#444"/><path d="M18 4 h6 l-3 3z" fill="#e0e0e0"/></svg>
<div style="position:absolute;left:0px;top:45px;width:1919px;height:98px;background:linear-gradient(#525252,#474747 25%,#3f3f41 60%,#3b3b3b)"></div><div style="position:absolute;left:0px;top:45px;width:2px;height:98px;background:#464646"></div><div style="position:absolute;left:2px;top:45px;width:223px;height:79px;background:#5d5d5d"></div><div style="position:absolute;left:2px;top:124px;width:223px;height:19px;background:linear-gradient(#555,#4f4f4f)"></div><div style="position:absolute;left:225px;top:45px;width:2px;height:98px;background:#464646"></div><div class="t" style="left:93px;top:125px;font-size:12.5px;color:#ececec;">Draw</div><div style="position:absolute;left:227px;top:45px;width:247px;height:79px;background:#5d5d5d"></div><div style="position:absolute;left:227px;top:124px;width:247px;height:19px;background:linear-gradient(#555,#4f4f4f)"></div><div style="position:absolute;left:474px;top:45px;width:2px;height:98px;background:#464646"></div><div class="t" style="left:325px;top:125px;font-size:12.5px;color:#ececec;">Modify</div><div style="position:absolute;left:476px;top:45px;width:187px;height:79px;background:#5d5d5d"></div><div style="position:absolute;left:476px;top:124px;width:187px;height:19px;background:linear-gradient(#555,#4f4f4f)"></div><div style="position:absolute;left:663px;top:45px;width:2px;height:98px;background:#464646"></div><div class="t" style="left:533px;top:125px;font-size:12.5px;color:#ececec;">Annotation</div><div style="position:absolute;left:665px;top:45px;width:271px;height:79px;background:#5d5d5d"></div><div style="position:absolute;left:665px;top:124px;width:271px;height:19px;background:linear-gradient(#555,#4f4f4f)"></div><div style="position:absolute;left:936px;top:45px;width:2px;height:98px;background:#464646"></div><div class="t" style="left:777px;top:125px;font-size:12.5px;color:#ececec;">Layers</div><div style="position:absolute;left:938px;top:45px;width:159px;height:79px;background:#5d5d5d"></div><div style="position:absolute;left:938px;top:124px;width:159px;height:19px;background:linear-gradient(#555,#4f4f4f)"></div><div style="position:absolute;left:1097px;top:45px;width:2px;height:98px;background:#464646"></div><div class="t" style="left:997px;top:125px;font-size:12.5px;color:#ececec;">Block</div><div style="position:absolute;left:1099px;top:45px;width:263px;height:79px;background:#5d5d5d"></div><div style="position:absolute;left:1099px;top:124px;width:263px;height:19px;background:linear-gradient(#555,#4f4f4f)"></div><div style="position:absolute;left:1362px;top:45px;width:2px;height:98px;background:#464646"></div><div class="t" style="left:1192px;top:125px;font-size:12.5px;color:#ececec;;transform:scaleX(0.93);transform-origin:0 0">Properties</div><div style="position:absolute;left:1364px;top:45px;width:68px;height:79px;background:#5d5d5d"></div><div style="position:absolute;left:1364px;top:124px;width:68px;height:19px;background:linear-gradient(#555,#4f4f4f)"></div><div style="position:absolute;left:1432px;top:45px;width:2px;height:98px;background:#464646"></div><div class="t" style="left:1371px;top:125px;font-size:12.5px;color:#ececec;">Groups</div><div style="position:absolute;left:1434px;top:45px;width:95px;height:79px;background:#5d5d5d"></div><div style="position:absolute;left:1434px;top:124px;width:95px;height:19px;background:linear-gradient(#555,#4f4f4f)"></div><div style="position:absolute;left:1529px;top:45px;width:2px;height:98px;background:#464646"></div><div class="t" style="left:1453px;top:125px;font-size:12.5px;color:#ececec;">Utilities</div><div style="position:absolute;left:1531px;top:45px;width:78px;height:79px;background:#5d5d5d"></div><div style="position:absolute;left:1531px;top:124px;width:78px;height:19px;background:linear-gradient(#555,#4f4f4f)"></div><div style="position:absolute;left:1609px;top:45px;width:2px;height:98px;background:#464646"></div><div class="t" style="left:1545px;top:125px;font-size:12.5px;color:#ececec;">Clipboard</div><div style="position:absolute;left:1611px;top:45px;width:59px;height:79px;background:#5d5d5d"></div><div style="position:absolute;left:1611px;top:124px;width:59px;height:19px;background:linear-gradient(#555,#4f4f4f)"></div><div style="position:absolute;left:1670px;top:45px;width:2px;height:98px;background:#464646"></div><div class="t" style="left:1615px;top:125px;font-size:12.5px;color:#ececec;">View</div><svg style="position:absolute;left:126.5px;top:129px;" width="10" height="8" viewBox="0 0 10 8"><path d="M0 1.5 h9 l-4.5 4.5z" fill="#ececec"/></svg><svg style="position:absolute;left:368.5px;top:129px;" width="10" height="8" viewBox="0 0 10 8"><path d="M0 1.5 h9 l-4.5 4.5z" fill="#ececec"/></svg><svg style="position:absolute;left:599.5px;top:129px;" width="10" height="8" viewBox="0 0 10 8"><path d="M0 1.5 h9 l-4.5 4.5z" fill="#ececec"/></svg><svg style="position:absolute;left:817.5px;top:129px;" width="10" height="8" viewBox="0 0 10 8"><path d="M0 1.5 h9 l-4.5 4.5z" fill="#ececec"/></svg><svg style="position:absolute;left:1032px;top:129px;" width="10" height="8" viewBox="0 0 10 8"><path d="M0 1.5 h9 l-4.5 4.5z" fill="#ececec"/></svg><svg style="position:absolute;left:1252px;top:129px;" width="10" height="8" viewBox="0 0 10 8"><path d="M0 1.5 h9 l-4.5 4.5z" fill="#ececec"/></svg><svg style="position:absolute;left:1416px;top:129px;" width="10" height="8" viewBox="0 0 10 8"><path d="M0 1.5 h9 l-4.5 4.5z" fill="#ececec"/></svg><svg style="position:absolute;left:1499.5px;top:129px;" width="10" height="8" viewBox="0 0 10 8"><path d="M0 1.5 h9 l-4.5 4.5z" fill="#ececec"/></svg><svg style="position:absolute;left:1643.5px;top:129px;" width="10" height="8" viewBox="0 0 10 8"><path d="M0 1.5 h9 l-4.5 4.5z" fill="#ececec"/></svg><svg style="position:absolute;left:1352px;top:128px;" width="10" height="10" viewBox="0 0 10 10"><path d="M1 1 l7 7 M8 3 v5 h-5" stroke="#ddd" stroke-width="1.2" fill="none"/></svg><svg style="position:absolute;left:1659px;top:128px;" width="10" height="10" viewBox="0 0 10 10"><path d="M1 1 l7 7 M8 3 v5 h-5" stroke="#ddd" stroke-width="1.2" fill="none"/></svg><div style="position:absolute;left:0px;top:142px;width:1919px;height:1px;background:#2a2a2a"></div><div style="position:absolute;left:0px;top:143px;width:1919px;height:1px;background:#7a7a7a"></div><svg style="position:absolute;left:0px;top:45px;top:0px" width="230" height="100" viewBox="0 0 230 100"><line x1="8" y1="80" x2="36" y2="53" stroke="#dcdcdc" stroke-width="1"/><rect x="6" y="78" width="4" height="4" fill="#5ab4f0"/><rect x="35" y="51" width="4" height="4" fill="#5ab4f0"/><path d="M52 75 h20 M71 58 a8.5 8.5 0 0 1 0 17" stroke="#dcdcdc" fill="none"/><rect x="50" y="73" width="4" height="4" fill="#5ab4f0"/><rect x="69" y="73" width="4" height="4" fill="#5ab4f0"/><rect x="69" y="56" width="4" height="4" fill="#5ab4f0"/><circle cx="115" cy="67" r="15.5" stroke="#dcdcdc" fill="none"/><path d="M115 67 l8-8" stroke="#5ab4f0" stroke-width="1.3"/><path d="M124 57 l-5 1 4 4z" fill="#5ab4f0"/><rect x="113" y="65" width="4" height="4" fill="#5ab4f0"/><path d="M150 81 q5-22 28-27" stroke="#dcdcdc" fill="none"/><rect x="148" y="79" width="4" height="4" fill="#5ab4f0"/><rect x="156" y="60" width="4" height="4" fill="#5ab4f0"/><rect x="175" y="52" width="4" height="4" fill="#5ab4f0"/><rect x="188.5" y="56.5" width="13" height="9" fill="none" stroke="#dcdcdc"/><rect x="186" y="54" width="3" height="3" fill="#5ab4f0"/><rect x="200" y="64" width="3" height="3" fill="#5ab4f0"/><ellipse cx="195" cy="85" rx="7" ry="5" fill="none" stroke="#dcdcdc" stroke-dasharray="3 2"/><rect x="193" y="83.5" width="3" height="3" fill="#5ab4f0"/><rect x="200" y="83.5" width="3" height="3" fill="#5ab4f0"/><rect x="188.5" y="102.5" width="12" height="12" fill="none" stroke="#dcdcdc"/><path d="M187 102.5 h15 M187 114.5 h15 M188.5 101 v15 M200.5 101 v15" stroke="#dcdcdc"/><path d="M190 112 l9-9 M190 108 l5-5 M194 113 l5-5" stroke="#5ab4f0" stroke-width="1.2"/><path d="M209 59 h7 l-3.5 3.5z" fill="#eee"/><path d="M209 83 h7 l-3.5 3.5z" fill="#eee"/><path d="M209 107 h7 l-3.5 3.5z" fill="#eee"/><path d="M112 104 h7 l-3.5 3.5z M158 104 h7 l-3.5 3.5z" fill="#eee"/></svg><div class="t" style="left:12px;top:88px;font-size:12.5px;color:#e6e6e6;">Line</div><div class="t" style="left:45px;top:88px;font-size:12.5px;color:#e6e6e6;">Polyline</div><div class="t" style="left:101px;top:88px;font-size:12.5px;color:#e6e6e6;">Circle</div><div class="t" style="left:153px;top:88px;font-size:12.5px;color:#e6e6e6;">Arc</div><svg style="position:absolute;left:0px;top:0px;" width="480" height="145" viewBox="0 0 480 145"><path d="M240 53 v15 M233 60 h15" stroke="#f0f0f0" stroke-width="1.6"/><path d="M240 52 l-3 3 h6z M240 69 l-3-3 h6z M232 60 l3-3 v6z M249 60 l-3-3 v6z" fill="#f0f0f0"/><circle cx="236" cy="81" r="3" fill="none" stroke="#e0e0e0"/><circle cx="237" cy="89" r="3" fill="none" stroke="#5ab4f0"/><circle cx="242" cy="89" r="3" fill="none" stroke="#5ab4f0"/><path d="M241 80 h5 v4" stroke="#e0e0e0" fill="none"/><path d="M234 101 v15 h6 M234 101 h7 l4 3" stroke="#e8e8e8" fill="none"/><path d="M241 104 l4 12" stroke="#5ab4f0"/><path d="M238 113 h5" stroke="#e8e8e8"/><path d="M316 56 a7 7 0 1 1 -5 -2" stroke="#e8e8e8" stroke-width="1.4" fill="none"/><path d="M310 51 l3 4 -4 2z" fill="#e8e8e8"/><path d="M305.5 91.5 l6-14 v14z" fill="none" stroke="#e8e8e8" stroke-width="1.2"/><path d="M314 77.5 v14 h5.5z" fill="none" stroke="#5ab4f0" stroke-width="1.5"/><rect x="305.5" y="101.5" width="15" height="15" fill="none" stroke="#5ab4f0"/><rect x="305.5" y="108.5" width="8" height="8" fill="none" stroke="#e8e8e8"/><path d="M375 53 h17" stroke="#e8e8e8" stroke-dasharray="2 2"/><path d="M380 54 l7 12 M387 54 l-7 12" stroke="#e8e8e8" stroke-width="1.3"/><circle cx="380" cy="67" r="2" fill="none" stroke="#e8e8e8"/><circle cx="387" cy="67" r="2" fill="none" stroke="#e8e8e8"/><path d="M375 93 v-6 q0-9 9-10" stroke="#5ab4f0" fill="none" stroke-width="1.2"/><path d="M384 77 h6" stroke="#e8e8e8"/><rect x="375.5" y="101.5" width="6" height="6" fill="none" stroke="#5ab4f0"/><rect x="375.5" y="109.5" width="6" height="6" fill="none" stroke="#5ab4f0"/><rect x="383.5" y="101.5" width="6" height="6" fill="none" stroke="#5ab4f0"/><rect x="383.5" y="109.5" width="6" height="6" fill="none" stroke="#5ab4f0"/><path d="M428 59 h7 l-3.5 3.5z" fill="#eee"/><path d="M428 83 h7 l-3.5 3.5z" fill="#eee"/><path d="M428 107 h7 l-3.5 3.5z" fill="#eee"/><path d="M452 67 l10-12 3 3 -10 12z" fill="#f0c070"/><path d="M450 70 h15" stroke="#5ab4f0"/><path d="M452 67 l3 3 h-4z" fill="#e05050"/><path d="M450 83 h12 v9 h-12z M450 83 l4-4 h11 l-3 4 M465 79 v9 l-3 4" fill="none" stroke="#5ab4f0"/><path d="M465 103 h-8 a5 5 0 0 0 0 10 h8 M465 106 h-7 a2 2 0 0 0 0 4 h7" fill="none" stroke="#5ab4f0" stroke-width="1.2"/></svg><div class="t" style="left:254px;top:54px;font-size:12.5px;color:#e6e6e6;">Move</div><div class="t" style="left:254px;top:78px;font-size:12.5px;color:#e6e6e6;">Copy</div><div class="t" style="left:254px;top:102px;font-size:12.5px;color:#e6e6e6;">Stretch</div><div class="t" style="left:326px;top:54px;font-size:12.5px;color:#e6e6e6;">Rotate</div><div class="t" style="left:326px;top:78px;font-size:12.5px;color:#e6e6e6;">Mirror</div><div class="t" style="left:326px;top:102px;font-size:12.5px;color:#e6e6e6;">Scale</div><div class="t" style="left:395px;top:54px;font-size:12.5px;color:#e6e6e6;">Trim</div><div class="t" style="left:395px;top:78px;font-size:12.5px;color:#e6e6e6;">Fillet</div><div class="t" style="left:395px;top:102px;font-size:12.5px;color:#e6e6e6;">Array</div><svg style="position:absolute;left:0px;top:0px;" width="670" height="145" viewBox="0 0 670 145"><path d="M487 82 l10-29 h6 l10 29 h-5 l-3-8 h-10 l-3 8z M496 70 h8 l-4-12z" fill="#e4e4e4" fill-rule="evenodd"/><path d="M497 104 h6 l-3 3z" fill="#eee"/><path d="M537 53 v30 M567 53 v30 M537 57 h30" stroke="#e0e0e0"/><path d="M537 57 l4-2 v4z M567 57 l-4-2 v4z" fill="#e0e0e0"/><path d="M552 68 v5 M544 73 l4 3 M560 73 l-4 3 M541 80 h5 M558 80 h5" stroke="#f0b030" stroke-width="2"/><path d="M589 53 v16 M605 53 v16 M589 60 h16" stroke="#5ab4f0"/><path d="M589 53 v16 M605 53 v16" stroke="#e0e0e0"/><circle cx="601" cy="81" r="3.5" fill="none" stroke="#e0e0e0"/><path d="M598 83 l-7 7" stroke="#e0e0e0"/><path d="M590 91 l1-4 3 3z" fill="#e0e0e0"/><rect x="589.5" y="101.5" width="15" height="13" fill="none" stroke="#e0e0e0"/><path d="M589 105.5 h16 M589 109.5 h16 M594.5 101 v14 M599.5 101 v14" stroke="#e0e0e0"/><path d="M648.5 59 h7 l-3.5 3.5z M651.5 83 h7 l-3.5 3.5z" fill="#eee"/></svg><div class="t" style="left:489px;top:88px;font-size:12.5px;color:#e6e6e6;">Text</div><div class="t" style="left:524px;top:88px;font-size:12.5px;color:#e6e6e6;">Dimension</div><div class="t" style="left:610px;top:54px;font-size:12.5px;color:#e6e6e6;">Linear</div><div class="t" style="left:610px;top:78px;font-size:12.5px;color:#e6e6e6;">Leader</div><div class="t" style="left:610px;top:102px;font-size:12.5px;color:#e6e6e6;">Table</div><svg style="position:absolute;left:0px;top:0px;" width="940" height="145" viewBox="0 0 940 145"><path d="M684 59 l6-6 h17 l-6 6z" fill="#dcdcdc" stroke="#5b5b5b" stroke-width="0.8"/><path d="M684 66 l6-6 h17 l-6 6z" fill="#dcdcdc" stroke="#5b5b5b" stroke-width="0.8"/><path d="M684 73 l6-6 h17 l-6 6z" fill="#dcdcdc" stroke="#5b5b5b" stroke-width="0.8"/><rect x="697" y="66" width="12" height="18" fill="#e8e8e8"/><rect x="699" y="68" width="8" height="6" fill="#5ab4f0"/><path d="M700 78 h6 M700 81 h6" stroke="#555"/></svg><div class="t" style="left:683px;top:88px;font-size:12.5px;color:#e6e6e6;">Layer</div><div class="t" style="left:670px;top:104px;font-size:12.5px;color:#e6e6e6;;transform:scaleX(0.93);transform-origin:0 0">Properties</div><div style="position:absolute;left:727px;top:50px;width:208px;height:22px;background:linear-gradient(#4a4a4a,#454545);border:1px solid #343434;box-sizing:border-box"></div><svg style="position:absolute;left:727px;top:50px;" width="208" height="22" viewBox="0 0 208 22"><circle cx="12" cy="9" r="4.5" fill="#f5c040"/><rect x="10" y="13" width="4" height="4" fill="#ddd"/><circle cx="31" cy="11" r="4" fill="#f5c040"/><path d="M31 3 v3 M31 16 v3 M23 11 h3 M36 11 h3 M25 5 l2 2 M35 15 l2 2 M25 17 l2-2 M35 7 l2-2" stroke="#f5c040" stroke-width="1.3"/><rect x="46" y="9" width="9" height="8" fill="#f0b030"/><path d="M48 9 v-3 a3 3 0 0 1 6 0" stroke="#f0b030" stroke-width="1.5" fill="none"/><rect x="63" y="4" width="13" height="14" fill="#fff"/><path d="M194 9 h8 l-4 4z" fill="#eee"/></svg><div class="t" style="left:810px;top:54px;font-size:12.5px;color:#f0f0f0;">0</div><svg style="position:absolute;left:0px;top:0px;" width="940" height="145" viewBox="0 0 940 145"><path d="M731 83 l4-5 h12 l-4 5z" fill="#dcdcdc"/><circle cx="743" cy="86" r="3" fill="#5ab4f0"/><rect x="742" y="89" width="2" height="3" fill="#ddd"/><path d="M755 83 l4-5 h12 l-4 5z" fill="#dcdcdc"/><path d="M755 85 h12 M755 88 h12" stroke="#dcdcdc" stroke-width="1.5"/><path d="M767 85 l-5 6" stroke="#ddd"/><path d="M779 83 l4-5 h12 l-4 5z" fill="#dcdcdc"/><path d="M790 83 v8 M786 87 h8 M787 84 l6 6 M793 84 l-6 6" stroke="#5ab4f0" stroke-width="1.2"/><path d="M803 83 l4-5 h12 l-4 5z" fill="#dcdcdc"/><rect x="811" y="86" width="7" height="6" fill="#5ab4f0"/><path d="M812.5 86 v-2 a2 2 0 0 1 4 0 v2" stroke="#5ab4f0" fill="none"/><circle cx="836" cy="80" r="3" fill="#e0e0e0"/><path d="M827 88 l4-4 h12 l-4 4z M827 92 l4-4 h12 l-4 4z" fill="#5ab4f0"/><path d="M731 107 l4-5 h12 l-4 5z" fill="#dcdcdc"/><path d="M731 110 h12 M731 113 h12" stroke="#dcdcdc" stroke-width="1.5"/><circle cx="744" cy="110" r="3.5" fill="#f5c040"/><path d="M755 107 l4-5 h12 l-4 5z" fill="#dcdcdc"/><path d="M755 109 h12 M755 112 h12" stroke="#5ab4f0" stroke-width="1.5"/><path d="M762 116 l5-5" stroke="#ddd"/><path d="M779 107 l4-5 h12 l-4 5z" fill="#dcdcdc"/><path d="M779 109 h10 M779 112 h10" stroke="#dcdcdc" stroke-width="1.5"/><circle cx="791" cy="112" r="3" fill="#f5c040"/><path d="M803 107 l4-5 h12 l-4 5z" fill="#dcdcdc"/><rect x="811" y="110" width="7" height="6" fill="#f0b030"/><path d="M812.5 110 v-2 a2 2 0 0 1 4 0" stroke="#f0b030" fill="none"/><path d="M827 108 l4-4 h12 l-4 4z M827 112 l4-4 h12 l-4 4z M827 116 l4-4 h12 l-4 4z" fill="#dcdcdc"/><path d="M836 114 l6 5 3-3 -5-5z" fill="#f0c070"/></svg><div class="t" style="left:848px;top:78px;font-size:12.5px;color:#e6e6e6;">Make Current</div><div class="t" style="left:848px;top:102px;font-size:12.5px;color:#e6e6e6;">Match Layer</div><svg style="position:absolute;left:0px;top:0px;" width="1100" height="145" viewBox="0 0 1100 145"><path d="M965 50 h6 l4 4 v24 h-10z" fill="#9cc8ee"/><rect x="944.5" y="62.5" width="24" height="16" fill="#888" stroke="#cfcfcf" stroke-width="1.3"/><circle cx="964" cy="74" r="7" fill="none" stroke="#cfcfcf" stroke-width="1.3"/><path d="M956 104 h6 l-3 3z" fill="#eee"/><rect x="984.5" y="60.5" width="10" height="7" fill="none" stroke="#ddd"/><circle cx="992" cy="67" r="3" fill="none" stroke="#ddd"/><path d="M995 52 v6 M992 55 h6 M993 53 l4 4 M997 53 l-4 4" stroke="#f5c040" stroke-width="1.2"/><rect x="984.5" y="84.5" width="10" height="7" fill="none" stroke="#ddd"/><circle cx="992" cy="91" r="3" fill="none" stroke="#ddd"/><path d="M992 86 l5-6 2 2 -5 6z" fill="#f0c070"/><path d="M997 80 l2 2 1-2z" fill="#e05050"/><path d="M984 107 h8 l5 5 -7 6 -6-6z" fill="none" stroke="#e0e0e0" stroke-width="1.5"/><path d="M990 112 l6-7 2 2 -6 7z" fill="#f0c070"/><path d="M1086 107 h7 l-3.5 3.5z" fill="#eee"/></svg><div class="t" style="left:945px;top:88px;font-size:12.5px;color:#e6e6e6;">Insert</div><div class="t" style="left:1004px;top:54px;font-size:12.5px;color:#e6e6e6;">Create</div><div class="t" style="left:1004px;top:78px;font-size:12.5px;color:#e6e6e6;">Edit</div><div class="t" style="left:1004px;top:102px;font-size:12.5px;color:#e6e6e6;">Edit Attributes</div><svg style="position:absolute;left:0px;top:0px;" width="1370" height="145" viewBox="0 0 1370 145"><rect x="1116" y="52" width="20" height="27" fill="#d8d8d8"/><rect x="1118" y="54" width="15" height="10" fill="#5ab4f0"/><path d="M1120 70 h6 M1120 74 h8" stroke="#666"/><path d="M1132 76 l7-7 5 5 -7 7z" fill="#f0c070"/><path d="M1139 69 l3-3 5 5 -3 3z" fill="#f4f4f4"/><circle cx="1171" cy="60" r="8" fill="#e85050"/><path d="M1171 60 l0-8 a8 8 0 0 1 7 4z" fill="#f0c040"/><path d="M1171 60 l7-4 a8 8 0 0 1 0 8z" fill="#60c060"/><path d="M1171 60 l7 4 a8 8 0 0 1 -7 4z" fill="#4090e0"/><path d="M1171 60 l0 8 a8 8 0 0 1 -7-4z" fill="#9050d0"/><path d="M1163 78 h16 M1163 82 h16 M1163 86 h16 M1163 90 h16" stroke="#dcdcdc" stroke-width="2"/><path d="M1163 102 h16 M1163 106 h16 M1163 110 h16 M1163 114 h16" stroke="#dcdcdc" stroke-dasharray="2 1"/></svg><div class="t" style="left:1114px;top:88px;font-size:12.5px;color:#e6e6e6;">Match</div><div class="t" style="left:1104px;top:104px;font-size:12.5px;color:#e6e6e6;;transform:scaleX(0.93);transform-origin:0 0">Properties</div><div style="position:absolute;left:1181px;top:50px;width:180px;height:22px;background:linear-gradient(#4c4c4c,#454545);border:1px solid #333;box-sizing:border-box"></div><svg style="position:absolute;left:1349px;top:58px;" width="10" height="6" viewBox="0 0 10 6"><path d="M0 0 h9 l-4.5 4.5z" fill="#eee"/></svg><div style="position:absolute;left:1181px;top:73px;width:180px;height:22px;background:linear-gradient(#4c4c4c,#454545);border:1px solid #333;box-sizing:border-box"></div><svg style="position:absolute;left:1349px;top:81px;" width="10" height="6" viewBox="0 0 10 6"><path d="M0 0 h9 l-4.5 4.5z" fill="#eee"/></svg><div style="position:absolute;left:1181px;top:97px;width:180px;height:22px;background:linear-gradient(#4c4c4c,#454545);border:1px solid #333;box-sizing:border-box"></div><svg style="position:absolute;left:1349px;top:105px;" width="10" height="6" viewBox="0 0 10 6"><path d="M0 0 h9 l-4.5 4.5z" fill="#eee"/></svg><div style="position:absolute;left:1194px;top:54px;width:16px;height:14px;background:#fff"></div><div class="t" style="left:1220px;top:54px;font-size:12.5px;color:#e6e6e6;;transform:scaleX(0.88);transform-origin:0 0">ByLayer</div><div style="position:absolute;left:1185px;top:83px;width:63px;height:1px;background:#f0f0f0"></div><div class="t" style="left:1251px;top:78px;font-size:12.5px;color:#e6e6e6;;transform:scaleX(0.88);transform-origin:0 0">ByLayer</div><div style="position:absolute;left:1185px;top:107px;width:63px;height:1px;background:#f0f0f0"></div><div class="t" style="left:1251px;top:101px;font-size:12.5px;color:#e6e6e6;;transform:scaleX(0.81);transform-origin:0 0">BYLAYER</div><svg style="position:absolute;left:0px;top:0px;" width="1680" height="145" viewBox="0 0 1680 145"><path d="M1373 58 h-3 v24 h3 M1395 58 h3 v24 h-3" stroke="#ddd" stroke-width="1.5" fill="none"/><rect x="1375" y="64" width="9" height="7" fill="#5ab4f0"/><circle cx="1380" cy="76" r="3.5" fill="none" stroke="#aaa" stroke-width="1.5"/><path d="M1391 53 v12 M1385 59 h12 M1387 55 l8 8 M1395 55 l-8 8" stroke="#f5c040" stroke-width="2"/><rect x="1411" y="54" width="5" height="5" fill="none" stroke="#5ab4f0"/><circle cx="1413" cy="64" r="2.5" fill="none" stroke="#ddd"/><path d="M1418 58 l6 6 M1424 58 l-6 6" stroke="#e04060" stroke-width="1.5"/><path d="M1412 78 h-2 v14 h2" stroke="#ddd" fill="none"/><rect x="1413" y="79" width="5" height="5" fill="none" stroke="#5ab4f0"/><circle cx="1415" cy="88" r="2.5" fill="none" stroke="#ddd"/><path d="M1419 92 l6-6 2 2 -6 6z" fill="#f0c070"/><rect x="1406" y="98" width="24" height="22" fill="#3e6e9e" stroke="#7aa8d8"/><rect x="1412" y="102" width="5" height="5" fill="none" stroke="#8fd080"/><circle cx="1414" cy="111" r="2.5" fill="none" stroke="#8fd080"/><path d="M1419 104 v13 l3-3 3 5 2-1 -3-5 4 0z" fill="#fff"/><path d="M1455 64 v10 M1483 64 v10 M1455 67 h28" stroke="#ddd"/><rect x="1455" y="72" width="28" height="6" fill="#f0b030"/><path d="M1466 104 h6 l-3 3z M1554 104 h6 l-3 3z M1638 104 h6 l-3 3z" fill="#eee"/><path d="M1507 55 v14 l3-3 3 5 2-1 -3-5 4 0z" fill="#fff"/><rect x="1514" y="60" width="8" height="8" fill="#5ab4f0"/><path d="M1513 52 l-2 5 3 0 -2 5" stroke="#f5c040" fill="none"/><rect x="1507.5" y="78.5" width="14" height="14" fill="none" stroke="#60c060" stroke-dasharray="2 1"/><rect x="1510" y="81" width="8" height="8" fill="#60c060"/><path d="M1514 84 v10 l2-2 2 4 2-1 -2-4 3 0z" fill="#fff"/><rect x="1508.5" y="101.5" width="12" height="15" fill="none" stroke="#ddd" stroke-width="1.3"/><rect x="1511" y="104" width="7" height="3" fill="#ddd"/><path d="M1511 110 h2 M1515 110 h2 M1511 113 h2 M1515 113 h2" stroke="#ddd" stroke-width="1.5"/><rect x="1544" y="56" width="22" height="27" fill="#e8b070"/><rect x="1551" y="53" width="8" height="5" fill="#ddd"/><path d="M1553 62 h10 l5 5 v17 h-15z" fill="#e6e6e6"/><path d="M1587 53 h11 l3 3 v5 h-14z" fill="#ddd"/><path d="M1589 57 h8 M1589 60 h5" stroke="#888"/><path d="M1594 58 l8 9 M1602 58 l-8 9" stroke="#ddd"/><circle cx="1595" cy="67" r="2" fill="none" stroke="#ddd"/><circle cx="1601" cy="67" r="2" fill="none" stroke="#ddd"/><rect x="1588" y="77" width="8" height="11" fill="#ddd"/><path d="M1591 80 h6 l3 3 v9 h-9z" fill="#e8e8e8" stroke="#5b5b5b" stroke-width="0.8"/><path d="M1625 56 h10 v12 h22 v12 h-32z" fill="#e4e4e4"/></svg><div class="t" style="left:1368px;top:88px;font-size:12.5px;color:#e6e6e6;">Group</div><div class="t" style="left:1446px;top:88px;font-size:12.5px;color:#e6e6e6;">Measure</div><div class="t" style="left:1543px;top:88px;font-size:12.5px;color:#e6e6e6;">Paste</div><div class="t" style="left:1629px;top:88px;font-size:12.5px;color:#e6e6e6;">Base</div>
<div style="position:absolute;left:0px;top:144px;width:1919px;height:25px;background:#3b3b3b"></div><div style="position:absolute;left:0px;top:169px;width:1919px;height:4px;background:#595959"></div><svg style="position:absolute;left:0px;top:0px;" width="1919" height="175" viewBox="0 0 1919 175"><defs><linearGradient id="tg" x1="0" y1="0" x2="0" y2="1"><stop offset="0" stop-color="#646464"/><stop offset="1" stop-color="#565656"/></linearGradient><linearGradient id="tga" x1="0" y1="0" x2="0" y2="1"><stop offset="0" stop-color="#6a6a6a"/><stop offset="1" stop-color="#5a5a5a"/></linearGradient></defs><path d="M10 169.5 C17 169.5 20 166 21 161 L23 153 C24 149.5 26 147.5 31 147.5 L136 147.5 C141 147.5 144 150 144 155 L144 161 C144 166 141 169.5 136 169.5 Z" fill="url(#tg)" stroke="#4a4a4a" stroke-width="0.8"/><path d="M141 169.5 C148 169.5 151 166 152 161 L154 153 C155 149.5 157 147.5 162 147.5 L327 147.5 C332 147.5 335 150 335 155 L335 161 C335 166 332 169.5 327 169.5 Z" fill="url(#tg)" stroke="#4a4a4a" stroke-width="0.8"/><path d="M336 169.5 C343 169.5 346 166 347 161 L349 153 C350 149.5 352 147.5 357 147.5 L596 147.5 C601 147.5 604 150 604 155 L604 161 C604 166 601 169.5 596 169.5 Z" fill="url(#tg)" stroke="#4a4a4a" stroke-width="0.8"/><path d="M604 169.5 C611 169.5 614 166 615 161 L617 153 C618 149.5 620 147.5 625 147.5 L861 147.5 C866 147.5 869 150 869 155 L869 161 C869 166 866 169.5 861 169.5 Z" fill="url(#tg)" stroke="#4a4a4a" stroke-width="0.8"/><path d="M869 169.5 C876 169.5 879 166 880 161 L882 153 C883 149.5 885 147.5 890 147.5 L1128 147.5 C1133 147.5 1136 150 1136 155 L1136 161 C1136 166 1133 169.5 1128 169.5 Z" fill="url(#tg)" stroke="#4a4a4a" stroke-width="0.8"/><path d="M1136 169.5 C1143 169.5 1146 166 1147 161 L1149 153 C1150 149.5 1152 147.5 1157 147.5 L1394 147.5 C1399 147.5 1402 150 1402 155 L1402 161 C1402 166 1399 169.5 1394 169.5 Z" fill="url(#tg)" stroke="#4a4a4a" stroke-width="0.8"/><path d="M1402 169.5 C1409 169.5 1412 166 1413 161 L1415 153 C1416 149.5 1418 147.5 1423 147.5 L1663 147.5 C1668 147.5 1671 150 1671 155 L1671 161 C1671 166 1668 169.5 1663 169.5 Z" fill="url(#tga)" stroke="#4a4a4a" stroke-width="0.8"/><path d="M1671 169 C1674 169 1675 166 1676 162 L1677 154 C1678 150 1679 149 1683 149 L1694 149 C1698 149 1699 151 1699 154 L1699 163 C1699 167 1697 169 1693 169 Z" fill="#4d4d4d"/><path d="M1681 159 h10 M1686 154 v10" stroke="#cfcfcf" stroke-width="1.8"/><path d="M1901 151 l4 4 4-4 M1901 156 l4 4 4-4" stroke="#ddd" stroke-width="1.3" fill="none"/></svg><div class="t" style="left:32px;top:151px;font-size:12.5px;color:#d8d8d8;">Start</div><div class="t" style="left:155px;top:151px;font-size:12.5px;color:#d8d8d8;;transform:scaleX(0.875);transform-origin:0 0">INSTALASI SISTIM MATV LT1*</div><svg style="position:absolute;left:314px;top:154px;" width="10" height="10" viewBox="0 0 10 10"><path d="M1.5 1.5 l7 7 M8.5 1.5 l-7 7" stroke="#9a9a9a" stroke-width="1.8"/></svg><div class="t" style="left:350px;top:151px;font-size:12.5px;color:#d8d8d8;;transform:scaleX(0.875);transform-origin:0 0">INSTALASI SISTIM...ANGAN LAMPU TAMAN</div><svg style="position:absolute;left:584px;top:154px;" width="10" height="10" viewBox="0 0 10 10"><path d="M1.5 1.5 l7 7 M8.5 1.5 l-7 7" stroke="#9a9a9a" stroke-width="1.8"/></svg><div class="t" style="left:618px;top:151px;font-size:12.5px;color:#d8d8d8;;transform:scaleX(0.875);transform-origin:0 0">INSTALASI SISTIM ...AN LANTAI BASEMENT</div><svg style="position:absolute;left:849px;top:154px;" width="10" height="10" viewBox="0 0 10 10"><path d="M1.5 1.5 l7 7 M8.5 1.5 l-7 7" stroke="#9a9a9a" stroke-width="1.8"/></svg><div class="t" style="left:883px;top:151px;font-size:12.5px;color:#d8d8d8;;transform:scaleX(0.875);transform-origin:0 0">INSTALASI SISTIM P...NGAN LANTAI DASAR</div><svg style="position:absolute;left:1116px;top:154px;" width="10" height="10" viewBox="0 0 10 10"><path d="M1.5 1.5 l7 7 M8.5 1.5 l-7 7" stroke="#9a9a9a" stroke-width="1.8"/></svg><div class="t" style="left:1150px;top:151px;font-size:12.5px;color:#d8d8d8;;transform:scaleX(0.875);transform-origin:0 0">INSTALASI SISTIM ...RANGAN LANTAI DUA*</div><svg style="position:absolute;left:1382.5px;top:154px;" width="10" height="10" viewBox="0 0 10 10"><path d="M1.5 1.5 l7 7 M8.5 1.5 l-7 7" stroke="#9a9a9a" stroke-width="1.8"/></svg><div class="t" style="left:1416px;top:151px;font-size:12.5px;color:#f4f4f4;;transform:scaleX(0.875);transform-origin:0 0">INSTALASI SISTIM ...RANGAN LANTAI SATU</div><svg style="position:absolute;left:1648px;top:154px;" width="10" height="10" viewBox="0 0 10 10"><path d="M1.5 1.5 l7 7 M8.5 1.5 l-7 7" stroke="#9a9a9a" stroke-width="1.8"/></svg>
<div style="position:absolute;left:0px;top:1002px;width:1919px;height:26px;background:#3c3c3c"></div><svg style="position:absolute;left:0px;top:0px;top:0" width="170" height="1028" viewBox="0 0 170 1028"><defs><linearGradient id="mg" x1="0" y1="0" x2="0" y2="1"><stop offset="0" stop-color="#626262"/><stop offset="1" stop-color="#8a8a8a"/></linearGradient><linearGradient id="lg" x1="0" y1="0" x2="0" y2="1"><stop offset="0" stop-color="#555"/><stop offset="1" stop-color="#636363"/></linearGradient></defs><rect x="0" y="1003" width="672" height="1" fill="#505050"/><path d="M137 1003 H162 C160 1010 158 1016 154 1018 C152 1019 150 1019.5 146 1019.5 H139 C139 1014 138 1008 137 1003 Z" fill="#4b4b4b"/><path d="M70 1003 H141 C138 1008 136 1014 134 1018 C133 1020 131 1020.8 127 1020.8 H78 C75 1020.8 74 1019 73 1016 L71 1008 C70.5 1005 70 1004 70 1003 Z" fill="url(#lg)"/><path d="M7 1003 H73 C70 1006 69 1010 68 1015 C67 1019 65.5 1020.8 62 1020.8 H19 C16 1020.8 15 1019 14 1016 L12 1008 C11 1005 9 1003.5 7 1003 Z" fill="url(#mg)"/><path d="M145.5 1012 h9 M150 1007.5 v9" stroke="#d8d8d8" stroke-width="2"/></svg><div class="t" style="left:23.5px;top:1005.5px;font-size:12px;color:#ffffff;;transform:scaleX(0.95);transform-origin:0 0"><b>Model</b></div><div class="t" style="left:81.5px;top:1005.5px;font-size:12.5px;color:#d0d0d0;;transform:scaleX(0.92);transform-origin:0 0">Layout1</div><div style="position:absolute;left:660px;top:1002px;width:1259px;height:26px;background:#4c4c4c"></div><div style="position:absolute;left:660px;top:1002px;width:1259px;height:2px;background:#7a7a7a"></div><div style="position:absolute;left:660px;top:1004px;width:12px;height:24px;background:#3a3a3a"></div><div class="t" style="left:704px;top:1009px;font-size:12.5px;color:#f0f0f0;;transform:scaleX(0.965);transform-origin:0 0">177663.45, 65382.84, 0.00</div><div class="t" style="left:859px;top:1009px;font-size:12.5px;color:#f0f0f0;;transform:scaleX(0.93);transform-origin:0 0">MODEL</div><svg style="position:absolute;left:0px;top:0px;top:0" width="1919" height="1028" viewBox="0 0 1919 1028"><rect x="997" y="1005" width="23" height="25" fill="#4f88c6"/><rect x="1126" y="1005" width="22" height="25" fill="#4f88c6"/><rect x="1150" y="1005" width="22" height="25" fill="#4f88c6"/><rect x="1214" y="1005" width="23" height="25" fill="#4f88c6"/><rect x="1307" y="1005" width="22" height="25" fill="#4f88c6"/><rect x="1370" y="1005" width="22" height="25" fill="#4f88c6"/><rect x="1411" y="1005" width="24" height="25" fill="#4f88c6"/><rect x="1818" y="1005" width="24" height="25" fill="#4f88c6"/><path d="M914 1011 h14 M914 1016 h14 M914 1021 h14 M917 1008 v16 M921 1008 v16 M925 1008 v16" stroke="#f0f0f0" stroke-width="1"/><rect x="935" y="1010" width="1.6" height="1.6" fill="#f0f0f0"/><rect x="935" y="1015" width="1.6" height="1.6" fill="#f0f0f0"/><rect x="935" y="1020" width="1.6" height="1.6" fill="#f0f0f0"/><rect x="940" y="1010" width="1.6" height="1.6" fill="#f0f0f0"/><rect x="940" y="1015" width="1.6" height="1.6" fill="#f0f0f0"/><rect x="940" y="1020" width="1.6" height="1.6" fill="#f0f0f0"/><rect x="945" y="1010" width="1.6" height="1.6" fill="#f0f0f0"/><rect x="945" y="1015" width="1.6" height="1.6" fill="#f0f0f0"/><rect x="945" y="1020" width="1.6" height="1.6" fill="#f0f0f0"/><path d="M957 1014 h7 l-3.5 4z" fill="#f0f0f0"/><path d="M1072 1014 h7 l-3.5 4z" fill="#f0f0f0"/><path d="M1112 1014 h7 l-3.5 4z" fill="#f0f0f0"/><path d="M1177 1014 h7 l-3.5 4z" fill="#f0f0f0"/><path d="M1293 1014 h7 l-3.5 4z" fill="#f0f0f0"/><path d="M1357 1014 h7 l-3.5 4z" fill="#f0f0f0"/><path d="M1396 1014 h7 l-3.5 4z" fill="#f0f0f0"/><path d="M1545 1014 h7 l-3.5 4z" fill="#f0f0f0"/><path d="M1587 1014 h7 l-3.5 4z" fill="#f0f0f0"/><path d="M1775 1014 h7 l-3.5 4z" fill="#f0f0f0"/><path d="M1709 1014 h7 l-3.5 4z" fill="#f0f0f0"/><path d="M976 1024 v-6 h6 v-6 h8 v-4" stroke="#f0f0f0" stroke-width="1.5" fill="none"/><path d="M1003 1012 h5 M1005.5 1009.5 v5 M1003 1019 h13" stroke="#f0f0f0" stroke-width="2"/><path d="M1029 1009 v14 h12" stroke="#f0f0f0" stroke-width="1.5" fill="none"/><circle cx="1056" cy="1017" r="6" fill="none" stroke="#f0f0f0" stroke-width="1.5"/><path d="M1054 1020 l10-10" stroke="#f0f0f0" stroke-width="1.5"/><path d="M1088 1009 l10 14 M1098 1009 l-10 14" stroke="#e04040" stroke-width="1.3"/><path d="M1093 1008 v16" stroke="#60c060" stroke-width="1.3"/><path d="M1128 1023 l14-12" stroke="#f0f0f0" stroke-width="1.6"/><path d="M1128 1023 h14" stroke="#f0f0f0"/><rect x="1155" y="1011" width="12" height="12" fill="none" stroke="#f0f0f0" stroke-width="1.5"/><rect x="1153" y="1009" width="4" height="4" fill="#f0f0f0"/><path d="M1192 1011 h14 M1192 1015 h14 M1192 1019 h14 M1192 1023 h14" stroke="#f0f0f0" stroke-width="1.5"/><rect x="1217" y="1007" width="3" height="3" fill="#e8e8e8"/><rect x="1217" y="1013" width="3" height="3" fill="#e8e8e8"/><rect x="1217" y="1019" width="3" height="3" fill="#e8e8e8"/><rect x="1217" y="1025" width="3" height="3" fill="#e8e8e8"/><rect x="1220" y="1010" width="3" height="3" fill="#e8e8e8"/><rect x="1220" y="1016" width="3" height="3" fill="#e8e8e8"/><rect x="1220" y="1022" width="3" height="3" fill="#e8e8e8"/><rect x="1223" y="1007" width="3" height="3" fill="#e8e8e8"/><rect x="1223" y="1013" width="3" height="3" fill="#e8e8e8"/><rect x="1223" y="1019" width="3" height="3" fill="#e8e8e8"/><rect x="1223" y="1025" width="3" height="3" fill="#e8e8e8"/><rect x="1226" y="1010" width="3" height="3" fill="#e8e8e8"/><rect x="1226" y="1016" width="3" height="3" fill="#e8e8e8"/><rect x="1226" y="1022" width="3" height="3" fill="#e8e8e8"/><rect x="1229" y="1007" width="3" height="3" fill="#e8e8e8"/><rect x="1229" y="1013" width="3" height="3" fill="#e8e8e8"/><rect x="1229" y="1019" width="3" height="3" fill="#e8e8e8"/><rect x="1229" y="1025" width="3" height="3" fill="#e8e8e8"/><rect x="1232" y="1010" width="3" height="3" fill="#e8e8e8"/><rect x="1232" y="1016" width="3" height="3" fill="#e8e8e8"/><rect x="1232" y="1022" width="3" height="3" fill="#e8e8e8"/><rect x="1235" y="1007" width="3" height="3" fill="#e8e8e8"/><rect x="1235" y="1013" width="3" height="3" fill="#e8e8e8"/><rect x="1235" y="1019" width="3" height="3" fill="#e8e8e8"/><rect x="1235" y="1025" width="3" height="3" fill="#e8e8e8"/><path d="M1243 1009 v6 M1240 1012 h6" stroke="#f0f0f0" stroke-width="1.4"/><rect x="1249" y="1014" width="10" height="10" fill="#60c060"/><path d="M1272 1023 h10 v-9 h-10z M1272 1014 l5-5 h10 v9 l-5 5 M1282 1014 l5-5" stroke="#f0f0f0" stroke-width="1.3" fill="none"/><path d="M1311 1009 v14 h14 M1311 1023 l10-10 M1318 1010 l3 3 -4 1z" stroke="#f0f0f0" stroke-width="1.5" fill="none"/><rect x="1335" y="1011" width="12" height="12" fill="none" stroke="#f0f0f0" stroke-dasharray="2 2" stroke-width="1.5"/><circle cx="1383" cy="1016" r="7" fill="none" stroke="#f0f0f0" stroke-width="1.5"/><path d="M1383 1009 v7 l-6 4 M1383 1016 l6 4" stroke="#f0f0f0" stroke-width="1.3" fill="none"/><path d="M1417 1024 l7-15 7 15 -7-5z" fill="#f0f0f0"/><circle cx="1430" cy="1010" r="2.5" fill="none" stroke="#f0f0f0"/><path d="M1441 1024 l7-15 7 15 -7-5z" fill="#cfcfcf"/><path d="M1465 1024 l7-15 7 15 -7-5z" fill="#cfcfcf"/><circle cx="1570" cy="1016" r="5" fill="none" stroke="#f0f0f0" stroke-width="4" stroke-dasharray="2.5 1.4"/><circle cx="1570" cy="1016" r="2" fill="#4d4d4d"/><path d="M1610 1009 v15 M1603 1016.5 h15" stroke="#f0f0f0" stroke-width="1.8"/><rect x="1633" y="1009" width="8" height="15" fill="#f0f0f0"/><path d="M1636 1012 h4 M1636 1016 h4 M1636 1020 h4" stroke="#4d4d4d"/><rect x="1731" y="1009" width="11" height="14" fill="none" stroke="#f0f0f0" stroke-width="1.3"/><path d="M1733 1013 h7 M1733 1016 h7 M1733 1019 h7" stroke="#f0f0f0"/><rect x="1755" y="1009" width="15" height="11" fill="none" stroke="#f0f0f0" stroke-width="1.3"/><rect x="1763" y="1017" width="6" height="5" fill="#f0f0f0"/><rect x="1795" y="1009" width="6" height="6" fill="none" stroke="#f0f0f0"/><circle cx="1807" cy="1012" r="3" fill="none" stroke="#f0f0f0"/><path d="M1799 1024 l3-6 3 6z" fill="none" stroke="#f0f0f0"/><circle cx="1830" cy="1016" r="7" fill="none" stroke="#e8e8e8" stroke-width="1.4"/><path d="M1826 1020 l8-8" stroke="#e8e8e8" stroke-width="1.4"/><rect x="1849" y="1009" width="10" height="12" fill="#dadada"/><rect x="1849" y="1016" width="8" height="6" fill="#f0d040"/><path d="M1855 1021 l2 2 4-5" stroke="#60d060" stroke-width="1.5" fill="none"/><rect x="1873" y="1009" width="15" height="13" fill="none" stroke="#f0f0f0" stroke-width="1.2"/><path d="M1876 1019 l9-7 M1882 1012 h3 v3 M1876 1016 v3 h3" stroke="#f0f0f0" fill="none"/><path d="M1898 1010 h16 M1898 1016 h16 M1898 1022 h16" stroke="#f0f0f0" stroke-width="2"/><rect x="856" y="1003" width="2" height="25" fill="#3a3a3a"/><rect x="903" y="1003" width="2" height="25" fill="#3a3a3a"/><rect x="970" y="1003" width="2" height="25" fill="#3a3a3a"/><rect x="1412" y="1003" width="2" height="25" fill="#3a3a3a"/><rect x="1485" y="1003" width="2" height="25" fill="#3a3a3a"/><rect x="1599" y="1003" width="2" height="25" fill="#3a3a3a"/><rect x="1624" y="1003" width="2" height="25" fill="#3a3a3a"/><rect x="1725" y="1003" width="2" height="25" fill="#3a3a3a"/><rect x="1750" y="1003" width="2" height="25" fill="#3a3a3a"/><rect x="1788" y="1003" width="2" height="25" fill="#3a3a3a"/><rect x="1815" y="1003" width="2" height="25" fill="#3a3a3a"/><rect x="1840" y="1003" width="2" height="25" fill="#3a3a3a"/><rect x="1866" y="1003" width="2" height="25" fill="#3a3a3a"/><rect x="1893" y="1003" width="2" height="25" fill="#3a3a3a"/></svg><div class="t" style="left:1487px;top:1009px;font-size:12.5px;color:#f0f0f0;;transform:scaleX(0.88);transform-origin:0 0">1:1 / 100%</div><div class="t" style="left:1655px;top:1009px;font-size:12.5px;color:#f0f0f0;;transform:scaleX(0.955);transform-origin:0 0">Decimal</div>
</body></html>
